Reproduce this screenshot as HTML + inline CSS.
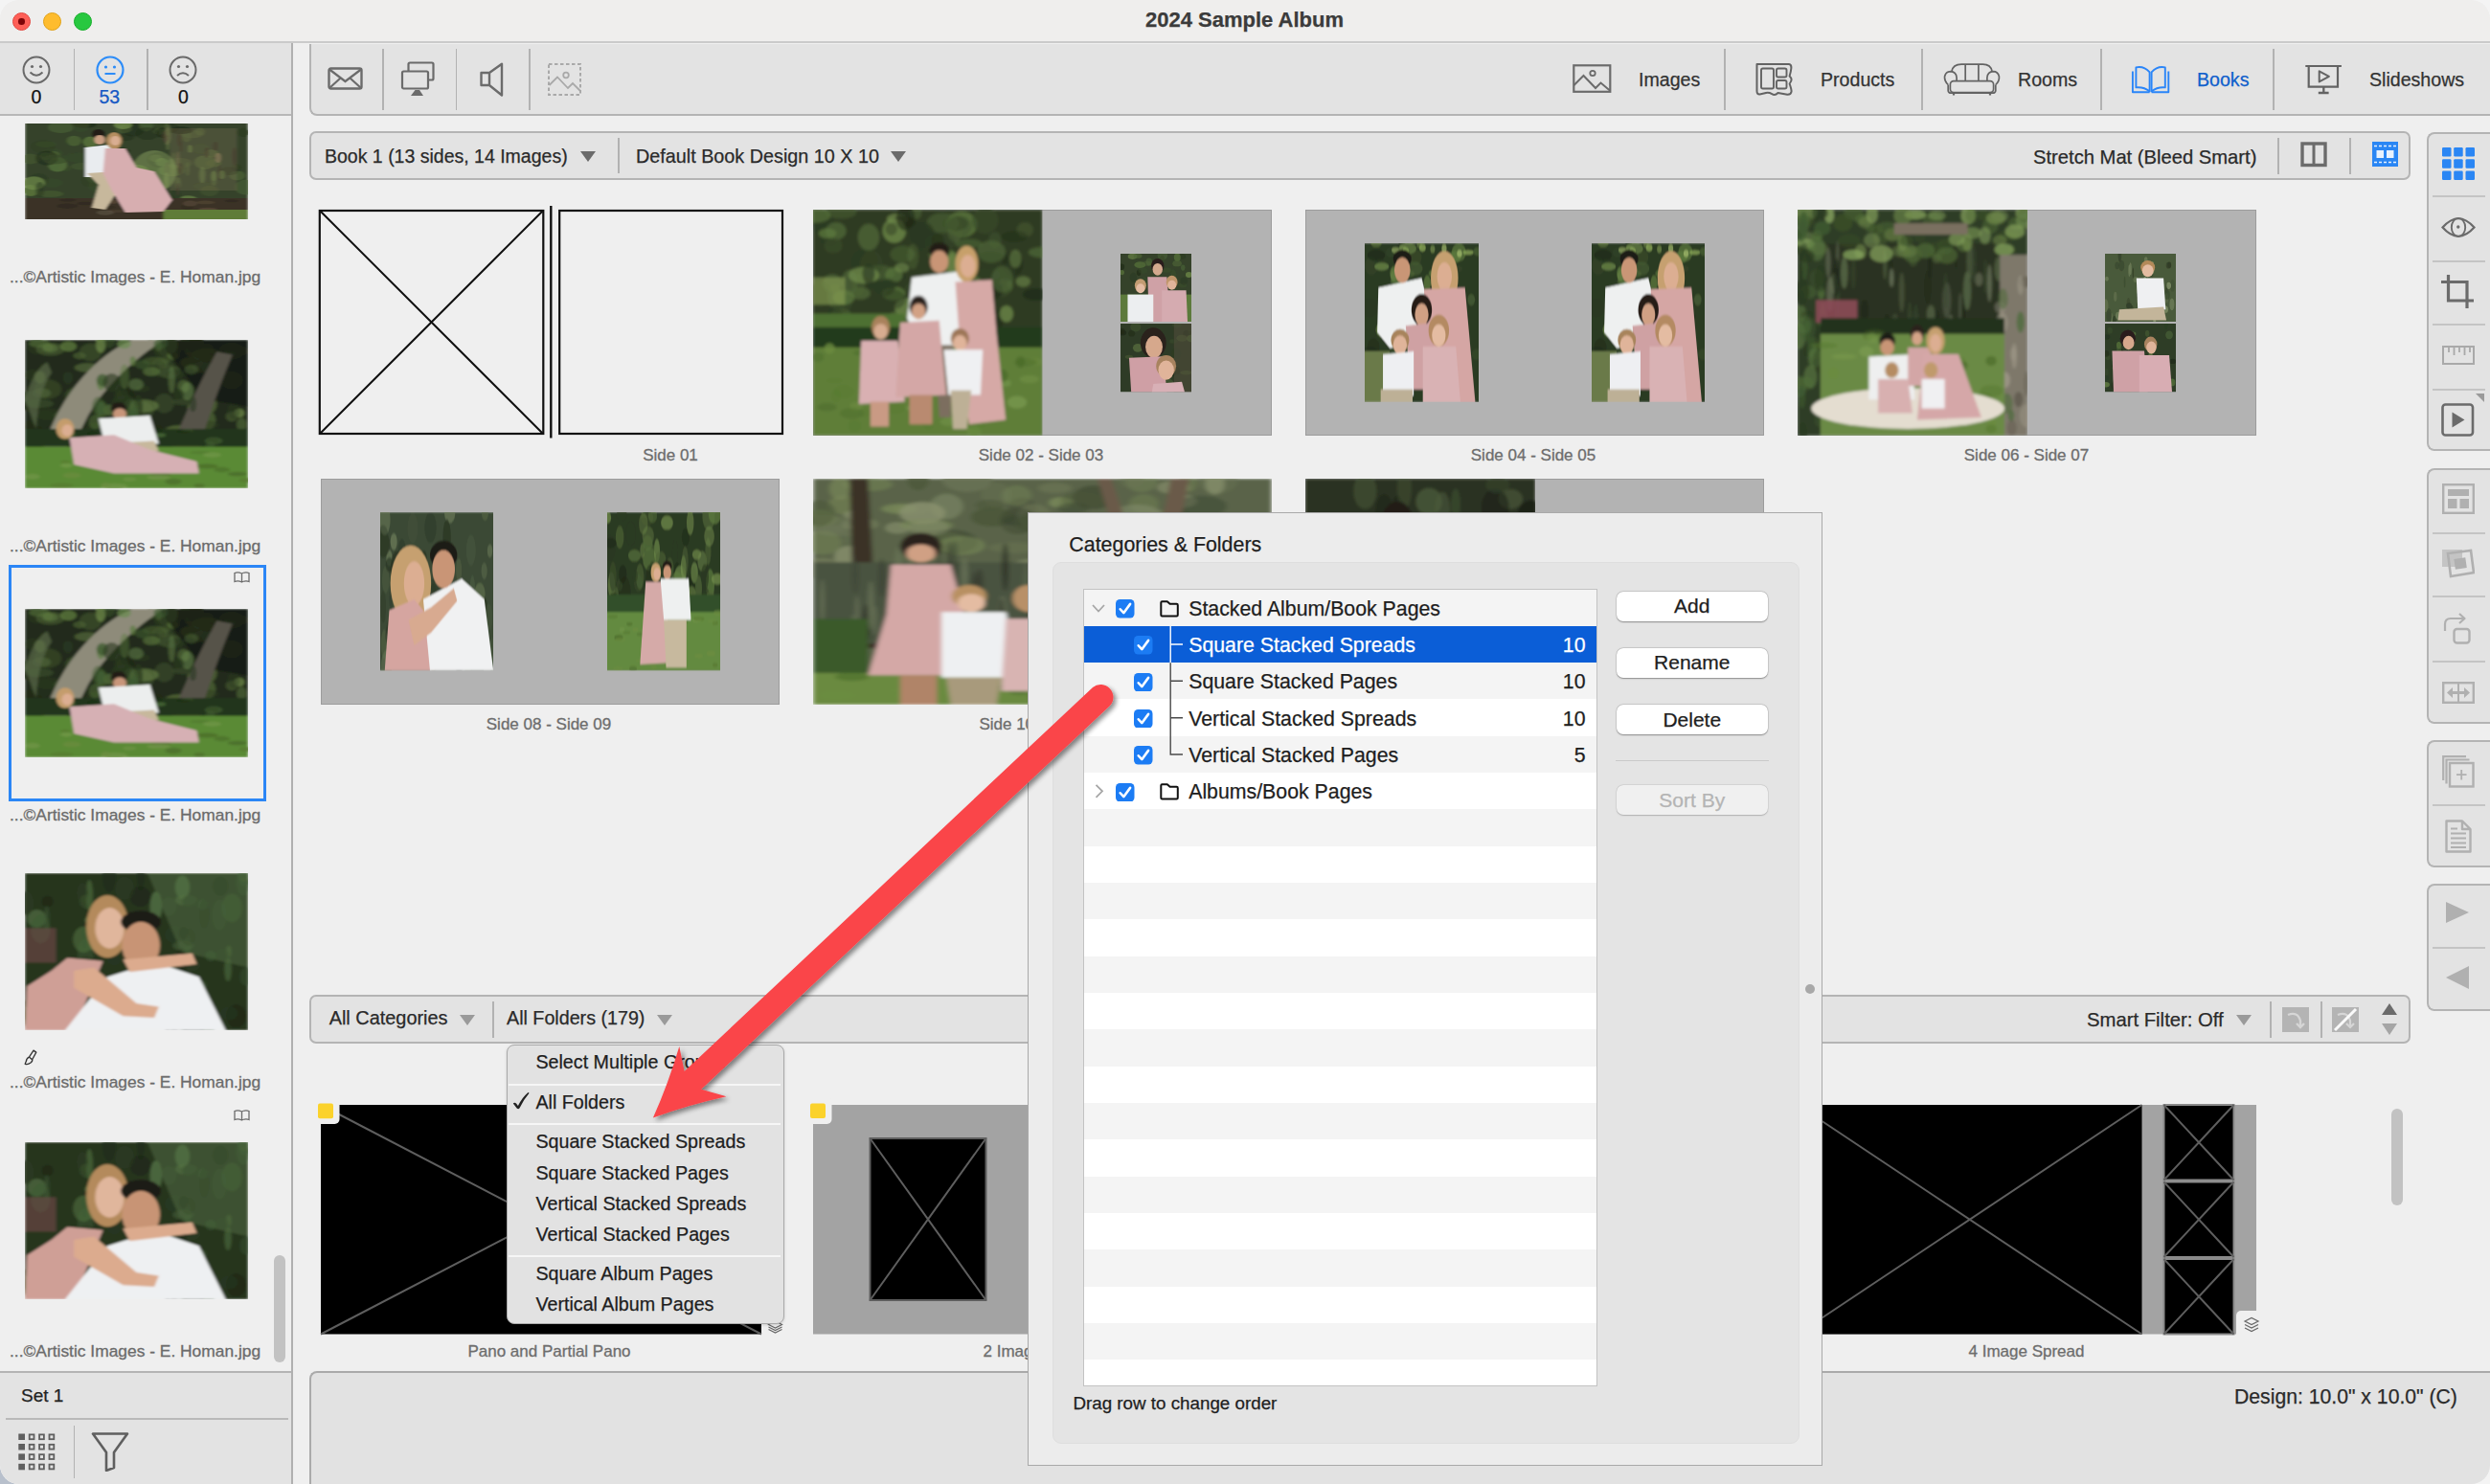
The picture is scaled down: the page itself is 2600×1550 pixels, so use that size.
<!DOCTYPE html>
<html><head><meta charset="utf-8">
<style>
*{box-sizing:border-box;margin:0;padding:0}
html,body{width:2600px;height:1550px;overflow:hidden;background:#f4f4f4}
body{font-family:"Liberation Sans",sans-serif;color:#222;position:relative}
.a{position:absolute}
.win{position:absolute;left:0;top:0;width:2600px;height:1550px;background:#efefef;border-radius:20px;overflow:hidden}
.t{position:absolute;white-space:nowrap;line-height:1;-webkit-text-stroke:0.25px currentColor}
.bar{position:absolute;background:#e3e3e3;border:2px solid #b4b4b4;border-radius:7px}
.vd{position:absolute;width:1.6px;background:#b2b2b2}
.cap{position:absolute;white-space:nowrap;line-height:1;font-size:17px;color:#6d6d6d;text-align:center;-webkit-text-stroke:0.3px currentColor}
.sp{position:absolute;background:#b3b3b3}
.ph{position:absolute;overflow:hidden}
.tri{position:absolute;width:0;height:0;border-left:8px solid transparent;border-right:8px solid transparent;border-top:11px solid #6b6b6b}
</style></head><body>

<svg width="0" height="0" style="position:absolute">
<defs>
<filter id="bl" x="-5%" y="-5%" width="110%" height="110%"><feGaussianBlur stdDeviation="0.6"/></filter>
<linearGradient id="gFol" x1="0" y1="0" x2="0" y2="1"><stop offset="0" stop-color="#3c4a2c"/><stop offset="0.5" stop-color="#2c3820"/><stop offset="1" stop-color="#26301b"/></linearGradient>
<linearGradient id="gGrass" x1="0" y1="0" x2="0" y2="1"><stop offset="0" stop-color="#5c7a35"/><stop offset="1" stop-color="#6f8c45"/></linearGradient>

<symbol id="pc1" viewBox="0 0 100 100" preserveAspectRatio="none"><g filter="url(#bl)"><rect width="100" height="100" fill="#34432a"/><ellipse cx="32.4" cy="12.1" rx="2.2" ry="7.1" fill="#384a2a" opacity="0.39"/><ellipse cx="58.3" cy="72.8" rx="2.1" ry="5.2" fill="#4d6436" opacity="0.38"/><ellipse cx="9.1" cy="34.0" rx="2.5" ry="4.1" fill="#5d7a3e" opacity="0.63"/><ellipse cx="94.8" cy="46.2" rx="2.2" ry="4.1" fill="#2b3a22" opacity="0.60"/><ellipse cx="13.3" cy="33.5" rx="2.5" ry="4.5" fill="#5d7a3e" opacity="0.72"/><ellipse cx="18.1" cy="46.5" rx="2.8" ry="3.5" fill="#384a2a" opacity="0.67"/><ellipse cx="56.4" cy="49.5" rx="4.7" ry="5.1" fill="#2b3a22" opacity="0.49"/><ellipse cx="58.6" cy="36.3" rx="3.0" ry="3.9" fill="#6f8a4a" opacity="0.70"/><ellipse cx="8.2" cy="24.0" rx="5.5" ry="6.6" fill="#2b3a22" opacity="0.48"/><ellipse cx="98.0" cy="9.4" rx="2.7" ry="4.7" fill="#2b3a22" opacity="0.77"/><ellipse cx="42.2" cy="77.0" rx="5.1" ry="5.9" fill="#1f2a18" opacity="0.74"/><ellipse cx="31.4" cy="55.6" rx="4.0" ry="7.0" fill="#5d7a3e" opacity="0.38"/><ellipse cx="9.4" cy="21.6" rx="4.7" ry="3.3" fill="#384a2a" opacity="0.67"/><ellipse cx="64.7" cy="79.4" rx="3.1" ry="4.9" fill="#2b3a22" opacity="0.65"/><ellipse cx="2.3" cy="36.9" rx="4.4" ry="5.5" fill="#4d6436" opacity="0.45"/><ellipse cx="28.7" cy="59.1" rx="3.6" ry="7.4" fill="#2b3a22" opacity="0.39"/><ellipse cx="44.9" cy="44.0" rx="5.3" ry="7.3" fill="#4d6436" opacity="0.48"/><ellipse cx="41.5" cy="28.7" rx="5.8" ry="3.8" fill="#2b3a22" opacity="0.43"/><ellipse cx="23.2" cy="18.7" rx="5.3" ry="3.9" fill="#2b3a22" opacity="0.48"/><ellipse cx="14.6" cy="42.8" rx="4.3" ry="7.8" fill="#5d7a3e" opacity="0.66"/><ellipse cx="51.5" cy="49.4" rx="5.0" ry="5.3" fill="#384a2a" opacity="0.74"/><ellipse cx="95.2" cy="54.4" rx="3.6" ry="5.0" fill="#5d7a3e" opacity="0.40"/><ellipse cx="63.4" cy="5.0" rx="5.9" ry="5.2" fill="#1f2a18" opacity="0.40"/><ellipse cx="60.1" cy="8.2" rx="2.6" ry="3.5" fill="#5d7a3e" opacity="0.51"/><ellipse cx="2.6" cy="69.9" rx="3.5" ry="6.2" fill="#5d7a3e" opacity="0.78"/><ellipse cx="60.2" cy="37.9" rx="5.4" ry="8.0" fill="#1f2a18" opacity="0.56"/><ellipse cx="48.4" cy="6.9" rx="5.0" ry="6.7" fill="#1f2a18" opacity="0.57"/><ellipse cx="69.2" cy="41.3" rx="5.8" ry="5.6" fill="#4d6436" opacity="0.42"/><ellipse cx="54.3" cy="2.2" rx="3.2" ry="6.2" fill="#5d7a3e" opacity="0.39"/><ellipse cx="84.5" cy="41.5" rx="3.4" ry="4.1" fill="#4d6436" opacity="0.59"/><ellipse cx="50.3" cy="50.9" rx="5.2" ry="7.9" fill="#5d7a3e" opacity="0.73"/><ellipse cx="80.6" cy="65.5" rx="5.2" ry="4.0" fill="#384a2a" opacity="0.57"/><ellipse cx="73.1" cy="79.2" rx="3.9" ry="4.0" fill="#6f8a4a" opacity="0.62"/><ellipse cx="34.4" cy="64.7" rx="6.0" ry="7.8" fill="#384a2a" opacity="0.51"/><ellipse cx="22.0" cy="18.1" rx="3.4" ry="5.4" fill="#4d6436" opacity="0.79"/><ellipse cx="61.0" cy="0.2" rx="3.4" ry="6.2" fill="#384a2a" opacity="0.73"/><ellipse cx="12.0" cy="31.1" rx="5.0" ry="5.4" fill="#384a2a" opacity="0.43"/><ellipse cx="78.9" cy="26.6" rx="3.6" ry="5.0" fill="#384a2a" opacity="0.78"/><ellipse cx="72.5" cy="13.6" rx="2.1" ry="6.0" fill="#4d6436" opacity="0.56"/><ellipse cx="65.6" cy="48.9" rx="5.9" ry="6.3" fill="#5d7a3e" opacity="0.51"/><ellipse cx="54.9" cy="10.5" rx="5.2" ry="6.6" fill="#1f2a18" opacity="0.40"/><ellipse cx="74.9" cy="11.1" rx="5.3" ry="4.1" fill="#4d6436" opacity="0.46"/><ellipse cx="29.3" cy="19.2" rx="3.3" ry="5.7" fill="#5d7a3e" opacity="0.73"/><ellipse cx="6.1" cy="59.2" rx="4.6" ry="7.1" fill="#2b3a22" opacity="0.58"/><ellipse cx="82.7" cy="70.3" rx="4.1" ry="5.6" fill="#4d6436" opacity="0.36"/><ellipse cx="44.0" cy="14.6" rx="5.1" ry="3.7" fill="#1f2a18" opacity="0.41"/><ellipse cx="61.9" cy="9.6" rx="3.3" ry="5.6" fill="#1f2a18" opacity="0.60"/><ellipse cx="78.4" cy="8.5" rx="2.2" ry="4.0" fill="#5d7a3e" opacity="0.37"/><ellipse cx="9.8" cy="36.2" rx="5.0" ry="7.6" fill="#1f2a18" opacity="0.55"/><ellipse cx="61.3" cy="40.4" rx="2.8" ry="4.4" fill="#5d7a3e" opacity="0.58"/><ellipse cx="80.7" cy="40.6" rx="4.8" ry="7.4" fill="#4d6436" opacity="0.77"/><ellipse cx="26.0" cy="44.8" rx="5.4" ry="3.7" fill="#4d6436" opacity="0.40"/><ellipse cx="44.2" cy="5.8" rx="3.7" ry="4.1" fill="#4d6436" opacity="0.49"/><ellipse cx="12.2" cy="62.2" rx="4.6" ry="4.8" fill="#384a2a" opacity="0.46"/><ellipse cx="13.7" cy="37.4" rx="5.8" ry="5.0" fill="#384a2a" opacity="0.57"/><ellipse cx="99.0" cy="66.6" rx="4.8" ry="8.0" fill="#4d6436" opacity="0.53"/><ellipse cx="42.1" cy="28.5" rx="4.9" ry="3.1" fill="#1f2a18" opacity="0.60"/><ellipse cx="44.0" cy="1.4" rx="4.1" ry="4.5" fill="#6f8a4a" opacity="0.78"/><ellipse cx="11.3" cy="73.5" rx="5.9" ry="3.5" fill="#4d6436" opacity="0.47"/><ellipse cx="4.0" cy="62.3" rx="5.0" ry="7.1" fill="#6f8a4a" opacity="0.73"/><ellipse cx="67.6" cy="75.7" rx="2.6" ry="7.6" fill="#2b3a22" opacity="0.61"/><ellipse cx="70.0" cy="7.2" rx="5.2" ry="3.9" fill="#1f2a18" opacity="0.75"/><ellipse cx="26.9" cy="1.3" rx="5.2" ry="3.4" fill="#1f2a18" opacity="0.74"/><ellipse cx="6.7" cy="69.0" rx="2.0" ry="8.0" fill="#2b3a22" opacity="0.54"/><ellipse cx="91.5" cy="49.7" rx="4.1" ry="4.2" fill="#1f2a18" opacity="0.40"/><ellipse cx="16.1" cy="4.0" rx="5.7" ry="6.1" fill="#4d6436" opacity="0.59"/><ellipse cx="20.6" cy="35.7" rx="2.7" ry="4.7" fill="#384a2a" opacity="0.36"/><ellipse cx="25.0" cy="1.2" rx="4.0" ry="7.9" fill="#384a2a" opacity="0.58"/><ellipse cx="24.6" cy="35.8" rx="5.3" ry="5.2" fill="#384a2a" opacity="0.57"/><ellipse cx="83.5" cy="31.4" rx="3.2" ry="4.1" fill="#5d7a3e" opacity="0.45"/><rect x="65" y="5" width="30" height="65" fill="#7a6e50" opacity="0.35"/><ellipse cx="68.6" cy="62.3" rx="1.2" ry="6.4" fill="#6a7a48" opacity="0.51"/><ellipse cx="63.8" cy="13.4" rx="1.2" ry="9.3" fill="#8a7a5a" opacity="0.54"/><ellipse cx="63.8" cy="48.2" rx="1.4" ry="8.0" fill="#4a4030" opacity="0.48"/><ellipse cx="70.0" cy="24.0" rx="0.8" ry="5.6" fill="#4a4030" opacity="0.35"/><ellipse cx="74.0" cy="26.4" rx="0.9" ry="4.2" fill="#6a7a48" opacity="0.75"/><ellipse cx="69.2" cy="16.9" rx="0.9" ry="6.8" fill="#4a4030" opacity="0.58"/><ellipse cx="68.6" cy="37.8" rx="0.7" ry="8.9" fill="#8a7a5a" opacity="0.41"/><ellipse cx="81.4" cy="30.6" rx="0.9" ry="5.4" fill="#4a4030" opacity="0.61"/><ellipse cx="79.5" cy="53.8" rx="1.4" ry="8.7" fill="#6a7a48" opacity="0.62"/><ellipse cx="87.2" cy="51.8" rx="0.7" ry="8.3" fill="#4a4030" opacity="0.64"/><ellipse cx="63.4" cy="59.3" rx="1.2" ry="8.4" fill="#6a7a48" opacity="0.72"/><ellipse cx="66.6" cy="39.0" rx="1.1" ry="8.9" fill="#6a7a48" opacity="0.36"/><ellipse cx="84.7" cy="56.9" rx="1.2" ry="8.2" fill="#6a7a48" opacity="0.45"/><ellipse cx="63.0" cy="13.7" rx="1.5" ry="6.3" fill="#4a4030" opacity="0.55"/><ellipse cx="63.7" cy="6.2" rx="1.2" ry="6.9" fill="#6a7a48" opacity="0.35"/><ellipse cx="88.3" cy="53.6" rx="1.4" ry="4.6" fill="#6a7a48" opacity="0.59"/><ellipse cx="86.6" cy="35.8" rx="1.4" ry="5.4" fill="#8a7a5a" opacity="0.69"/><ellipse cx="69.6" cy="47.2" rx="1.0" ry="6.3" fill="#4a4030" opacity="0.57"/><ellipse cx="84.6" cy="54.9" rx="1.2" ry="5.2" fill="#6a7a48" opacity="0.62"/><ellipse cx="72.9" cy="47.3" rx="0.9" ry="7.4" fill="#6a7a48" opacity="0.36"/><ellipse cx="64.0" cy="22.5" rx="0.7" ry="5.3" fill="#6a7a48" opacity="0.57"/><ellipse cx="85.4" cy="23.6" rx="1.0" ry="4.7" fill="#4a4030" opacity="0.75"/><ellipse cx="68.6" cy="68.6" rx="0.6" ry="6.8" fill="#4a4030" opacity="0.72"/><ellipse cx="93.9" cy="34.2" rx="0.9" ry="9.5" fill="#4a4030" opacity="0.77"/><ellipse cx="64.5" cy="10.9" rx="1.1" ry="9.7" fill="#6a7a48" opacity="0.41"/><ellipse cx="58" cy="50" rx="10" ry="22" fill="#8aa060" opacity="0.5"/><rect x="0" y="78" width="100" height="22" fill="#3b3326"/><ellipse cx="82.0" cy="89.2" rx="4.1" ry="1.5" fill="#5a4a38" opacity="0.75"/><ellipse cx="48.6" cy="78.5" rx="4.8" ry="2.4" fill="#5a4a38" opacity="0.53"/><ellipse cx="72.7" cy="87.2" rx="2.9" ry="2.7" fill="#2a241c" opacity="0.35"/><ellipse cx="75.1" cy="96.5" rx="4.8" ry="1.4" fill="#5a4a38" opacity="0.36"/><ellipse cx="74.0" cy="83.6" rx="3.2" ry="3.0" fill="#5a4a38" opacity="0.62"/><ellipse cx="36.1" cy="87.4" rx="4.6" ry="1.6" fill="#2a241c" opacity="0.37"/><ellipse cx="66.2" cy="92.0" rx="2.7" ry="1.5" fill="#5a4a38" opacity="0.58"/><ellipse cx="19.0" cy="86.2" rx="4.7" ry="2.6" fill="#2a241c" opacity="0.63"/><ellipse cx="91.3" cy="98.7" rx="2.6" ry="1.2" fill="#6a6050" opacity="0.77"/><ellipse cx="41.1" cy="91.5" rx="3.9" ry="1.6" fill="#5a4a38" opacity="0.37"/><ellipse cx="92.7" cy="80.8" rx="3.2" ry="1.6" fill="#2a241c" opacity="0.47"/><ellipse cx="73.9" cy="92.4" rx="4.0" ry="1.6" fill="#2a241c" opacity="0.60"/><ellipse cx="39.4" cy="81.7" rx="2.2" ry="2.0" fill="#5a4a38" opacity="0.72"/><ellipse cx="55.0" cy="88.0" rx="5.0" ry="1.9" fill="#2a241c" opacity="0.41"/><ellipse cx="19.2" cy="80.0" rx="3.7" ry="1.6" fill="#2a241c" opacity="0.52"/><ellipse cx="80.9" cy="82.4" rx="4.2" ry="1.8" fill="#5a4a38" opacity="0.54"/><ellipse cx="52.4" cy="86.3" rx="4.3" ry="2.0" fill="#2a241c" opacity="0.61"/><ellipse cx="36.0" cy="93.1" rx="3.9" ry="2.7" fill="#6a6050" opacity="0.45"/><ellipse cx="27.1" cy="83.5" rx="3.9" ry="1.9" fill="#2a241c" opacity="0.49"/><ellipse cx="81.4" cy="99.3" rx="2.1" ry="2.4" fill="#5a4a38" opacity="0.75"/><rect x="62" y="90" width="38" height="10" fill="#5f7c38"/><ellipse cx="33" cy="11" rx="3" ry="5" fill="#221c18"/><ellipse cx="33.5" cy="17" rx="2.4" ry="5" fill="#c99e82"/><path d="M27 25 L38 22 L41 42 L40 56 L27 56 Z" fill="#e9ecef"/><path d="M28 52 L41 50 L44 62 L36 90 L30 88 L33 64 Z" fill="#c7b89c"/><ellipse cx="40" cy="18" rx="3.5" ry="9" fill="#b58e60"/><ellipse cx="40.5" cy="18" rx="2.2" ry="5" fill="#d9ae92"/><path d="M36 26 L45 26 L50 46 L58 50 L66 80 L62 92 L45 93 L39 70 L35 52 Z" fill="#d7aeb0"/></g></symbol>
<symbol id="pc2" viewBox="0 0 100 100" preserveAspectRatio="none"><g filter="url(#bl)"><rect width="100" height="100" fill="#222c1a"/><ellipse cx="47.3" cy="41.1" rx="2.4" ry="6.7" fill="#1f2a18" opacity="0.77"/><ellipse cx="52.8" cy="32.8" rx="3.2" ry="2.5" fill="#2b3a22" opacity="0.42"/><ellipse cx="52.2" cy="47.7" rx="5.5" ry="6.2" fill="#384a2a" opacity="0.75"/><ellipse cx="8.5" cy="54.4" rx="5.9" ry="3.2" fill="#1f2a18" opacity="0.76"/><ellipse cx="64.6" cy="21.3" rx="5.1" ry="4.6" fill="#4d6436" opacity="0.55"/><ellipse cx="76.4" cy="7.0" rx="4.6" ry="4.9" fill="#6f8a4a" opacity="0.52"/><ellipse cx="22.4" cy="42.1" rx="4.7" ry="7.0" fill="#1f2a18" opacity="0.48"/><ellipse cx="31.6" cy="58.8" rx="4.4" ry="3.2" fill="#4d6436" opacity="0.46"/><ellipse cx="96.1" cy="49.3" rx="2.3" ry="3.0" fill="#6f8a4a" opacity="0.75"/><ellipse cx="64.7" cy="5.7" rx="5.3" ry="6.6" fill="#4d6436" opacity="0.45"/><ellipse cx="3.4" cy="23.7" rx="3.8" ry="4.0" fill="#2b3a22" opacity="0.35"/><ellipse cx="29.2" cy="59.2" rx="3.0" ry="6.8" fill="#1f2a18" opacity="0.49"/><ellipse cx="82.0" cy="16.2" rx="3.3" ry="6.4" fill="#4d6436" opacity="0.40"/><ellipse cx="62.4" cy="42.7" rx="4.4" ry="6.6" fill="#4d6436" opacity="0.38"/><ellipse cx="59.5" cy="64.5" rx="3.1" ry="6.9" fill="#1f2a18" opacity="0.41"/><ellipse cx="5.2" cy="4.2" rx="4.2" ry="5.6" fill="#2b3a22" opacity="0.49"/><ellipse cx="11.3" cy="5.6" rx="3.6" ry="2.9" fill="#4d6436" opacity="0.77"/><ellipse cx="74.6" cy="2.2" rx="5.6" ry="6.2" fill="#384a2a" opacity="0.79"/><ellipse cx="44.2" cy="7.6" rx="3.4" ry="3.8" fill="#1f2a18" opacity="0.78"/><ellipse cx="12.4" cy="67.5" rx="3.9" ry="5.8" fill="#4d6436" opacity="0.49"/><ellipse cx="80.4" cy="6.1" rx="4.4" ry="3.9" fill="#384a2a" opacity="0.76"/><ellipse cx="19.3" cy="25.5" rx="2.2" ry="4.1" fill="#2b3a22" opacity="0.72"/><ellipse cx="76.7" cy="2.8" rx="4.3" ry="6.0" fill="#1f2a18" opacity="0.38"/><ellipse cx="19.5" cy="4.4" rx="3.7" ry="3.4" fill="#5d7a3e" opacity="0.78"/><ellipse cx="61.7" cy="18.4" rx="5.4" ry="6.6" fill="#384a2a" opacity="0.48"/><ellipse cx="72.2" cy="41.7" rx="6.7" ry="2.3" fill="#384a2a" opacity="0.72"/><ellipse cx="10.7" cy="50.1" rx="6.8" ry="3.9" fill="#2b3a22" opacity="0.46"/><ellipse cx="43.0" cy="34.5" rx="2.9" ry="6.0" fill="#2b3a22" opacity="0.68"/><ellipse cx="82.3" cy="54.1" rx="3.2" ry="6.3" fill="#5d7a3e" opacity="0.56"/><ellipse cx="78.4" cy="41.7" rx="3.0" ry="5.8" fill="#5d7a3e" opacity="0.46"/><ellipse cx="6.5" cy="2.4" rx="4.7" ry="2.8" fill="#5d7a3e" opacity="0.54"/><ellipse cx="10.5" cy="5.1" rx="2.4" ry="2.5" fill="#5d7a3e" opacity="0.57"/><ellipse cx="71.0" cy="31.3" rx="2.7" ry="4.3" fill="#4d6436" opacity="0.75"/><ellipse cx="23.5" cy="37.7" rx="5.8" ry="5.9" fill="#384a2a" opacity="0.48"/><ellipse cx="27.9" cy="18.7" rx="5.7" ry="3.0" fill="#6f8a4a" opacity="0.46"/><ellipse cx="24.5" cy="10.7" rx="2.9" ry="2.3" fill="#5d7a3e" opacity="0.46"/><ellipse cx="24.6" cy="36.8" rx="6.0" ry="5.3" fill="#384a2a" opacity="0.80"/><ellipse cx="10.2" cy="33.2" rx="6.2" ry="6.6" fill="#4d6436" opacity="0.37"/><ellipse cx="29.4" cy="8.3" rx="5.0" ry="6.1" fill="#4d6436" opacity="0.44"/><ellipse cx="7.5" cy="35.9" rx="4.2" ry="3.3" fill="#4d6436" opacity="0.70"/><ellipse cx="94.6" cy="7.4" rx="5.5" ry="3.7" fill="#5d7a3e" opacity="0.37"/><ellipse cx="34.0" cy="3.1" rx="2.2" ry="5.7" fill="#6f8a4a" opacity="0.76"/><ellipse cx="81.5" cy="57.3" rx="5.4" ry="2.9" fill="#2b3a22" opacity="0.49"/><ellipse cx="20.3" cy="55.7" rx="4.4" ry="4.0" fill="#5d7a3e" opacity="0.71"/><ellipse cx="66.4" cy="10.8" rx="2.5" ry="2.8" fill="#5d7a3e" opacity="0.66"/><ellipse cx="41.0" cy="19.8" rx="4.1" ry="2.3" fill="#6f8a4a" opacity="0.69"/><ellipse cx="88.4" cy="29.0" rx="6.3" ry="7.0" fill="#1f2a18" opacity="0.51"/><ellipse cx="19.7" cy="51.0" rx="6.7" ry="4.2" fill="#4d6436" opacity="0.42"/><ellipse cx="11.4" cy="6.3" rx="6.4" ry="4.3" fill="#5d7a3e" opacity="0.42"/><ellipse cx="1.5" cy="38.6" rx="6.0" ry="4.0" fill="#384a2a" opacity="0.61"/><ellipse cx="92.7" cy="51.6" rx="2.7" ry="3.4" fill="#4d6436" opacity="0.58"/><ellipse cx="92.5" cy="7.6" rx="5.8" ry="6.0" fill="#2b3a22" opacity="0.71"/><ellipse cx="30.2" cy="58.6" rx="6.9" ry="4.4" fill="#1f2a18" opacity="0.37"/><ellipse cx="92.6" cy="27.2" rx="5.1" ry="6.1" fill="#384a2a" opacity="0.42"/><ellipse cx="78.6" cy="15.5" rx="5.1" ry="3.0" fill="#2b3a22" opacity="0.56"/><ellipse cx="56.5" cy="2.9" rx="2.8" ry="3.8" fill="#5d7a3e" opacity="0.42"/><ellipse cx="97.1" cy="57.1" rx="2.2" ry="4.8" fill="#4d6436" opacity="0.69"/><ellipse cx="3.8" cy="58.7" rx="3.9" ry="4.3" fill="#1f2a18" opacity="0.73"/><ellipse cx="77.8" cy="45.4" rx="4.9" ry="4.1" fill="#6f8a4a" opacity="0.65"/><ellipse cx="44.7" cy="30.7" rx="2.0" ry="6.9" fill="#1f2a18" opacity="0.56"/><ellipse cx="44.7" cy="43.3" rx="6.2" ry="6.1" fill="#2b3a22" opacity="0.53"/><ellipse cx="6.7" cy="25.1" rx="2.5" ry="4.2" fill="#6f8a4a" opacity="0.58"/><ellipse cx="4.1" cy="44.6" rx="6.6" ry="3.6" fill="#1f2a18" opacity="0.67"/><ellipse cx="8.0" cy="52.6" rx="5.3" ry="5.9" fill="#2b3a22" opacity="0.36"/><ellipse cx="6.6" cy="43.0" rx="6.1" ry="3.0" fill="#384a2a" opacity="0.79"/><ellipse cx="49.2" cy="67.0" rx="5.4" ry="5.6" fill="#4d6436" opacity="0.45"/><ellipse cx="83.3" cy="42.7" rx="2.8" ry="6.5" fill="#6f8a4a" opacity="0.47"/><ellipse cx="81.6" cy="10.1" rx="6.8" ry="4.4" fill="#5d7a3e" opacity="0.62"/><ellipse cx="61.6" cy="16.6" rx="2.2" ry="2.9" fill="#6f8a4a" opacity="0.42"/><ellipse cx="93.6" cy="47.6" rx="2.8" ry="5.9" fill="#2b3a22" opacity="0.40"/><ellipse cx="53.1" cy="44.5" rx="6.8" ry="4.3" fill="#6f8a4a" opacity="0.58"/><ellipse cx="68.9" cy="62.7" rx="7.0" ry="5.1" fill="#6f8a4a" opacity="0.53"/><ellipse cx="79.8" cy="18.5" rx="4.9" ry="3.8" fill="#6f8a4a" opacity="0.69"/><ellipse cx="44.2" cy="12.4" rx="6.8" ry="3.5" fill="#384a2a" opacity="0.58"/><ellipse cx="31.0" cy="67.6" rx="6.6" ry="6.5" fill="#5d7a3e" opacity="0.68"/><ellipse cx="74.7" cy="15.5" rx="5.1" ry="4.2" fill="#6f8a4a" opacity="0.58"/><ellipse cx="89.6" cy="9.2" rx="5.1" ry="2.2" fill="#4d6436" opacity="0.37"/><ellipse cx="56.7" cy="21.3" rx="3.8" ry="3.1" fill="#5d7a3e" opacity="0.61"/><ellipse cx="58.9" cy="14.3" rx="6.1" ry="2.8" fill="#5d7a3e" opacity="0.36"/><ellipse cx="80.2" cy="49.5" rx="2.5" ry="5.2" fill="#2b3a22" opacity="0.74"/><path d="M60 0 L100 0 L100 45 L80 40 Z" fill="#161c12" opacity="0.8"/><path d="M0 40 Q4 20 10 15 L12 22 Q6 35 5 60 Z" fill="#5a6a48" opacity="0.7"/><path d="M8 74 Q14 45 26 25 Q36 8 48 0 L62 0 Q44 18 32 42 Q24 60 22 76 Z" fill="#8e8b7a"/><path d="M66 72 Q74 40 86 8 L93 10 Q84 42 78 74 Z" fill="#56524a"/><ellipse cx="67.5" cy="23.3" rx="3.9" ry="3.3" fill="#2a3a20" opacity="0.72"/><ellipse cx="72.8" cy="34.5" rx="2.8" ry="6.1" fill="#6a8a50" opacity="0.57"/><ellipse cx="37.9" cy="0.0" rx="2.6" ry="5.4" fill="#3e5a30" opacity="0.46"/><ellipse cx="32.8" cy="45.2" rx="2.8" ry="6.9" fill="#3e5a30" opacity="0.44"/><ellipse cx="49.8" cy="30.1" rx="3.4" ry="4.0" fill="#6a8a50" opacity="0.49"/><ellipse cx="44.4" cy="2.8" rx="3.1" ry="3.0" fill="#6a8a50" opacity="0.73"/><ellipse cx="65.8" cy="27.0" rx="1.5" ry="9.0" fill="#6a8a50" opacity="0.47"/><ellipse cx="60.9" cy="7.1" rx="3.1" ry="4.6" fill="#2a3a20" opacity="0.60"/><ellipse cx="50.9" cy="45.7" rx="1.9" ry="8.6" fill="#2a3a20" opacity="0.75"/><ellipse cx="34.1" cy="29.4" rx="1.8" ry="4.4" fill="#5a7a40" opacity="0.68"/><ellipse cx="75.3" cy="43.3" rx="1.6" ry="5.3" fill="#2a3a20" opacity="0.62"/><ellipse cx="48.2" cy="49.4" rx="2.4" ry="6.2" fill="#6a8a50" opacity="0.35"/><ellipse cx="31.3" cy="55.4" rx="2.7" ry="4.8" fill="#5a7a40" opacity="0.45"/><ellipse cx="59.9" cy="4.5" rx="1.4" ry="3.2" fill="#5a7a40" opacity="0.40"/><ellipse cx="74.6" cy="20.0" rx="3.1" ry="3.2" fill="#5a7a40" opacity="0.41"/><ellipse cx="60.9" cy="2.5" rx="3.2" ry="3.4" fill="#3e5a30" opacity="0.62"/><ellipse cx="47.4" cy="47.4" rx="3.6" ry="7.5" fill="#3e5a30" opacity="0.67"/><ellipse cx="48.4" cy="14.3" rx="1.3" ry="3.2" fill="#5a7a40" opacity="0.73"/><ellipse cx="69.0" cy="36.8" rx="2.4" ry="3.8" fill="#2a3a20" opacity="0.71"/><ellipse cx="61.0" cy="17.1" rx="2.3" ry="3.1" fill="#2a3a20" opacity="0.47"/><ellipse cx="43.6" cy="41.5" rx="3.7" ry="7.6" fill="#2a3a20" opacity="0.62"/><ellipse cx="52.9" cy="16.7" rx="3.4" ry="3.2" fill="#3e5a30" opacity="0.58"/><ellipse cx="34.7" cy="27.2" rx="2.6" ry="4.3" fill="#3e5a30" opacity="0.74"/><ellipse cx="34.4" cy="47.5" rx="2.3" ry="6.1" fill="#5a7a40" opacity="0.48"/><ellipse cx="66.0" cy="3.1" rx="2.5" ry="5.9" fill="#2a3a20" opacity="0.71"/><ellipse cx="38.9" cy="28.7" rx="3.9" ry="6.1" fill="#2a3a20" opacity="0.61"/><ellipse cx="37.6" cy="47.3" rx="2.5" ry="3.7" fill="#5a7a40" opacity="0.64"/><ellipse cx="33.9" cy="45.7" rx="2.9" ry="5.1" fill="#3e5a30" opacity="0.53"/><ellipse cx="48.9" cy="51.6" rx="2.3" ry="6.9" fill="#3e5a30" opacity="0.52"/><ellipse cx="44.6" cy="24.8" rx="2.1" ry="8.3" fill="#5a7a40" opacity="0.46"/><rect x="0" y="60" width="100" height="12" fill="#24361c"/><ellipse cx="46.1" cy="66.4" rx="3.0" ry="1.7" fill="#4a6a38" opacity="0.42"/><ellipse cx="84.3" cy="67.9" rx="2.5" ry="1.9" fill="#1a2a14" opacity="0.70"/><ellipse cx="57.9" cy="61.5" rx="3.9" ry="2.4" fill="#1a2a14" opacity="0.58"/><ellipse cx="26.7" cy="69.1" rx="4.2" ry="2.9" fill="#4a6a38" opacity="0.68"/><ellipse cx="60.3" cy="64.2" rx="3.0" ry="1.4" fill="#4a6a38" opacity="0.79"/><ellipse cx="72.9" cy="61.2" rx="2.6" ry="1.3" fill="#4a6a38" opacity="0.42"/><ellipse cx="30.2" cy="63.6" rx="2.6" ry="2.3" fill="#1a2a14" opacity="0.40"/><ellipse cx="20.6" cy="64.7" rx="2.0" ry="2.7" fill="#4a6a38" opacity="0.55"/><ellipse cx="22.2" cy="71.8" rx="3.4" ry="1.3" fill="#1a2a14" opacity="0.62"/><ellipse cx="40.5" cy="68.9" rx="4.1" ry="2.2" fill="#1a2a14" opacity="0.64"/><ellipse cx="84.6" cy="68.0" rx="4.0" ry="2.3" fill="#4a6a38" opacity="0.55"/><ellipse cx="31.3" cy="67.5" rx="4.7" ry="1.5" fill="#4a6a38" opacity="0.53"/><ellipse cx="71.3" cy="61.9" rx="3.4" ry="1.0" fill="#1a2a14" opacity="0.74"/><ellipse cx="51.8" cy="67.9" rx="4.7" ry="1.7" fill="#4a6a38" opacity="0.35"/><ellipse cx="83.2" cy="70.9" rx="2.1" ry="2.1" fill="#4a6a38" opacity="0.42"/><rect x="0" y="72" width="100" height="28" fill="#5a8a34"/><ellipse cx="78.2" cy="98.3" rx="2.4" ry="1.6" fill="#4a6a2a" opacity="0.59"/><ellipse cx="71.7" cy="86.3" rx="4.1" ry="1.4" fill="#4a6a2a" opacity="0.78"/><ellipse cx="21.0" cy="91.2" rx="4.1" ry="1.9" fill="#6c8c40" opacity="0.68"/><ellipse cx="61.4" cy="89.9" rx="3.1" ry="1.4" fill="#4a6a2a" opacity="0.36"/><ellipse cx="41.9" cy="83.8" rx="4.3" ry="1.1" fill="#4a6a2a" opacity="0.49"/><ellipse cx="40.0" cy="98.7" rx="6.0" ry="2.0" fill="#7a9a50" opacity="0.56"/><ellipse cx="16.5" cy="98.0" rx="5.2" ry="1.6" fill="#587a32" opacity="0.56"/><ellipse cx="56.2" cy="78.3" rx="3.4" ry="1.6" fill="#7a9a50" opacity="0.72"/><ellipse cx="81.6" cy="85.1" rx="5.0" ry="1.6" fill="#4a6a2a" opacity="0.70"/><ellipse cx="46.9" cy="93.9" rx="3.1" ry="1.4" fill="#7a9a50" opacity="0.46"/><ellipse cx="42.6" cy="77.2" rx="5.2" ry="1.8" fill="#587a32" opacity="0.51"/><ellipse cx="65.4" cy="81.0" rx="3.7" ry="1.6" fill="#6c8c40" opacity="0.65"/><ellipse cx="36.2" cy="98.0" rx="2.2" ry="1.8" fill="#6c8c40" opacity="0.76"/><ellipse cx="78.4" cy="75.9" rx="4.5" ry="1.0" fill="#4a6a2a" opacity="0.36"/><ellipse cx="95.2" cy="90.4" rx="4.4" ry="1.6" fill="#4a6a2a" opacity="0.73"/><ellipse cx="18.6" cy="84.7" rx="2.8" ry="1.4" fill="#7a9a50" opacity="0.59"/><ellipse cx="61.0" cy="91.3" rx="4.7" ry="1.9" fill="#587a32" opacity="0.70"/><ellipse cx="83.9" cy="77.5" rx="4.1" ry="1.7" fill="#7a9a50" opacity="0.55"/><ellipse cx="88.3" cy="87.5" rx="3.7" ry="1.8" fill="#4a6a2a" opacity="0.56"/><ellipse cx="55.7" cy="85.6" rx="4.8" ry="1.2" fill="#7a9a50" opacity="0.42"/><ellipse cx="60.0" cy="92.6" rx="5.4" ry="1.5" fill="#7a9a50" opacity="0.60"/><ellipse cx="66.5" cy="95.5" rx="3.7" ry="2.0" fill="#4a6a2a" opacity="0.65"/><ellipse cx="18.1" cy="82.1" rx="2.1" ry="1.0" fill="#587a32" opacity="0.68"/><ellipse cx="99.9" cy="94.6" rx="4.0" ry="1.5" fill="#587a32" opacity="0.75"/><ellipse cx="3.4" cy="92.1" rx="3.4" ry="1.9" fill="#7a9a50" opacity="0.51"/><ellipse cx="42" cy="46" rx="3.5" ry="4" fill="#221c18"/><ellipse cx="42.5" cy="50" rx="3" ry="4" fill="#c8967a"/><path d="M33 53 L56 51 L60 70 L36 72 Z" fill="#eceeee"/><path d="M34 70 L58 68 L60 75 L36 78 Z" fill="#c7b89c"/><ellipse cx="18" cy="60" rx="4" ry="7" fill="#c49c6c"/><ellipse cx="19" cy="61" rx="2.5" ry="4" fill="#dcae92"/><path d="M20 66 L40 64 L56 74 L77 82 L78 90 L40 90 L22 84 Z" fill="#d6b0b4"/></g></symbol>
<symbol id="pc3" viewBox="0 0 100 100" preserveAspectRatio="none"><g filter="url(#bl)"><rect width="100" height="100" fill="#26341f"/><ellipse cx="47.5" cy="52.6" rx="2.1" ry="5.4" fill="#3e5a34" opacity="0.46"/><ellipse cx="5.3" cy="28.9" rx="4.3" ry="5.8" fill="#5a7a48" opacity="0.58"/><ellipse cx="27.2" cy="50.6" rx="3.6" ry="8.5" fill="#3e5a34" opacity="0.50"/><ellipse cx="31.7" cy="29.9" rx="4.9" ry="3.6" fill="#4a6a3a" opacity="0.80"/><ellipse cx="39.9" cy="55.4" rx="3.2" ry="3.3" fill="#2b3a22" opacity="0.49"/><ellipse cx="0.6" cy="19.0" rx="3.4" ry="7.6" fill="#2b3a22" opacity="0.71"/><ellipse cx="91.0" cy="61.2" rx="1.6" ry="7.7" fill="#4a6a3a" opacity="0.66"/><ellipse cx="87.6" cy="8.3" rx="3.7" ry="6.2" fill="#1f2a18" opacity="0.69"/><ellipse cx="10.1" cy="18.1" rx="2.7" ry="3.7" fill="#1f2a18" opacity="0.77"/><ellipse cx="1.3" cy="87.2" rx="4.1" ry="6.9" fill="#3e5a34" opacity="0.47"/><ellipse cx="30.2" cy="42.2" rx="1.1" ry="7.0" fill="#5a7a48" opacity="0.61"/><ellipse cx="91.4" cy="49.8" rx="1.2" ry="3.8" fill="#4a6a3a" opacity="0.71"/><ellipse cx="57.5" cy="91.9" rx="1.3" ry="7.8" fill="#2b3a22" opacity="0.62"/><ellipse cx="99.3" cy="65.9" rx="2.9" ry="5.9" fill="#3e5a34" opacity="0.40"/><ellipse cx="64.5" cy="21.2" rx="3.5" ry="6.0" fill="#3e5a34" opacity="0.35"/><ellipse cx="66.9" cy="98.7" rx="1.9" ry="3.8" fill="#1f2a18" opacity="0.56"/><ellipse cx="27.5" cy="56.9" rx="3.9" ry="4.3" fill="#2b3a22" opacity="0.37"/><ellipse cx="77.4" cy="71.4" rx="3.9" ry="3.6" fill="#3e5a34" opacity="0.63"/><ellipse cx="70.9" cy="46.1" rx="4.7" ry="3.4" fill="#5a7a48" opacity="0.36"/><ellipse cx="6.1" cy="88.3" rx="1.3" ry="5.2" fill="#4a6a3a" opacity="0.68"/><ellipse cx="16.6" cy="86.1" rx="3.4" ry="5.2" fill="#2b3a22" opacity="0.78"/><ellipse cx="72.8" cy="47.0" rx="1.6" ry="8.6" fill="#3e5a34" opacity="0.51"/><ellipse cx="64.5" cy="63.0" rx="2.9" ry="8.4" fill="#2b3a22" opacity="0.55"/><ellipse cx="27.2" cy="75.5" rx="2.2" ry="3.4" fill="#5a7a48" opacity="0.79"/><ellipse cx="70.3" cy="82.7" rx="4.5" ry="8.1" fill="#5a7a48" opacity="0.36"/><ellipse cx="15.1" cy="83.3" rx="2.7" ry="9.2" fill="#4a6a3a" opacity="0.52"/><ellipse cx="68.5" cy="60.2" rx="4.2" ry="5.0" fill="#3e5a34" opacity="0.35"/><ellipse cx="26.3" cy="42.3" rx="4.7" ry="8.3" fill="#4a6a3a" opacity="0.70"/><ellipse cx="28.9" cy="14.1" rx="1.6" ry="9.8" fill="#4a6a3a" opacity="0.71"/><ellipse cx="54.8" cy="77.7" rx="2.4" ry="3.6" fill="#2b3a22" opacity="0.60"/><ellipse cx="79.7" cy="20.0" rx="2.2" ry="3.4" fill="#3e5a34" opacity="0.53"/><ellipse cx="70.8" cy="92.6" rx="4.0" ry="8.5" fill="#4a6a3a" opacity="0.56"/><ellipse cx="8.8" cy="80.7" rx="1.9" ry="7.1" fill="#1f2a18" opacity="0.75"/><ellipse cx="88.5" cy="52.2" rx="3.0" ry="4.4" fill="#2b3a22" opacity="0.45"/><ellipse cx="9.2" cy="80.6" rx="2.5" ry="7.0" fill="#5a7a48" opacity="0.53"/><ellipse cx="51.7" cy="14.9" rx="4.7" ry="6.5" fill="#1f2a18" opacity="0.74"/><ellipse cx="37.2" cy="46.3" rx="1.6" ry="7.2" fill="#1f2a18" opacity="0.51"/><ellipse cx="51.9" cy="2.1" rx="1.8" ry="9.1" fill="#1f2a18" opacity="0.60"/><ellipse cx="58.7" cy="21.4" rx="2.7" ry="9.6" fill="#5a7a48" opacity="0.70"/><ellipse cx="81.9" cy="96.3" rx="4.4" ry="5.4" fill="#5a7a48" opacity="0.80"/><ellipse cx="37.8" cy="2.8" rx="3.2" ry="9.1" fill="#1f2a18" opacity="0.56"/><ellipse cx="94.7" cy="91.0" rx="4.5" ry="7.5" fill="#1f2a18" opacity="0.76"/><ellipse cx="70.6" cy="9.0" rx="3.3" ry="7.5" fill="#5a7a48" opacity="0.78"/><ellipse cx="67.0" cy="39.3" rx="4.4" ry="5.6" fill="#2b3a22" opacity="0.46"/><ellipse cx="72.1" cy="17.2" rx="4.8" ry="3.4" fill="#5a7a48" opacity="0.60"/><ellipse cx="2.8" cy="91.9" rx="4.1" ry="8.0" fill="#5a7a48" opacity="0.64"/><ellipse cx="98.5" cy="5.6" rx="2.3" ry="3.0" fill="#3e5a34" opacity="0.44"/><ellipse cx="74.8" cy="59.0" rx="4.0" ry="3.7" fill="#2b3a22" opacity="0.50"/><ellipse cx="25.7" cy="12.4" rx="2.5" ry="6.1" fill="#2b3a22" opacity="0.71"/><ellipse cx="91.4" cy="89.2" rx="3.9" ry="4.4" fill="#2b3a22" opacity="0.37"/><ellipse cx="92.8" cy="22.1" rx="4.5" ry="9.2" fill="#4a6a3a" opacity="0.41"/><ellipse cx="44.7" cy="9.7" rx="4.4" ry="7.4" fill="#2b3a22" opacity="0.55"/><ellipse cx="34.0" cy="82.3" rx="1.5" ry="5.6" fill="#2b3a22" opacity="0.50"/><ellipse cx="73.6" cy="18.0" rx="3.2" ry="4.0" fill="#2b3a22" opacity="0.74"/><ellipse cx="26.6" cy="41.2" rx="1.1" ry="7.0" fill="#3e5a34" opacity="0.48"/><ellipse cx="80.4" cy="26.1" rx="2.3" ry="9.3" fill="#1f2a18" opacity="0.40"/><ellipse cx="97.9" cy="5.7" rx="3.2" ry="8.8" fill="#3e5a34" opacity="0.40"/><ellipse cx="75.5" cy="97.1" rx="5.0" ry="10.0" fill="#2b3a22" opacity="0.77"/><ellipse cx="9.8" cy="28.9" rx="1.2" ry="8.1" fill="#3e5a34" opacity="0.48"/><ellipse cx="97.9" cy="1.6" rx="2.4" ry="4.0" fill="#4a6a3a" opacity="0.35"/><ellipse cx="83.2" cy="52.7" rx="2.4" ry="3.3" fill="#3e5a34" opacity="0.53"/><ellipse cx="27.7" cy="18.1" rx="3.1" ry="4.6" fill="#3e5a34" opacity="0.43"/><ellipse cx="60.1" cy="82.9" rx="3.9" ry="8.3" fill="#4a6a3a" opacity="0.43"/><ellipse cx="13.7" cy="67.0" rx="3.3" ry="4.4" fill="#3e5a34" opacity="0.38"/><ellipse cx="73.3" cy="40.8" rx="3.1" ry="5.4" fill="#1f2a18" opacity="0.48"/><ellipse cx="63.9" cy="94.6" rx="1.1" ry="9.4" fill="#1f2a18" opacity="0.56"/><ellipse cx="87.2" cy="26.6" rx="3.3" ry="9.9" fill="#3e5a34" opacity="0.37"/><ellipse cx="70.2" cy="57.5" rx="2.4" ry="9.5" fill="#1f2a18" opacity="0.79"/><ellipse cx="7.1" cy="35.7" rx="4.3" ry="9.1" fill="#3e5a34" opacity="0.49"/><ellipse cx="71.1" cy="38.1" rx="2.2" ry="3.8" fill="#1f2a18" opacity="0.68"/><path d="M55 0 L100 0 L100 60 L70 50 Z" fill="#4e6a40" opacity="0.55"/><rect x="0" y="35" width="14" height="22" fill="#7a4a4c" opacity="0.55"/><ellipse cx="37" cy="34" rx="9.5" ry="20" fill="#b48a5c"/><ellipse cx="38" cy="35" rx="6.5" ry="13" fill="#e0b69c"/><path d="M0 100 L1 72 L12 62 L19 54 L35 56 L22 100 Z" fill="#cf9f96"/><path d="M18 100 L37 66 L46 62 L61 58 L78 66 L90 100 Z" fill="#eef0f2"/><ellipse cx="52" cy="31" rx="9" ry="7" fill="#1f1a18"/><ellipse cx="52" cy="46" rx="8.5" ry="15" fill="#c89474"/><path d="M44 55 L75 51 L77 58 L47 63 Z" fill="#dcab8e"/><path d="M22 62 L31 60 L50 83 L60 85 L58 92 L44 91 L22 73 Z" fill="#dcab8e"/></g></symbol>
<symbol id="pf1" viewBox="0 0 100 100" preserveAspectRatio="none"><g filter="url(#bl)"><rect width="100" height="100" fill="#2e3b23"/><ellipse cx="44.6" cy="1.4" rx="2.7" ry="3.0" fill="#5d7a3e" opacity="0.39"/><ellipse cx="61.9" cy="9.2" rx="3.3" ry="5.3" fill="#6f8a4a" opacity="0.36"/><ellipse cx="9.6" cy="38.4" rx="3.3" ry="5.3" fill="#4d6436" opacity="0.64"/><ellipse cx="46.4" cy="13.1" rx="2.5" ry="5.5" fill="#2b3a22" opacity="0.67"/><ellipse cx="4.5" cy="6.8" rx="4.9" ry="5.0" fill="#2b3a22" opacity="0.40"/><ellipse cx="12.2" cy="48.6" rx="5.0" ry="5.4" fill="#5d7a3e" opacity="0.42"/><ellipse cx="57.3" cy="41.1" rx="6.7" ry="2.1" fill="#4d6436" opacity="0.64"/><ellipse cx="69.4" cy="32.8" rx="4.6" ry="3.6" fill="#5d7a3e" opacity="0.77"/><ellipse cx="77.7" cy="18.6" rx="6.2" ry="4.9" fill="#4d6436" opacity="0.73"/><ellipse cx="56.4" cy="54.2" rx="6.1" ry="5.4" fill="#6f8a4a" opacity="0.37"/><ellipse cx="51.7" cy="52.7" rx="3.2" ry="3.7" fill="#6f8a4a" opacity="0.63"/><ellipse cx="36.4" cy="29.2" rx="3.6" ry="2.8" fill="#1f2a18" opacity="0.65"/><ellipse cx="22.5" cy="23.1" rx="5.9" ry="5.7" fill="#2b3a22" opacity="0.63"/><ellipse cx="80.9" cy="48.6" rx="2.2" ry="4.6" fill="#1f2a18" opacity="0.47"/><ellipse cx="67.8" cy="15.0" rx="6.0" ry="2.1" fill="#5d7a3e" opacity="0.40"/><ellipse cx="12.2" cy="0.8" rx="6.8" ry="3.2" fill="#4d6436" opacity="0.49"/><ellipse cx="64.8" cy="6.6" rx="6.8" ry="5.7" fill="#5d7a3e" opacity="0.76"/><ellipse cx="8.4" cy="32.5" rx="4.2" ry="4.0" fill="#4d6436" opacity="0.75"/><ellipse cx="91.6" cy="31.8" rx="3.2" ry="2.4" fill="#6f8a4a" opacity="0.60"/><ellipse cx="84.0" cy="33.5" rx="3.1" ry="3.5" fill="#5d7a3e" opacity="0.60"/><ellipse cx="36.7" cy="49.0" rx="5.1" ry="3.9" fill="#6f8a4a" opacity="0.49"/><ellipse cx="24.2" cy="12.2" rx="4.7" ry="5.9" fill="#5d7a3e" opacity="0.53"/><ellipse cx="92.4" cy="8.9" rx="3.6" ry="3.3" fill="#4d6436" opacity="0.47"/><ellipse cx="87.8" cy="11.9" rx="5.9" ry="2.6" fill="#1f2a18" opacity="0.38"/><ellipse cx="87.1" cy="24.2" rx="4.6" ry="5.3" fill="#1f2a18" opacity="0.51"/><ellipse cx="76.3" cy="28.7" rx="5.7" ry="2.6" fill="#384a2a" opacity="0.50"/><ellipse cx="35.2" cy="37.1" rx="5.1" ry="3.1" fill="#5d7a3e" opacity="0.73"/><ellipse cx="9.5" cy="47.1" rx="3.3" ry="4.5" fill="#2b3a22" opacity="0.63"/><ellipse cx="70.4" cy="22.7" rx="2.0" ry="5.1" fill="#1f2a18" opacity="0.61"/><ellipse cx="49.8" cy="53.0" rx="2.7" ry="5.4" fill="#5d7a3e" opacity="0.48"/><ellipse cx="62.1" cy="6.1" rx="5.5" ry="3.2" fill="#2b3a22" opacity="0.51"/><ellipse cx="35.3" cy="28.9" rx="3.9" ry="3.3" fill="#5d7a3e" opacity="0.70"/><ellipse cx="85.0" cy="27.5" rx="3.5" ry="4.1" fill="#2b3a22" opacity="0.71"/><ellipse cx="43.6" cy="20.7" rx="2.4" ry="5.7" fill="#4d6436" opacity="0.50"/><ellipse cx="84.3" cy="46.1" rx="3.0" ry="3.7" fill="#6f8a4a" opacity="0.76"/><ellipse cx="1.1" cy="2.6" rx="6.5" ry="3.2" fill="#5d7a3e" opacity="0.59"/><ellipse cx="31.2" cy="34.1" rx="4.6" ry="4.1" fill="#2b3a22" opacity="0.66"/><ellipse cx="39.0" cy="19.7" rx="5.4" ry="3.8" fill="#5d7a3e" opacity="0.35"/><ellipse cx="6.8" cy="12.6" rx="3.9" ry="3.6" fill="#2b3a22" opacity="0.60"/><ellipse cx="57.4" cy="48.4" rx="4.4" ry="3.8" fill="#2b3a22" opacity="0.63"/><ellipse cx="99.6" cy="18.9" rx="5.7" ry="2.4" fill="#5d7a3e" opacity="0.51"/><ellipse cx="36.7" cy="4.1" rx="4.6" ry="2.4" fill="#6f8a4a" opacity="0.75"/><ellipse cx="69.0" cy="45.1" rx="6.4" ry="3.7" fill="#5d7a3e" opacity="0.42"/><ellipse cx="29.0" cy="28.1" rx="6.5" ry="3.6" fill="#5d7a3e" opacity="0.38"/><ellipse cx="56.5" cy="5.9" rx="7.0" ry="4.5" fill="#5d7a3e" opacity="0.37"/><ellipse cx="41.1" cy="43.3" rx="5.6" ry="4.2" fill="#6f8a4a" opacity="0.76"/><ellipse cx="39.8" cy="5.4" rx="5.3" ry="2.8" fill="#1f2a18" opacity="0.57"/><ellipse cx="55.3" cy="14.6" rx="6.5" ry="4.1" fill="#384a2a" opacity="0.41"/><ellipse cx="19.9" cy="33.1" rx="2.8" ry="5.0" fill="#4d6436" opacity="0.40"/><ellipse cx="10.0" cy="9.4" rx="4.5" ry="3.9" fill="#5d7a3e" opacity="0.54"/><ellipse cx="80.0" cy="35.8" rx="5.9" ry="3.3" fill="#384a2a" opacity="0.67"/><ellipse cx="35.4" cy="9.3" rx="5.1" ry="5.4" fill="#6f8a4a" opacity="0.78"/><ellipse cx="6.3" cy="10.5" rx="3.9" ry="2.2" fill="#5d7a3e" opacity="0.75"/><ellipse cx="58.3" cy="52.8" rx="2.3" ry="3.0" fill="#2b3a22" opacity="0.45"/><ellipse cx="15.9" cy="32.3" rx="3.6" ry="5.6" fill="#4d6436" opacity="0.72"/><ellipse cx="30.4" cy="33.1" rx="6.9" ry="2.3" fill="#2b3a22" opacity="0.65"/><ellipse cx="67.5" cy="32.2" rx="3.5" ry="5.5" fill="#2b3a22" opacity="0.57"/><ellipse cx="79.3" cy="13.4" rx="2.8" ry="3.5" fill="#4d6436" opacity="0.35"/><ellipse cx="88.2" cy="21.8" rx="2.6" ry="4.1" fill="#6f8a4a" opacity="0.52"/><ellipse cx="40.3" cy="3.6" rx="4.1" ry="5.7" fill="#1f2a18" opacity="0.60"/><ellipse cx="38.7" cy="25.7" rx="3.2" ry="2.1" fill="#6f8a4a" opacity="0.65"/><ellipse cx="34.1" cy="8.6" rx="2.6" ry="2.8" fill="#384a2a" opacity="0.60"/><ellipse cx="78.7" cy="30.5" rx="6.2" ry="5.2" fill="#2b3a22" opacity="0.42"/><ellipse cx="35.3" cy="39.7" rx="5.1" ry="4.3" fill="#2b3a22" opacity="0.48"/><ellipse cx="47.6" cy="11.2" rx="5.4" ry="5.8" fill="#2b3a22" opacity="0.80"/><ellipse cx="59.6" cy="24.2" rx="4.7" ry="3.6" fill="#6f8a4a" opacity="0.58"/><ellipse cx="12.6" cy="41.3" rx="4.6" ry="4.2" fill="#384a2a" opacity="0.47"/><ellipse cx="77.2" cy="21.2" rx="5.6" ry="2.6" fill="#384a2a" opacity="0.36"/><ellipse cx="71.1" cy="38.2" rx="3.6" ry="4.7" fill="#4d6436" opacity="0.40"/><ellipse cx="56.2" cy="19.9" rx="5.8" ry="2.8" fill="#5d7a3e" opacity="0.67"/><ellipse cx="8.8" cy="15.9" rx="4.0" ry="3.4" fill="#384a2a" opacity="0.73"/><ellipse cx="46.4" cy="34.5" rx="6.3" ry="2.5" fill="#384a2a" opacity="0.47"/><ellipse cx="3.0" cy="37.4" rx="5.5" ry="5.6" fill="#384a2a" opacity="0.36"/><ellipse cx="70.4" cy="25.4" rx="3.8" ry="4.5" fill="#2b3a22" opacity="0.43"/><ellipse cx="11.5" cy="50.2" rx="3.1" ry="4.7" fill="#384a2a" opacity="0.53"/><ellipse cx="60.9" cy="23.7" rx="2.8" ry="5.0" fill="#6f8a4a" opacity="0.60"/><ellipse cx="62.9" cy="51.8" rx="6.2" ry="4.3" fill="#5d7a3e" opacity="0.67"/><ellipse cx="25.5" cy="23.9" rx="4.9" ry="5.7" fill="#384a2a" opacity="0.40"/><ellipse cx="76.4" cy="36.0" rx="6.4" ry="4.3" fill="#1f2a18" opacity="0.66"/><ellipse cx="97.4" cy="37.5" rx="6.0" ry="2.8" fill="#1f2a18" opacity="0.76"/><ellipse cx="75.0" cy="4.7" rx="5.7" ry="6.0" fill="#384a2a" opacity="0.63"/><ellipse cx="22.1" cy="29.0" rx="6.7" ry="3.7" fill="#6f8a4a" opacity="0.77"/><ellipse cx="69.2" cy="40.6" rx="5.1" ry="4.0" fill="#384a2a" opacity="0.65"/><ellipse cx="20.6" cy="37.0" rx="4.4" ry="2.8" fill="#4d6436" opacity="0.78"/><ellipse cx="82.5" cy="30.8" rx="4.7" ry="5.9" fill="#4d6436" opacity="0.64"/><ellipse cx="54.4" cy="13.7" rx="2.8" ry="3.4" fill="#1f2a18" opacity="0.39"/><ellipse cx="63.7" cy="7.5" rx="5.5" ry="4.7" fill="#384a2a" opacity="0.46"/><ellipse cx="24.2" cy="28.3" rx="2.7" ry="4.6" fill="#2b3a22" opacity="0.66"/><ellipse cx="13.3" cy="38.9" rx="4.8" ry="3.3" fill="#5d7a3e" opacity="0.72"/><ellipse cx="54.8" cy="41.8" rx="5.4" ry="2.6" fill="#4d6436" opacity="0.79"/><rect x="0" y="30" width="14" height="12" fill="#8aa055" opacity="0.6"/><rect x="0" y="46" width="40" height="7" fill="#4e7030"/><rect x="0" y="52" width="100" height="10" fill="#243a1c"/><rect x="0" y="61" width="100" height="39" fill="#5f7e38"/><ellipse cx="83.9" cy="76.8" rx="2.5" ry="1.6" fill="#7a9a50" opacity="0.51"/><ellipse cx="20.6" cy="63.4" rx="3.2" ry="1.2" fill="#4a6a2a" opacity="0.49"/><ellipse cx="96.3" cy="67.3" rx="3.9" ry="1.7" fill="#6c8c40" opacity="0.43"/><ellipse cx="7.2" cy="61.4" rx="2.3" ry="2.4" fill="#6c8c40" opacity="0.79"/><ellipse cx="56.4" cy="65.2" rx="5.8" ry="2.0" fill="#6c8c40" opacity="0.70"/><ellipse cx="32.2" cy="75.0" rx="4.6" ry="2.3" fill="#587a32" opacity="0.77"/><ellipse cx="65.3" cy="70.8" rx="2.3" ry="2.5" fill="#7a9a50" opacity="0.36"/><ellipse cx="39.5" cy="66.7" rx="2.7" ry="2.3" fill="#4a6a2a" opacity="0.73"/><ellipse cx="92.7" cy="67.6" rx="5.0" ry="1.7" fill="#4a6a2a" opacity="0.43"/><ellipse cx="82.5" cy="73.5" rx="2.5" ry="2.8" fill="#4a6a2a" opacity="0.73"/><ellipse cx="25.4" cy="63.3" rx="4.3" ry="2.3" fill="#587a32" opacity="0.72"/><ellipse cx="70.6" cy="96.3" rx="4.0" ry="2.0" fill="#7a9a50" opacity="0.42"/><ellipse cx="30.0" cy="83.7" rx="2.6" ry="1.5" fill="#587a32" opacity="0.41"/><ellipse cx="63.7" cy="76.7" rx="5.4" ry="2.0" fill="#587a32" opacity="0.45"/><ellipse cx="37.2" cy="62.2" rx="2.6" ry="1.1" fill="#6c8c40" opacity="0.37"/><ellipse cx="71.1" cy="95.7" rx="3.8" ry="2.3" fill="#587a32" opacity="0.72"/><ellipse cx="90.4" cy="67.4" rx="2.0" ry="2.6" fill="#4a6a2a" opacity="0.65"/><ellipse cx="56.8" cy="79.3" rx="4.1" ry="1.9" fill="#4a6a2a" opacity="0.59"/><ellipse cx="62.6" cy="67.0" rx="5.8" ry="2.2" fill="#6c8c40" opacity="0.72"/><ellipse cx="6.0" cy="87.4" rx="4.3" ry="1.8" fill="#4a6a2a" opacity="0.52"/><ellipse cx="65.6" cy="66.3" rx="4.1" ry="2.3" fill="#4a6a2a" opacity="0.73"/><ellipse cx="22.2" cy="89.8" rx="2.6" ry="2.2" fill="#587a32" opacity="0.60"/><ellipse cx="94.3" cy="75.0" rx="4.3" ry="1.8" fill="#7a9a50" opacity="0.40"/><ellipse cx="18.1" cy="95.7" rx="2.9" ry="2.7" fill="#587a32" opacity="0.64"/><ellipse cx="18.8" cy="87.1" rx="2.9" ry="1.9" fill="#6c8c40" opacity="0.59"/><ellipse cx="69.7" cy="89.7" rx="5.4" ry="2.4" fill="#587a32" opacity="0.71"/><ellipse cx="13.4" cy="80.6" rx="4.5" ry="2.9" fill="#587a32" opacity="0.58"/><ellipse cx="46.0" cy="87.8" rx="5.9" ry="1.4" fill="#7a9a50" opacity="0.56"/><ellipse cx="9.3" cy="75.6" rx="3.6" ry="1.1" fill="#587a32" opacity="0.37"/><ellipse cx="70.2" cy="98.3" rx="3.2" ry="2.4" fill="#6c8c40" opacity="0.54"/><ellipse cx="88.9" cy="85.2" rx="4.3" ry="2.8" fill="#7a9a50" opacity="0.74"/><ellipse cx="16.8" cy="90.1" rx="5.2" ry="2.5" fill="#4a6a2a" opacity="0.36"/><ellipse cx="25.6" cy="70.3" rx="4.9" ry="1.1" fill="#4a6a2a" opacity="0.62"/><ellipse cx="10.0" cy="82.4" rx="2.1" ry="2.8" fill="#587a32" opacity="0.46"/><ellipse cx="35.4" cy="88.1" rx="5.4" ry="2.2" fill="#587a32" opacity="0.40"/><ellipse cx="2.1" cy="65.3" rx="2.7" ry="2.1" fill="#4a6a2a" opacity="0.48"/><ellipse cx="68.7" cy="75.9" rx="4.4" ry="1.5" fill="#7a9a50" opacity="0.80"/><ellipse cx="76.1" cy="71.5" rx="2.1" ry="1.7" fill="#6c8c40" opacity="0.42"/><ellipse cx="50.2" cy="95.0" rx="2.3" ry="2.2" fill="#587a32" opacity="0.64"/><ellipse cx="60.0" cy="93.9" rx="4.8" ry="1.9" fill="#7a9a50" opacity="0.45"/><ellipse cx="55" cy="18" rx="4.5" ry="3.5" fill="#201a16"/><ellipse cx="55" cy="23" rx="4" ry="5" fill="#c99576"/><path d="M43 30 L66 27 L68 60 L47 62 L41 48 Z" fill="#eef0f0"/><path d="M53 60 L61 60 L60 92 L55 92 Z" fill="#7b6e5e"/><ellipse cx="67" cy="24" rx="5" ry="8" fill="#c7a06a"/><ellipse cx="67.5" cy="25" rx="3.3" ry="5" fill="#dcae92"/><path d="M62 32 L78 31 L80 55 L84 93 L68 95 L64 60 Z" fill="#d6a9a6"/><ellipse cx="29.5" cy="52" rx="4" ry="5" fill="#a9825c"/><ellipse cx="29.5" cy="54" rx="3" ry="3.5" fill="#d8ac90"/><path d="M21 58 L37 58 L40 85 L20 86 Z" fill="#d9b0b2"/><rect x="25" y="85" width="8" height="11" fill="#c99a84"/><ellipse cx="46" cy="43" rx="4" ry="5" fill="#2a201c"/><ellipse cx="46" cy="45" rx="3" ry="3.5" fill="#d2a184"/><path d="M38 50 L55 49 L58 82 L36 83 Z" fill="#d4a7a6"/><rect x="42" y="82" width="10" height="13" fill="#b98a70"/><ellipse cx="64" cy="57" rx="4" ry="4.5" fill="#9c7656"/><ellipse cx="64" cy="59" rx="3" ry="3.5" fill="#e0b49a"/><path d="M57 62 L74 62 L73 82 L59 82 Z" fill="#eff0f2"/><path d="M60 80 L69 80 L67 97 L61 97 Z" fill="#bdb096"/></g></symbol>
<symbol id="pk1" viewBox="0 0 100 100" preserveAspectRatio="none"><g filter="url(#bl)"><rect width="100" height="100" fill="#34432a"/><ellipse cx="95.8" cy="31.0" rx="4.6" ry="4.1" fill="#6f8a4a" opacity="0.75"/><ellipse cx="58.9" cy="2.6" rx="7.1" ry="6.6" fill="#4d6436" opacity="0.50"/><ellipse cx="46.8" cy="56.2" rx="3.0" ry="5.9" fill="#6f8a4a" opacity="0.50"/><ellipse cx="2.1" cy="27.6" rx="3.2" ry="3.7" fill="#5d7a3e" opacity="0.65"/><ellipse cx="27.3" cy="16.4" rx="8.0" ry="4.8" fill="#5d7a3e" opacity="0.61"/><ellipse cx="58.4" cy="8.3" rx="3.2" ry="5.8" fill="#384a2a" opacity="0.70"/><ellipse cx="87.2" cy="46.5" rx="5.9" ry="3.5" fill="#384a2a" opacity="0.71"/><ellipse cx="79.3" cy="14.3" rx="6.4" ry="4.5" fill="#4d6436" opacity="0.69"/><ellipse cx="74.0" cy="30.5" rx="4.2" ry="7.4" fill="#384a2a" opacity="0.67"/><ellipse cx="33.4" cy="42.3" rx="4.6" ry="7.9" fill="#384a2a" opacity="0.57"/><ellipse cx="36.7" cy="14.6" rx="8.0" ry="3.8" fill="#4d6436" opacity="0.44"/><ellipse cx="88.9" cy="40.3" rx="5.2" ry="5.8" fill="#2b3a22" opacity="0.49"/><ellipse cx="16.9" cy="4.0" rx="6.6" ry="4.3" fill="#6f8a4a" opacity="0.61"/><ellipse cx="65.9" cy="57.9" rx="7.6" ry="5.9" fill="#1f2a18" opacity="0.39"/><ellipse cx="17.9" cy="34.8" rx="4.8" ry="6.9" fill="#2b3a22" opacity="0.54"/><ellipse cx="86.8" cy="4.1" rx="4.6" ry="3.9" fill="#2b3a22" opacity="0.75"/><ellipse cx="54.6" cy="45.5" rx="4.3" ry="6.5" fill="#384a2a" opacity="0.45"/><ellipse cx="40.0" cy="12.0" rx="4.4" ry="5.5" fill="#5d7a3e" opacity="0.39"/><ellipse cx="24.2" cy="3.4" rx="6.0" ry="3.4" fill="#4d6436" opacity="0.71"/><ellipse cx="87.6" cy="20.5" rx="3.0" ry="4.4" fill="#4d6436" opacity="0.64"/><ellipse cx="1.5" cy="19.4" rx="4.1" ry="4.6" fill="#1f2a18" opacity="0.69"/><ellipse cx="64.9" cy="24.3" rx="7.0" ry="3.9" fill="#384a2a" opacity="0.74"/><ellipse cx="79.6" cy="5.2" rx="4.7" ry="5.5" fill="#5d7a3e" opacity="0.62"/><ellipse cx="25.7" cy="27.8" rx="3.1" ry="4.6" fill="#1f2a18" opacity="0.64"/><ellipse cx="31.3" cy="24.9" rx="6.6" ry="4.6" fill="#384a2a" opacity="0.39"/><rect x="0" y="60" width="100" height="40" fill="#5c7a3a"/><ellipse cx="52" cy="18" rx="9" ry="11" fill="#2a1f1c"/><ellipse cx="52" cy="23" rx="7" ry="9" fill="#d4a98e"/><path d="M38 34 L65 34 L70 100 L40 100 Z" fill="#cfa1a6"/><ellipse cx="72" cy="42" rx="8" ry="10" fill="#c0966c"/><ellipse cx="72" cy="46" rx="6" ry="7" fill="#e0b49a"/><path d="M58 54 L92 54 L94 100 L58 100 Z" fill="#d5abb0"/><ellipse cx="28" cy="47" rx="8" ry="10" fill="#c29c72"/><ellipse cx="28" cy="51" rx="6" ry="7" fill="#e4bca2"/><path d="M10 60 L46 60 L46 100 L10 100 Z" fill="#eceef0"/></g></symbol>
<symbol id="pk2" viewBox="0 0 100 100" preserveAspectRatio="none"><g filter="url(#bl)"><rect width="100" height="100" fill="#2f3b27"/><ellipse cx="15.6" cy="14.3" rx="4.8" ry="4.8" fill="#1f2a18" opacity="0.50"/><ellipse cx="68.0" cy="86.6" rx="6.3" ry="6.0" fill="#4d6436" opacity="0.50"/><ellipse cx="74.1" cy="25.8" rx="5.4" ry="3.2" fill="#384a2a" opacity="0.64"/><ellipse cx="65.2" cy="54.9" rx="5.3" ry="4.4" fill="#384a2a" opacity="0.59"/><ellipse cx="94.1" cy="13.2" rx="5.8" ry="3.5" fill="#1f2a18" opacity="0.71"/><ellipse cx="97.7" cy="15.1" rx="4.1" ry="6.8" fill="#384a2a" opacity="0.39"/><ellipse cx="2.8" cy="13.4" rx="5.7" ry="4.0" fill="#1f2a18" opacity="0.70"/><ellipse cx="25.9" cy="60.6" rx="3.7" ry="3.9" fill="#384a2a" opacity="0.68"/><ellipse cx="92.1" cy="16.2" rx="4.8" ry="6.5" fill="#1f2a18" opacity="0.55"/><ellipse cx="86.0" cy="21.3" rx="7.5" ry="4.9" fill="#6f8a4a" opacity="0.45"/><ellipse cx="79.0" cy="2.6" rx="6.7" ry="3.3" fill="#384a2a" opacity="0.64"/><ellipse cx="40.2" cy="86.4" rx="4.1" ry="4.9" fill="#1f2a18" opacity="0.76"/><ellipse cx="37.6" cy="65.7" rx="3.2" ry="3.1" fill="#4d6436" opacity="0.67"/><ellipse cx="24.2" cy="35.4" rx="6.8" ry="6.2" fill="#6f8a4a" opacity="0.48"/><ellipse cx="99.4" cy="21.7" rx="7.0" ry="5.4" fill="#5d7a3e" opacity="0.77"/><ellipse cx="76.9" cy="95.4" rx="7.1" ry="4.4" fill="#4d6436" opacity="0.50"/><ellipse cx="48.6" cy="89.1" rx="4.6" ry="6.1" fill="#4d6436" opacity="0.78"/><ellipse cx="21.2" cy="5.2" rx="7.3" ry="6.7" fill="#4d6436" opacity="0.37"/><ellipse cx="77.4" cy="43.9" rx="7.3" ry="8.0" fill="#2b3a22" opacity="0.48"/><ellipse cx="2.4" cy="11.2" rx="3.7" ry="4.5" fill="#1f2a18" opacity="0.58"/><ellipse cx="35.2" cy="75.1" rx="6.4" ry="3.5" fill="#2b3a22" opacity="0.50"/><ellipse cx="91.9" cy="71.6" rx="7.9" ry="3.2" fill="#6f8a4a" opacity="0.46"/><ellipse cx="79.2" cy="68.9" rx="3.7" ry="6.0" fill="#1f2a18" opacity="0.61"/><ellipse cx="69.8" cy="72.9" rx="8.0" ry="4.6" fill="#1f2a18" opacity="0.75"/><ellipse cx="12.0" cy="48.7" rx="5.6" ry="3.0" fill="#4d6436" opacity="0.45"/><rect x="75" y="0" width="25" height="100" fill="#4a4a36" opacity="0.7"/><ellipse cx="46" cy="28" rx="18" ry="22" fill="#2a201c"/><ellipse cx="47" cy="34" rx="12" ry="16" fill="#d6a88c"/><path d="M12 50 L60 48 L65 100 L15 100 Z" fill="#cf9fa5"/><ellipse cx="64" cy="62" rx="14" ry="16" fill="#a8835e"/><ellipse cx="64" cy="68" rx="11" ry="14" fill="#e0b49a"/><path d="M46 88 L86 85 L90 100 L44 100 Z" fill="#d8b0b6"/></g></symbol>
<symbol id="pf2" viewBox="0 0 100 100" preserveAspectRatio="none"><g filter="url(#bl)"><rect width="100" height="100" fill="#2b3a24"/><ellipse cx="54.0" cy="50.7" rx="5.5" ry="2.4" fill="#5d7a3e" opacity="0.51"/><ellipse cx="49.6" cy="73.5" rx="7.9" ry="5.4" fill="#6f8a4a" opacity="0.79"/><ellipse cx="22.4" cy="5.8" rx="3.9" ry="3.1" fill="#384a2a" opacity="0.38"/><ellipse cx="4.3" cy="40.7" rx="6.9" ry="5.8" fill="#2b3a22" opacity="0.47"/><ellipse cx="32.6" cy="3.3" rx="5.7" ry="4.2" fill="#2b3a22" opacity="0.66"/><ellipse cx="98.2" cy="69.9" rx="4.3" ry="3.7" fill="#384a2a" opacity="0.59"/><ellipse cx="38.3" cy="12.1" rx="7.4" ry="5.2" fill="#2b3a22" opacity="0.75"/><ellipse cx="63.5" cy="19.1" rx="7.6" ry="3.0" fill="#5d7a3e" opacity="0.62"/><ellipse cx="37.7" cy="19.3" rx="6.3" ry="2.3" fill="#4d6436" opacity="0.63"/><ellipse cx="3.4" cy="57.3" rx="6.5" ry="3.3" fill="#2b3a22" opacity="0.64"/><ellipse cx="54.9" cy="25.2" rx="3.0" ry="5.0" fill="#5d7a3e" opacity="0.73"/><ellipse cx="51.0" cy="47.4" rx="4.2" ry="4.5" fill="#2b3a22" opacity="0.68"/><ellipse cx="37.9" cy="57.0" rx="7.9" ry="3.1" fill="#2b3a22" opacity="0.65"/><ellipse cx="82.6" cy="5.8" rx="6.3" ry="5.7" fill="#5d7a3e" opacity="0.69"/><ellipse cx="26.2" cy="67.3" rx="4.7" ry="4.4" fill="#384a2a" opacity="0.61"/><ellipse cx="99.9" cy="5.3" rx="4.8" ry="2.8" fill="#5d7a3e" opacity="0.43"/><ellipse cx="36.6" cy="53.9" rx="7.1" ry="3.8" fill="#4d6436" opacity="0.64"/><ellipse cx="82.7" cy="71.5" rx="4.6" ry="3.4" fill="#1f2a18" opacity="0.74"/><ellipse cx="42.8" cy="32.8" rx="4.3" ry="2.4" fill="#384a2a" opacity="0.51"/><ellipse cx="80.3" cy="41.7" rx="6.3" ry="3.1" fill="#2b3a22" opacity="0.48"/><ellipse cx="44.6" cy="8.9" rx="5.4" ry="5.2" fill="#384a2a" opacity="0.69"/><ellipse cx="15.0" cy="54.4" rx="5.4" ry="4.6" fill="#6f8a4a" opacity="0.63"/><ellipse cx="52.3" cy="64.1" rx="3.1" ry="2.8" fill="#6f8a4a" opacity="0.61"/><ellipse cx="5.8" cy="14.3" rx="5.7" ry="5.7" fill="#384a2a" opacity="0.47"/><ellipse cx="26.5" cy="35.0" rx="6.2" ry="5.4" fill="#5d7a3e" opacity="0.44"/><ellipse cx="42.3" cy="63.4" rx="6.9" ry="5.7" fill="#5d7a3e" opacity="0.67"/><ellipse cx="37.6" cy="3.3" rx="7.8" ry="3.7" fill="#6f8a4a" opacity="0.62"/><ellipse cx="25.7" cy="19.1" rx="3.6" ry="4.5" fill="#5d7a3e" opacity="0.79"/><ellipse cx="85.2" cy="46.4" rx="6.3" ry="3.3" fill="#1f2a18" opacity="0.38"/><ellipse cx="75.6" cy="30.4" rx="5.1" ry="5.7" fill="#5d7a3e" opacity="0.64"/><ellipse cx="79.2" cy="8.6" rx="5.3" ry="3.8" fill="#5d7a3e" opacity="0.73"/><ellipse cx="41.5" cy="37.9" rx="5.2" ry="4.0" fill="#1f2a18" opacity="0.58"/><ellipse cx="82.5" cy="53.6" rx="4.0" ry="4.2" fill="#384a2a" opacity="0.77"/><ellipse cx="29.4" cy="26.4" rx="6.8" ry="2.5" fill="#2b3a22" opacity="0.45"/><ellipse cx="7.7" cy="65.4" rx="5.5" ry="5.4" fill="#1f2a18" opacity="0.45"/><ellipse cx="45.4" cy="65.9" rx="6.6" ry="3.9" fill="#4d6436" opacity="0.37"/><ellipse cx="69.1" cy="33.4" rx="3.7" ry="3.6" fill="#5d7a3e" opacity="0.37"/><ellipse cx="62.7" cy="25.6" rx="5.6" ry="2.0" fill="#4d6436" opacity="0.79"/><ellipse cx="27.5" cy="21.0" rx="4.9" ry="4.7" fill="#6f8a4a" opacity="0.48"/><ellipse cx="39.5" cy="70.9" rx="3.3" ry="3.2" fill="#384a2a" opacity="0.74"/><ellipse cx="80.2" cy="68.5" rx="4.5" ry="2.5" fill="#6f8a4a" opacity="0.44"/><ellipse cx="65.2" cy="74.6" rx="5.4" ry="4.3" fill="#384a2a" opacity="0.51"/><ellipse cx="80.1" cy="16.0" rx="5.8" ry="2.2" fill="#384a2a" opacity="0.49"/><ellipse cx="53.3" cy="32.7" rx="7.1" ry="2.1" fill="#5d7a3e" opacity="0.45"/><ellipse cx="43.9" cy="16.0" rx="7.0" ry="4.4" fill="#4d6436" opacity="0.55"/><ellipse cx="93.5" cy="35.6" rx="3.3" ry="3.7" fill="#4d6436" opacity="0.64"/><ellipse cx="4.9" cy="69.0" rx="7.1" ry="4.0" fill="#1f2a18" opacity="0.36"/><ellipse cx="72.1" cy="59.0" rx="5.5" ry="4.7" fill="#4d6436" opacity="0.65"/><ellipse cx="29.5" cy="16.9" rx="3.7" ry="5.7" fill="#4d6436" opacity="0.44"/><ellipse cx="10.1" cy="7.6" rx="7.8" ry="3.7" fill="#1f2a18" opacity="0.65"/><ellipse cx="25.8" cy="72.5" rx="5.1" ry="5.5" fill="#384a2a" opacity="0.77"/><ellipse cx="13.3" cy="12.8" rx="4.5" ry="2.9" fill="#2b3a22" opacity="0.61"/><ellipse cx="31.9" cy="44.8" rx="4.5" ry="3.0" fill="#4d6436" opacity="0.60"/><ellipse cx="21.5" cy="75.6" rx="7.9" ry="3.6" fill="#384a2a" opacity="0.36"/><ellipse cx="38.0" cy="51.3" rx="6.3" ry="4.8" fill="#4d6436" opacity="0.44"/><ellipse cx="14.9" cy="14.7" rx="6.4" ry="2.5" fill="#6f8a4a" opacity="0.72"/><ellipse cx="12.2" cy="73.9" rx="7.7" ry="4.1" fill="#384a2a" opacity="0.48"/><ellipse cx="34.8" cy="60.0" rx="7.4" ry="5.7" fill="#2b3a22" opacity="0.44"/><ellipse cx="28.0" cy="24.2" rx="5.7" ry="2.4" fill="#5d7a3e" opacity="0.41"/><ellipse cx="27.1" cy="71.4" rx="5.9" ry="3.2" fill="#4d6436" opacity="0.61"/><ellipse cx="10.1" cy="0.0" rx="4.8" ry="2.5" fill="#8aa858" opacity="0.37"/><ellipse cx="33.3" cy="3.6" rx="3.0" ry="2.0" fill="#8aa858" opacity="0.40"/><ellipse cx="83.2" cy="6.5" rx="2.3" ry="2.3" fill="#a8c070" opacity="0.70"/><ellipse cx="59.6" cy="3.7" rx="2.1" ry="2.4" fill="#8aa858" opacity="0.54"/><ellipse cx="69.7" cy="3.3" rx="2.2" ry="2.6" fill="#a8c070" opacity="0.68"/><ellipse cx="35.9" cy="5.3" rx="3.0" ry="2.8" fill="#8aa858" opacity="0.74"/><ellipse cx="48.0" cy="1.2" rx="2.3" ry="1.9" fill="#8aa858" opacity="0.42"/><ellipse cx="27.0" cy="4.3" rx="3.4" ry="1.7" fill="#a8c070" opacity="0.59"/><ellipse cx="50.7" cy="2.9" rx="2.9" ry="2.3" fill="#8aa858" opacity="0.79"/><ellipse cx="90.8" cy="5.8" rx="4.7" ry="1.5" fill="#8aa858" opacity="0.77"/><rect x="0" y="68" width="22" height="32" fill="#6a7a48"/><path d="M12 28 L50 22 L56 40 L53 64 L22 66 L11 56 Z" fill="#eef0f0"/><ellipse cx="33" cy="10" rx="8" ry="6" fill="#1f1a18"/><ellipse cx="33" cy="17" rx="7" ry="8" fill="#c99676"/><ellipse cx="70" cy="22" rx="12" ry="17" fill="#c6a070"/><ellipse cx="70" cy="21" rx="6.5" ry="9" fill="#dcae92"/><path d="M52 29 L88 28 L92 60 L97 100 L56 100 L55 60 Z" fill="#d5a6a4"/><ellipse cx="50" cy="42" rx="9" ry="10" fill="#251c18"/><ellipse cx="50" cy="45" rx="6" ry="7" fill="#d0a084"/><path d="M36 52 L60 50 L61 92 L40 92 Z" fill="#cfa1a3"/><ellipse cx="31" cy="61" rx="8" ry="7" fill="#a8845c"/><ellipse cx="31" cy="64" rx="6" ry="6" fill="#e0b49a"/><path d="M16 70 L43 68 L43 96 L16 96 Z" fill="#eeeff2"/><rect x="14" y="92" width="28" height="8" fill="#bdb096"/><ellipse cx="65" cy="55" rx="9" ry="10" fill="#b48a62"/><ellipse cx="65" cy="58" rx="6" ry="7" fill="#e4bca2"/><path d="M51 65 L80 65 L84 100 L51 100 Z" fill="#d9b2b4"/></g></symbol>
<symbol id="pa1" viewBox="0 0 100 100" preserveAspectRatio="none"><g filter="url(#bl)"><rect width="100" height="100" fill="#2f3d26"/><rect x="12" y="15" width="80" height="40" fill="#2a3222"/><ellipse cx="51.1" cy="45.3" rx="1.5" ry="4.4" fill="#1e2618" opacity="0.69"/><ellipse cx="24.3" cy="28.5" rx="1.1" ry="6.7" fill="#3a4a30" opacity="0.40"/><ellipse cx="57.6" cy="23.9" rx="0.9" ry="6.6" fill="#1e2618" opacity="0.70"/><ellipse cx="68.9" cy="22.0" rx="0.6" ry="5.0" fill="#1e2618" opacity="0.39"/><ellipse cx="29.2" cy="44.7" rx="1.7" ry="5.1" fill="#1e2618" opacity="0.71"/><ellipse cx="48.9" cy="49.5" rx="1.0" ry="8.6" fill="#3a4a30" opacity="0.70"/><ellipse cx="14.6" cy="45.2" rx="1.6" ry="7.1" fill="#1e2618" opacity="0.42"/><ellipse cx="39.5" cy="24.5" rx="1.9" ry="7.1" fill="#1e2618" opacity="0.67"/><ellipse cx="17.4" cy="20.1" rx="0.6" ry="6.2" fill="#707a60" opacity="0.50"/><ellipse cx="17.5" cy="39.3" rx="0.8" ry="6.8" fill="#3a4a30" opacity="0.73"/><ellipse cx="74.9" cy="23.0" rx="1.4" ry="7.8" fill="#5a6a48" opacity="0.57"/><ellipse cx="73.8" cy="35.9" rx="1.7" ry="8.6" fill="#5a6a48" opacity="0.76"/><ellipse cx="71.6" cy="46.6" rx="1.2" ry="8.0" fill="#1e2618" opacity="0.70"/><ellipse cx="81.7" cy="29.6" rx="0.6" ry="7.7" fill="#3a4a30" opacity="0.71"/><ellipse cx="72.1" cy="47.1" rx="0.8" ry="5.7" fill="#1e2618" opacity="0.46"/><ellipse cx="51.4" cy="49.1" rx="1.1" ry="7.7" fill="#3a4a30" opacity="0.71"/><ellipse cx="66.6" cy="50.1" rx="1.1" ry="3.5" fill="#707a60" opacity="0.64"/><ellipse cx="78.9" cy="30.9" rx="1.7" ry="3.0" fill="#707a60" opacity="0.57"/><ellipse cx="13.3" cy="23.5" rx="1.1" ry="6.6" fill="#707a60" opacity="0.56"/><ellipse cx="38.8" cy="26.8" rx="1.1" ry="5.8" fill="#5a6a48" opacity="0.36"/><ellipse cx="38.9" cy="51.8" rx="1.6" ry="5.7" fill="#1e2618" opacity="0.65"/><ellipse cx="76.6" cy="23.9" rx="1.1" ry="8.4" fill="#3a4a30" opacity="0.53"/><ellipse cx="38.6" cy="24.8" rx="0.8" ry="8.3" fill="#1e2618" opacity="0.62"/><ellipse cx="83.5" cy="32.6" rx="1.0" ry="8.3" fill="#707a60" opacity="0.71"/><ellipse cx="60.5" cy="47.4" rx="1.1" ry="3.1" fill="#1e2618" opacity="0.73"/><ellipse cx="20.3" cy="27.9" rx="1.6" ry="7.1" fill="#5a6a48" opacity="0.79"/><ellipse cx="70.8" cy="44.1" rx="0.7" ry="7.5" fill="#707a60" opacity="0.46"/><ellipse cx="45.3" cy="36.5" rx="1.2" ry="8.7" fill="#5a6a48" opacity="0.51"/><ellipse cx="64.9" cy="40.2" rx="1.9" ry="7.9" fill="#707a60" opacity="0.38"/><ellipse cx="64.4" cy="35.8" rx="0.6" ry="8.0" fill="#3a4a30" opacity="0.66"/><ellipse cx="56.6" cy="34.3" rx="1.6" ry="7.5" fill="#1e2618" opacity="0.37"/><ellipse cx="38.0" cy="24.4" rx="0.7" ry="6.5" fill="#5a6a48" opacity="0.61"/><ellipse cx="15.7" cy="32.6" rx="1.4" ry="4.5" fill="#5a6a48" opacity="0.70"/><ellipse cx="14.1" cy="37.5" rx="1.5" ry="7.8" fill="#707a60" opacity="0.65"/><ellipse cx="42.4" cy="50.8" rx="1.5" ry="4.7" fill="#5a6a48" opacity="0.42"/><ellipse cx="58.0" cy="46.4" rx="1.8" ry="4.2" fill="#5a6a48" opacity="0.71"/><ellipse cx="16.9" cy="29.9" rx="1.5" ry="8.4" fill="#1e2618" opacity="0.61"/><ellipse cx="89.7" cy="44.9" rx="1.9" ry="4.1" fill="#5a6a48" opacity="0.49"/><ellipse cx="87.5" cy="26.3" rx="1.9" ry="5.4" fill="#5a6a48" opacity="0.66"/><ellipse cx="40.9" cy="30.2" rx="0.9" ry="4.2" fill="#707a60" opacity="0.76"/><ellipse cx="45.0" cy="18.4" rx="4.3" ry="2.6" fill="#6f8a4a" opacity="0.42"/><ellipse cx="75.7" cy="10.3" rx="4.3" ry="2.6" fill="#8aa860" opacity="0.51"/><ellipse cx="91.7" cy="11.6" rx="4.6" ry="2.2" fill="#3a5028" opacity="0.55"/><ellipse cx="1.2" cy="11.7" rx="3.1" ry="3.9" fill="#3a5028" opacity="0.47"/><ellipse cx="24.3" cy="1.5" rx="4.3" ry="3.4" fill="#4f6a36" opacity="0.54"/><ellipse cx="80.8" cy="2.4" rx="2.5" ry="2.4" fill="#3a5028" opacity="0.68"/><ellipse cx="74.2" cy="2.6" rx="3.2" ry="3.9" fill="#8aa860" opacity="0.68"/><ellipse cx="34.2" cy="8.6" rx="3.0" ry="2.4" fill="#3a5028" opacity="0.74"/><ellipse cx="53.2" cy="11.5" rx="2.4" ry="2.7" fill="#3a5028" opacity="0.38"/><ellipse cx="41.3" cy="11.0" rx="3.7" ry="2.8" fill="#6f8a4a" opacity="0.61"/><ellipse cx="27.4" cy="18.6" rx="2.5" ry="3.3" fill="#6f8a4a" opacity="0.69"/><ellipse cx="50.1" cy="19.8" rx="4.2" ry="3.6" fill="#4f6a36" opacity="0.64"/><ellipse cx="87.9" cy="2.9" rx="3.8" ry="2.6" fill="#8aa860" opacity="0.38"/><ellipse cx="60.3" cy="18.1" rx="3.8" ry="3.8" fill="#3a5028" opacity="0.49"/><ellipse cx="36.0" cy="12.5" rx="3.1" ry="3.4" fill="#4f6a36" opacity="0.38"/><ellipse cx="83.9" cy="7.2" rx="3.4" ry="3.5" fill="#4f6a36" opacity="0.55"/><ellipse cx="50.3" cy="21.5" rx="2.1" ry="3.7" fill="#4f6a36" opacity="0.40"/><ellipse cx="22.4" cy="13.8" rx="4.9" ry="3.1" fill="#3a5028" opacity="0.45"/><ellipse cx="55.7" cy="18.1" rx="4.5" ry="3.6" fill="#3a5028" opacity="0.59"/><ellipse cx="3.0" cy="17.1" rx="4.4" ry="2.5" fill="#4f6a36" opacity="0.52"/><ellipse cx="95.5" cy="6.0" rx="3.8" ry="2.8" fill="#4f6a36" opacity="0.58"/><ellipse cx="58.9" cy="5.0" rx="4.4" ry="3.9" fill="#4f6a36" opacity="0.50"/><ellipse cx="98.6" cy="1.6" rx="3.7" ry="2.9" fill="#8aa860" opacity="0.79"/><ellipse cx="88.0" cy="13.6" rx="3.0" ry="2.4" fill="#6f8a4a" opacity="0.53"/><ellipse cx="28.3" cy="4.3" rx="3.3" ry="2.4" fill="#4f6a36" opacity="0.67"/><ellipse cx="19.7" cy="5.8" rx="4.2" ry="3.9" fill="#3a5028" opacity="0.76"/><ellipse cx="72.3" cy="15.8" rx="3.1" ry="2.8" fill="#4f6a36" opacity="0.73"/><ellipse cx="64.2" cy="16.4" rx="3.7" ry="3.3" fill="#3a5028" opacity="0.60"/><ellipse cx="31.6" cy="7.8" rx="2.1" ry="2.4" fill="#4f6a36" opacity="0.51"/><ellipse cx="89.9" cy="17.7" rx="4.3" ry="2.7" fill="#8aa860" opacity="0.74"/><ellipse cx="36.4" cy="19.5" rx="5.0" ry="3.8" fill="#8aa860" opacity="0.71"/><ellipse cx="47.6" cy="18.1" rx="4.5" ry="3.1" fill="#6f8a4a" opacity="0.46"/><ellipse cx="38.9" cy="7.8" rx="4.8" ry="2.4" fill="#4f6a36" opacity="0.48"/><ellipse cx="81.5" cy="11.4" rx="2.5" ry="3.8" fill="#8aa860" opacity="0.55"/><ellipse cx="13.8" cy="2.4" rx="2.1" ry="3.6" fill="#8aa860" opacity="0.79"/><ellipse cx="8.6" cy="17.2" rx="4.7" ry="3.1" fill="#6f8a4a" opacity="0.38"/><ellipse cx="32.3" cy="13.7" rx="3.5" ry="3.3" fill="#8aa860" opacity="0.44"/><ellipse cx="24.3" cy="19.9" rx="4.6" ry="2.2" fill="#8aa860" opacity="0.74"/><ellipse cx="94.5" cy="9.7" rx="4.3" ry="3.1" fill="#8aa860" opacity="0.67"/><ellipse cx="86.2" cy="3.7" rx="4.2" ry="2.9" fill="#6f8a4a" opacity="0.75"/><ellipse cx="60.6" cy="2.6" rx="3.8" ry="2.1" fill="#8aa860" opacity="0.46"/><ellipse cx="98.7" cy="5.0" rx="3.7" ry="3.5" fill="#8aa860" opacity="0.45"/><ellipse cx="73.8" cy="14.3" rx="2.3" ry="4.0" fill="#6f8a4a" opacity="0.71"/><ellipse cx="3.8" cy="1.1" rx="4.8" ry="3.9" fill="#6f8a4a" opacity="0.70"/><ellipse cx="4.4" cy="12.2" rx="2.8" ry="2.3" fill="#8aa860" opacity="0.36"/><ellipse cx="75.7" cy="2.3" rx="2.6" ry="3.6" fill="#4f6a36" opacity="0.42"/><ellipse cx="51.2" cy="2.3" rx="4.7" ry="2.0" fill="#8aa860" opacity="0.73"/><ellipse cx="55.6" cy="18.1" rx="4.1" ry="3.3" fill="#4f6a36" opacity="0.63"/><ellipse cx="45.7" cy="14.8" rx="2.1" ry="3.7" fill="#6f8a4a" opacity="0.72"/><ellipse cx="45.8" cy="2.7" rx="4.0" ry="4.0" fill="#6f8a4a" opacity="0.63"/><ellipse cx="8.6" cy="11.4" rx="2.3" ry="2.5" fill="#4f6a36" opacity="0.75"/><ellipse cx="98.4" cy="2.0" rx="2.9" ry="3.5" fill="#3a5028" opacity="0.42"/><ellipse cx="60.6" cy="21.5" rx="2.0" ry="2.1" fill="#6f8a4a" opacity="0.40"/><ellipse cx="69.2" cy="13.2" rx="3.4" ry="2.8" fill="#8aa860" opacity="0.62"/><ellipse cx="64.9" cy="20.2" rx="4.7" ry="3.7" fill="#4f6a36" opacity="0.67"/><ellipse cx="3.1" cy="15.0" rx="4.4" ry="2.1" fill="#8aa860" opacity="0.63"/><ellipse cx="29.3" cy="5.6" rx="2.8" ry="2.6" fill="#6f8a4a" opacity="0.51"/><ellipse cx="32.4" cy="2.1" rx="2.5" ry="3.9" fill="#8aa860" opacity="0.65"/><ellipse cx="47.3" cy="13.7" rx="2.8" ry="2.5" fill="#3a5028" opacity="0.54"/><ellipse cx="2.1" cy="5.1" rx="4.8" ry="2.7" fill="#3a5028" opacity="0.70"/><ellipse cx="9.3" cy="89.0" rx="2.6" ry="2.4" fill="#3e5a30" opacity="0.72"/><ellipse cx="3.8" cy="62.7" rx="1.2" ry="2.5" fill="#2a3a20" opacity="0.56"/><ellipse cx="2.5" cy="5.3" rx="2.6" ry="5.8" fill="#5a7a40" opacity="0.53"/><ellipse cx="11.0" cy="69.0" rx="1.3" ry="2.8" fill="#5a7a40" opacity="0.48"/><ellipse cx="10.9" cy="1.4" rx="2.3" ry="2.5" fill="#2a3a20" opacity="0.78"/><ellipse cx="7.3" cy="61.4" rx="3.1" ry="5.0" fill="#3e5a30" opacity="0.69"/><ellipse cx="3.0" cy="25.7" rx="1.3" ry="5.5" fill="#3e5a30" opacity="0.64"/><ellipse cx="7.4" cy="65.6" rx="2.8" ry="4.6" fill="#5a7a40" opacity="0.62"/><ellipse cx="8.3" cy="30.4" rx="3.2" ry="4.1" fill="#3e5a30" opacity="0.38"/><ellipse cx="0.9" cy="55.7" rx="2.5" ry="5.9" fill="#5a7a40" opacity="0.66"/><ellipse cx="3.3" cy="76.9" rx="3.7" ry="3.0" fill="#3e5a30" opacity="0.53"/><ellipse cx="8.4" cy="17.3" rx="3.6" ry="5.4" fill="#5a7a40" opacity="0.56"/><ellipse cx="3.9" cy="20.6" rx="3.5" ry="2.9" fill="#2a3a20" opacity="0.73"/><ellipse cx="9.6" cy="67.1" rx="2.9" ry="5.4" fill="#2a3a20" opacity="0.38"/><ellipse cx="1.1" cy="78.2" rx="2.8" ry="4.6" fill="#5a7a40" opacity="0.43"/><ellipse cx="1.7" cy="9.7" rx="2.1" ry="4.6" fill="#3e5a30" opacity="0.61"/><ellipse cx="2.7" cy="6.5" rx="1.8" ry="5.7" fill="#3e5a30" opacity="0.77"/><ellipse cx="4.3" cy="54.2" rx="1.4" ry="5.2" fill="#3e5a30" opacity="0.46"/><ellipse cx="4.4" cy="52.3" rx="3.6" ry="5.6" fill="#3e5a30" opacity="0.42"/><ellipse cx="9.1" cy="93.2" rx="1.7" ry="2.8" fill="#3e5a30" opacity="0.45"/><ellipse cx="4.6" cy="36.5" rx="3.7" ry="3.1" fill="#5a7a40" opacity="0.35"/><ellipse cx="1.2" cy="37.7" rx="1.7" ry="2.1" fill="#2a3a20" opacity="0.55"/><ellipse cx="1.4" cy="46.0" rx="2.5" ry="3.6" fill="#5a7a40" opacity="0.57"/><ellipse cx="11.1" cy="91.0" rx="2.3" ry="2.5" fill="#2a3a20" opacity="0.38"/><ellipse cx="4.3" cy="46.9" rx="2.7" ry="2.3" fill="#2a3a20" opacity="0.45"/><ellipse cx="8.9" cy="56.3" rx="1.3" ry="5.8" fill="#2a3a20" opacity="0.59"/><ellipse cx="2.9" cy="17.1" rx="1.6" ry="2.3" fill="#2a3a20" opacity="0.47"/><ellipse cx="11.1" cy="46.1" rx="1.4" ry="5.2" fill="#5a7a40" opacity="0.63"/><ellipse cx="1.2" cy="28.1" rx="1.2" ry="4.8" fill="#2a3a20" opacity="0.56"/><ellipse cx="3.1" cy="51.0" rx="3.0" ry="4.1" fill="#5a7a40" opacity="0.36"/><ellipse cx="5.6" cy="74.0" rx="2.9" ry="5.1" fill="#5a7a40" opacity="0.65"/><ellipse cx="1.7" cy="36.4" rx="3.4" ry="5.8" fill="#2a3a20" opacity="0.68"/><ellipse cx="10.3" cy="36.8" rx="1.5" ry="2.9" fill="#5a7a40" opacity="0.62"/><ellipse cx="10.8" cy="8.2" rx="3.6" ry="3.1" fill="#3e5a30" opacity="0.79"/><ellipse cx="10.1" cy="30.4" rx="2.7" ry="5.8" fill="#2a3a20" opacity="0.53"/><ellipse cx="8.1" cy="1.3" rx="1.7" ry="3.9" fill="#2a3a20" opacity="0.58"/><ellipse cx="11.4" cy="49.2" rx="2.9" ry="2.9" fill="#3e5a30" opacity="0.73"/><ellipse cx="2.4" cy="100.0" rx="1.8" ry="5.9" fill="#2a3a20" opacity="0.69"/><ellipse cx="0.4" cy="17.8" rx="3.0" ry="2.1" fill="#2a3a20" opacity="0.52"/><ellipse cx="1.9" cy="82.8" rx="1.5" ry="5.2" fill="#3e5a30" opacity="0.62"/><rect x="88" y="20" width="12" height="80" fill="#7e786a"/><ellipse cx="93.7" cy="63.8" rx="1.3" ry="3.0" fill="#a09a8a" opacity="0.40"/><ellipse cx="99.5" cy="31.9" rx="3.0" ry="2.5" fill="#5a5448" opacity="0.49"/><ellipse cx="97.0" cy="33.4" rx="1.3" ry="4.3" fill="#a09a8a" opacity="0.55"/><ellipse cx="92.9" cy="91.1" rx="1.4" ry="2.6" fill="#4a6a38" opacity="0.69"/><ellipse cx="99.6" cy="77.0" rx="1.1" ry="5.7" fill="#5a5448" opacity="0.40"/><ellipse cx="88.2" cy="43.2" rx="2.5" ry="2.7" fill="#a09a8a" opacity="0.41"/><ellipse cx="88.9" cy="50.1" rx="2.6" ry="4.6" fill="#a09a8a" opacity="0.58"/><ellipse cx="89.4" cy="39.5" rx="2.1" ry="4.7" fill="#4a6a38" opacity="0.52"/><ellipse cx="94.3" cy="64.7" rx="1.2" ry="5.6" fill="#a09a8a" opacity="0.61"/><ellipse cx="90.2" cy="75.4" rx="2.3" ry="3.6" fill="#a09a8a" opacity="0.78"/><ellipse cx="91.1" cy="85.8" rx="2.5" ry="4.5" fill="#4a6a38" opacity="0.56"/><ellipse cx="96.1" cy="84.0" rx="1.9" ry="3.4" fill="#5a5448" opacity="0.69"/><ellipse cx="99.5" cy="91.2" rx="2.9" ry="5.1" fill="#a09a8a" opacity="0.45"/><ellipse cx="93.2" cy="96.6" rx="2.1" ry="3.6" fill="#5a5448" opacity="0.41"/><ellipse cx="97.0" cy="49.7" rx="1.7" ry="4.7" fill="#4a6a38" opacity="0.70"/><rect x="42" y="6" width="32" height="5" fill="#7a7060"/><rect x="8" y="40" width="18" height="10" fill="#8c4a56" opacity="0.9"/><rect x="10" y="48" width="80" height="8" fill="#24321e"/><rect x="10" y="55" width="80" height="45" fill="#6a8a44"/><ellipse cx="20.2" cy="65.0" rx="5.5" ry="1.2" fill="#7a9a50" opacity="0.58"/><ellipse cx="80.8" cy="82.7" rx="3.9" ry="1.9" fill="#587a32" opacity="0.50"/><ellipse cx="53.4" cy="70.5" rx="3.3" ry="2.6" fill="#6c8c40" opacity="0.66"/><ellipse cx="64.1" cy="90.1" rx="3.5" ry="2.9" fill="#6c8c40" opacity="0.70"/><ellipse cx="76.8" cy="83.9" rx="4.8" ry="2.9" fill="#7a9a50" opacity="0.44"/><ellipse cx="71.3" cy="68.5" rx="2.7" ry="1.1" fill="#4a6a2a" opacity="0.55"/><ellipse cx="63.3" cy="89.5" rx="2.8" ry="1.0" fill="#587a32" opacity="0.59"/><ellipse cx="68.0" cy="67.3" rx="5.2" ry="2.7" fill="#587a32" opacity="0.39"/><ellipse cx="29.9" cy="62.8" rx="3.1" ry="2.4" fill="#7a9a50" opacity="0.79"/><ellipse cx="11.5" cy="60.1" rx="5.9" ry="1.3" fill="#587a32" opacity="0.50"/><ellipse cx="51.8" cy="69.4" rx="5.0" ry="2.7" fill="#6c8c40" opacity="0.50"/><ellipse cx="84.2" cy="66.9" rx="2.4" ry="2.2" fill="#4a6a2a" opacity="0.66"/><ellipse cx="31.0" cy="90.6" rx="3.4" ry="2.0" fill="#4a6a2a" opacity="0.43"/><ellipse cx="84.3" cy="80.2" rx="5.0" ry="2.7" fill="#587a32" opacity="0.54"/><ellipse cx="33.6" cy="55.7" rx="5.2" ry="2.6" fill="#4a6a2a" opacity="0.39"/><ellipse cx="56.9" cy="63.6" rx="5.2" ry="2.6" fill="#6c8c40" opacity="0.45"/><ellipse cx="17.5" cy="84.9" rx="2.6" ry="1.4" fill="#6c8c40" opacity="0.61"/><ellipse cx="18.6" cy="83.5" rx="5.0" ry="2.0" fill="#7a9a50" opacity="0.58"/><ellipse cx="36.5" cy="57.6" rx="4.9" ry="1.4" fill="#7a9a50" opacity="0.48"/><ellipse cx="61.2" cy="86.1" rx="5.6" ry="1.4" fill="#7a9a50" opacity="0.49"/><ellipse cx="63.0" cy="66.7" rx="2.2" ry="1.9" fill="#7a9a50" opacity="0.50"/><ellipse cx="66.3" cy="85.7" rx="3.6" ry="2.0" fill="#4a6a2a" opacity="0.49"/><ellipse cx="72.0" cy="69.2" rx="2.2" ry="2.0" fill="#4a6a2a" opacity="0.42"/><ellipse cx="84.5" cy="94.5" rx="2.1" ry="1.6" fill="#6c8c40" opacity="0.70"/><ellipse cx="67.5" cy="94.1" rx="4.1" ry="2.6" fill="#6c8c40" opacity="0.40"/><ellipse cx="15.6" cy="72.4" rx="2.3" ry="2.6" fill="#6c8c40" opacity="0.58"/><ellipse cx="46.0" cy="93.4" rx="5.1" ry="1.7" fill="#6c8c40" opacity="0.55"/><ellipse cx="84.2" cy="97.0" rx="2.4" ry="1.9" fill="#587a32" opacity="0.64"/><ellipse cx="32.3" cy="56.7" rx="2.3" ry="2.4" fill="#7a9a50" opacity="0.37"/><ellipse cx="62.6" cy="93.4" rx="3.7" ry="1.2" fill="#4a6a2a" opacity="0.53"/><ellipse cx="48" cy="88" rx="42" ry="9" fill="#e4ddd0"/><ellipse cx="39" cy="58" rx="3.5" ry="3.5" fill="#1f1a18"/><ellipse cx="39" cy="61" rx="3" ry="3.5" fill="#c99576"/><path d="M31 65 L50 64 L51 84 L31 84 Z" fill="#eeefef"/><ellipse cx="52" cy="55" rx="3" ry="4" fill="#2a201c"/><ellipse cx="52" cy="57" rx="2.3" ry="3" fill="#d4a488"/><path d="M48 61 L58 61 L58 78 L48 78 Z" fill="#d3a6a6"/><ellipse cx="60" cy="58" rx="4" ry="6" fill="#c6a070"/><ellipse cx="60" cy="59" rx="2.5" ry="4" fill="#dcae92"/><path d="M55 64 L70 64 L80 92 L52 93 Z" fill="#d5a7a8"/><ellipse cx="41" cy="71" rx="3" ry="3.5" fill="#b58c62"/><path d="M35 75 L48 75 L50 90 L35 90 Z" fill="#d8b0b0"/><ellipse cx="58" cy="71" rx="3" ry="3.5" fill="#c09a6c"/><path d="M54 75 L64 75 L64 88 L54 88 Z" fill="#f0f0f2"/></g></symbol>
<symbol id="pk3" viewBox="0 0 100 100" preserveAspectRatio="none"><g filter="url(#bl)"><rect width="100" height="100" fill="#4a5a3a"/><ellipse cx="9.4" cy="96.4" rx="1.1" ry="9.4" fill="#6f7e5a" opacity="0.65"/><ellipse cx="53.0" cy="70.0" rx="1.5" ry="6.7" fill="#8a9a70" opacity="0.72"/><ellipse cx="16.9" cy="17.4" rx="3.1" ry="5.5" fill="#3a4a30" opacity="0.75"/><ellipse cx="45.8" cy="55.2" rx="1.8" ry="8.2" fill="#6f7e5a" opacity="0.75"/><ellipse cx="90.4" cy="47.3" rx="2.8" ry="5.0" fill="#2e3a26" opacity="0.56"/><ellipse cx="71.6" cy="73.4" rx="3.2" ry="9.4" fill="#2e3a26" opacity="0.57"/><ellipse cx="86.7" cy="51.3" rx="1.1" ry="6.6" fill="#2e3a26" opacity="0.72"/><ellipse cx="69.5" cy="97.6" rx="1.9" ry="8.1" fill="#8a9a70" opacity="0.73"/><ellipse cx="68.3" cy="66.0" rx="3.5" ry="9.0" fill="#6f7e5a" opacity="0.61"/><ellipse cx="1.0" cy="76.3" rx="3.7" ry="9.7" fill="#6f7e5a" opacity="0.50"/><ellipse cx="84.8" cy="81.9" rx="3.8" ry="5.1" fill="#8a9a70" opacity="0.63"/><ellipse cx="39.4" cy="28.4" rx="1.0" ry="7.7" fill="#2e3a26" opacity="0.69"/><ellipse cx="77.0" cy="56.7" rx="3.5" ry="7.5" fill="#2e3a26" opacity="0.37"/><ellipse cx="89.0" cy="17.1" rx="3.4" ry="4.8" fill="#2e3a26" opacity="0.65"/><ellipse cx="38.1" cy="84.0" rx="1.7" ry="8.0" fill="#2e3a26" opacity="0.65"/><ellipse cx="5.5" cy="89.6" rx="3.5" ry="9.2" fill="#2e3a26" opacity="0.41"/><ellipse cx="93.8" cy="74.4" rx="3.4" ry="8.9" fill="#6f7e5a" opacity="0.79"/><ellipse cx="94.6" cy="47.0" rx="3.3" ry="9.1" fill="#3a4a30" opacity="0.45"/><ellipse cx="34.0" cy="24.9" rx="1.4" ry="9.2" fill="#6f7e5a" opacity="0.76"/><ellipse cx="2.6" cy="37.0" rx="2.5" ry="3.4" fill="#6f7e5a" opacity="0.74"/><ellipse cx="64.0" cy="31.1" rx="3.9" ry="5.2" fill="#3a4a30" opacity="0.63"/><ellipse cx="89.5" cy="47.0" rx="3.2" ry="5.2" fill="#8a9a70" opacity="0.74"/><ellipse cx="57.3" cy="10.6" rx="2.5" ry="5.9" fill="#6f7e5a" opacity="0.75"/><ellipse cx="66.6" cy="20.8" rx="2.6" ry="9.5" fill="#8a9a70" opacity="0.65"/><ellipse cx="86.3" cy="65.5" rx="2.4" ry="7.0" fill="#6f7e5a" opacity="0.36"/><ellipse cx="13.1" cy="99.9" rx="2.6" ry="8.7" fill="#2e3a26" opacity="0.70"/><ellipse cx="35.7" cy="22.2" rx="1.7" ry="9.2" fill="#6f7e5a" opacity="0.80"/><ellipse cx="43.3" cy="38.1" rx="3.8" ry="4.4" fill="#6f7e5a" opacity="0.49"/><ellipse cx="32.9" cy="73.2" rx="2.5" ry="8.3" fill="#2e3a26" opacity="0.35"/><ellipse cx="87.1" cy="60.5" rx="4.0" ry="6.9" fill="#3a4a30" opacity="0.71"/><ellipse cx="18.3" cy="91.0" rx="3.6" ry="5.5" fill="#6f7e5a" opacity="0.77"/><ellipse cx="20.7" cy="2.3" rx="2.5" ry="9.5" fill="#2e3a26" opacity="0.60"/><ellipse cx="14.4" cy="63.1" rx="2.3" ry="7.2" fill="#6f7e5a" opacity="0.47"/><ellipse cx="27.6" cy="42.0" rx="1.2" ry="8.4" fill="#3a4a30" opacity="0.71"/><ellipse cx="90.3" cy="16.5" rx="2.6" ry="4.6" fill="#2e3a26" opacity="0.72"/><ellipse cx="23.2" cy="17.5" rx="3.9" ry="8.1" fill="#2e3a26" opacity="0.40"/><ellipse cx="46.2" cy="59.4" rx="1.8" ry="8.9" fill="#2e3a26" opacity="0.77"/><ellipse cx="5.3" cy="94.4" rx="3.6" ry="9.1" fill="#3a4a30" opacity="0.75"/><ellipse cx="55.9" cy="41.5" rx="2.4" ry="7.5" fill="#8a9a70" opacity="0.80"/><ellipse cx="33.6" cy="76.7" rx="4.0" ry="4.6" fill="#2e3a26" opacity="0.74"/><ellipse cx="60" cy="20" rx="10" ry="10" fill="#b48a5a"/><ellipse cx="60" cy="25" rx="8" ry="9" fill="#e4bca2"/><path d="M44 36 L82 36 L85 82 L46 84 Z" fill="#eff0f2"/><path d="M20 82 L82 78 L86 98 L18 98 Z" fill="#c3b59a"/></g></symbol>
<symbol id="pk4" viewBox="0 0 100 100" preserveAspectRatio="none"><g filter="url(#bl)"><rect width="100" height="100" fill="#2e3e28"/><ellipse cx="35.7" cy="43.6" rx="2.6" ry="4.1" fill="#6f8a4a" opacity="0.39"/><ellipse cx="19.3" cy="31.6" rx="3.2" ry="5.1" fill="#5d7a3e" opacity="0.73"/><ellipse cx="76.9" cy="59.2" rx="5.8" ry="5.4" fill="#2b3a22" opacity="0.44"/><ellipse cx="59.2" cy="14.5" rx="2.9" ry="4.8" fill="#4d6436" opacity="0.52"/><ellipse cx="7.0" cy="10.0" rx="3.7" ry="4.8" fill="#384a2a" opacity="0.66"/><ellipse cx="39.2" cy="15.2" rx="4.2" ry="3.2" fill="#5d7a3e" opacity="0.70"/><ellipse cx="47.7" cy="50.9" rx="5.7" ry="5.0" fill="#384a2a" opacity="0.54"/><ellipse cx="29.8" cy="55.4" rx="5.0" ry="3.0" fill="#384a2a" opacity="0.66"/><ellipse cx="62.7" cy="67.8" rx="5.2" ry="6.0" fill="#2b3a22" opacity="0.65"/><ellipse cx="34.0" cy="94.5" rx="4.2" ry="6.3" fill="#5d7a3e" opacity="0.48"/><ellipse cx="13.6" cy="90.4" rx="4.5" ry="7.0" fill="#1f2a18" opacity="0.55"/><ellipse cx="27.5" cy="52.1" rx="3.4" ry="5.7" fill="#1f2a18" opacity="0.77"/><ellipse cx="63.9" cy="47.7" rx="3.0" ry="6.0" fill="#6f8a4a" opacity="0.60"/><ellipse cx="85.7" cy="1.7" rx="2.3" ry="7.1" fill="#2b3a22" opacity="0.63"/><ellipse cx="1.2" cy="89.1" rx="5.3" ry="3.8" fill="#6f8a4a" opacity="0.66"/><ellipse cx="2.2" cy="19.3" rx="4.9" ry="3.7" fill="#1f2a18" opacity="0.49"/><ellipse cx="21.9" cy="43.7" rx="4.9" ry="6.6" fill="#1f2a18" opacity="0.76"/><ellipse cx="94.7" cy="55.1" rx="5.1" ry="3.7" fill="#1f2a18" opacity="0.73"/><ellipse cx="4.0" cy="49.7" rx="3.5" ry="3.5" fill="#384a2a" opacity="0.74"/><ellipse cx="75.4" cy="59.7" rx="2.2" ry="3.3" fill="#6f8a4a" opacity="0.41"/><ellipse cx="2.2" cy="70.8" rx="2.7" ry="5.3" fill="#384a2a" opacity="0.40"/><ellipse cx="19.7" cy="35.8" rx="3.4" ry="7.9" fill="#4d6436" opacity="0.55"/><ellipse cx="39.1" cy="25.3" rx="3.9" ry="3.1" fill="#4d6436" opacity="0.65"/><ellipse cx="90.0" cy="16.6" rx="5.2" ry="6.1" fill="#4d6436" opacity="0.64"/><ellipse cx="44.6" cy="62.2" rx="5.1" ry="5.7" fill="#1f2a18" opacity="0.75"/><ellipse cx="1.4" cy="43.9" rx="4.4" ry="4.7" fill="#1f2a18" opacity="0.53"/><ellipse cx="94.3" cy="85.9" rx="4.1" ry="5.5" fill="#5d7a3e" opacity="0.66"/><ellipse cx="15.7" cy="64.6" rx="5.2" ry="6.9" fill="#5d7a3e" opacity="0.58"/><ellipse cx="0.6" cy="79.8" rx="4.8" ry="3.9" fill="#2b3a22" opacity="0.52"/><ellipse cx="66.3" cy="33.4" rx="5.8" ry="7.6" fill="#2b3a22" opacity="0.63"/><ellipse cx="32" cy="22" rx="11" ry="13" fill="#2a1f1c"/><ellipse cx="33" cy="28" rx="8" ry="10" fill="#d6a88c"/><path d="M10 40 L55 40 L60 100 L12 100 Z" fill="#cfa1a6"/><ellipse cx="64" cy="30" rx="9" ry="11" fill="#a8835e"/><ellipse cx="65" cy="35" rx="7" ry="9" fill="#e0b49a"/><path d="M48 46 L90 46 L94 100 L48 100 Z" fill="#d8adb3"/></g></symbol>
<symbol id="pv1" viewBox="0 0 100 100" preserveAspectRatio="none"><g filter="url(#bl)"><rect width="100" height="100" fill="#3a4834"/><ellipse cx="31.6" cy="37.7" rx="6.0" ry="5.7" fill="#5a6a48" opacity="0.65"/><ellipse cx="61.5" cy="0.4" rx="4.8" ry="6.5" fill="#6a7a58" opacity="0.69"/><ellipse cx="26.2" cy="61.1" rx="4.3" ry="8.4" fill="#4a5a40" opacity="0.78"/><ellipse cx="85.8" cy="98.9" rx="5.7" ry="10.1" fill="#303c2a" opacity="0.42"/><ellipse cx="76.1" cy="57.3" rx="4.3" ry="7.4" fill="#5a6a48" opacity="0.77"/><ellipse cx="8.7" cy="77.7" rx="3.5" ry="11.0" fill="#2a3624" opacity="0.62"/><ellipse cx="43.5" cy="88.3" rx="2.3" ry="7.6" fill="#5a6a48" opacity="0.52"/><ellipse cx="3.6" cy="83.4" rx="2.9" ry="9.2" fill="#5a6a48" opacity="0.48"/><ellipse cx="37.1" cy="92.0" rx="6.0" ry="7.4" fill="#6a7a58" opacity="0.61"/><ellipse cx="80.8" cy="75.9" rx="4.6" ry="6.5" fill="#303c2a" opacity="0.66"/><ellipse cx="69.7" cy="95.8" rx="5.0" ry="5.2" fill="#2a3624" opacity="0.66"/><ellipse cx="5.4" cy="98.8" rx="4.9" ry="11.5" fill="#6a7a58" opacity="0.51"/><ellipse cx="85.1" cy="85.8" rx="5.3" ry="4.3" fill="#5a6a48" opacity="0.57"/><ellipse cx="8.7" cy="85.1" rx="2.9" ry="8.8" fill="#2a3624" opacity="0.74"/><ellipse cx="8.1" cy="29.1" rx="2.7" ry="5.1" fill="#6a7a58" opacity="0.72"/><ellipse cx="12.0" cy="18.6" rx="3.0" ry="5.3" fill="#6a7a58" opacity="0.76"/><ellipse cx="22.3" cy="85.8" rx="3.0" ry="11.3" fill="#4a5a40" opacity="0.45"/><ellipse cx="90.6" cy="61.3" rx="4.5" ry="8.3" fill="#2a3624" opacity="0.73"/><ellipse cx="44.4" cy="9.8" rx="5.2" ry="9.5" fill="#303c2a" opacity="0.69"/><ellipse cx="23.2" cy="46.3" rx="5.8" ry="11.4" fill="#6a7a58" opacity="0.42"/><ellipse cx="68.4" cy="55.4" rx="5.6" ry="11.3" fill="#303c2a" opacity="0.75"/><ellipse cx="47.0" cy="93.3" rx="3.5" ry="8.4" fill="#6a7a58" opacity="0.69"/><ellipse cx="58.9" cy="16.2" rx="3.5" ry="11.7" fill="#2a3624" opacity="0.79"/><ellipse cx="14.0" cy="58.2" rx="3.5" ry="8.4" fill="#5a6a48" opacity="0.49"/><ellipse cx="2.9" cy="20.5" rx="5.8" ry="7.6" fill="#2a3624" opacity="0.52"/><ellipse cx="77.8" cy="93.8" rx="3.9" ry="11.4" fill="#5a6a48" opacity="0.44"/><ellipse cx="95.8" cy="66.5" rx="3.4" ry="8.8" fill="#4a5a40" opacity="0.49"/><ellipse cx="96.9" cy="24.4" rx="2.3" ry="4.1" fill="#6a7a58" opacity="0.60"/><ellipse cx="20.6" cy="50.7" rx="5.0" ry="5.9" fill="#2a3624" opacity="0.40"/><ellipse cx="28.7" cy="10.1" rx="4.7" ry="9.7" fill="#4a5a40" opacity="0.35"/><ellipse cx="4.9" cy="42.7" rx="3.3" ry="8.5" fill="#5a6a48" opacity="0.35"/><ellipse cx="41.6" cy="90.3" rx="4.1" ry="5.4" fill="#6a7a58" opacity="0.61"/><ellipse cx="98.8" cy="90.6" rx="2.4" ry="11.5" fill="#4a5a40" opacity="0.47"/><ellipse cx="88.0" cy="51.6" rx="4.7" ry="7.1" fill="#5a6a48" opacity="0.80"/><ellipse cx="2.7" cy="59.7" rx="2.4" ry="10.0" fill="#303c2a" opacity="0.47"/><ellipse cx="14.8" cy="36.4" rx="5.8" ry="12.0" fill="#2a3624" opacity="0.80"/><ellipse cx="62.3" cy="65.3" rx="3.5" ry="6.9" fill="#4a5a40" opacity="0.41"/><ellipse cx="91.9" cy="37.0" rx="2.6" ry="5.3" fill="#6a7a58" opacity="0.42"/><ellipse cx="58.9" cy="80.1" rx="3.2" ry="8.5" fill="#4a5a40" opacity="0.39"/><ellipse cx="49.7" cy="46.3" rx="4.9" ry="5.9" fill="#2a3624" opacity="0.41"/><ellipse cx="92.6" cy="0.6" rx="3.0" ry="4.7" fill="#5a6a48" opacity="0.56"/><ellipse cx="38.8" cy="33.6" rx="2.9" ry="9.4" fill="#2a3624" opacity="0.73"/><ellipse cx="45.3" cy="50.3" rx="4.4" ry="5.4" fill="#2a3624" opacity="0.38"/><ellipse cx="8.2" cy="33.2" rx="3.4" ry="4.6" fill="#2a3624" opacity="0.69"/><ellipse cx="7.4" cy="77.9" rx="3.0" ry="5.2" fill="#303c2a" opacity="0.49"/><ellipse cx="32.4" cy="91.0" rx="3.7" ry="5.3" fill="#6a7a58" opacity="0.37"/><ellipse cx="12.2" cy="84.7" rx="5.3" ry="10.3" fill="#4a5a40" opacity="0.48"/><ellipse cx="4.0" cy="4.8" rx="5.0" ry="9.7" fill="#6a7a58" opacity="0.58"/><ellipse cx="16.8" cy="67.0" rx="3.0" ry="7.6" fill="#303c2a" opacity="0.46"/><ellipse cx="46.7" cy="70.2" rx="2.4" ry="7.3" fill="#303c2a" opacity="0.59"/><ellipse cx="28.8" cy="36.4" rx="3.1" ry="9.4" fill="#4a5a40" opacity="0.45"/><ellipse cx="40.1" cy="68.8" rx="2.3" ry="4.7" fill="#303c2a" opacity="0.38"/><ellipse cx="19.2" cy="26.3" rx="3.5" ry="9.4" fill="#2a3624" opacity="0.46"/><ellipse cx="9.9" cy="92.5" rx="5.2" ry="6.3" fill="#6a7a58" opacity="0.77"/><ellipse cx="81.5" cy="47.4" rx="2.3" ry="7.5" fill="#4a5a40" opacity="0.65"/><ellipse cx="2.5" cy="18.5" rx="5.2" ry="10.3" fill="#2a3624" opacity="0.38"/><ellipse cx="80.2" cy="24.0" rx="4.3" ry="9.8" fill="#4a5a40" opacity="0.51"/><ellipse cx="69.5" cy="36.7" rx="2.6" ry="7.5" fill="#5a6a48" opacity="0.43"/><ellipse cx="13.2" cy="54.4" rx="5.5" ry="9.1" fill="#303c2a" opacity="0.42"/><ellipse cx="87.2" cy="71.7" rx="5.2" ry="4.7" fill="#2a3624" opacity="0.45"/><ellipse cx="27" cy="45" rx="18" ry="24" fill="#c6a070"/><ellipse cx="30" cy="45" rx="9" ry="14" fill="#dcae92"/><path d="M4 100 L8 62 L30 55 L45 68 L48 100 Z" fill="#d5a5a0"/><path d="M38 55 L72 42 L92 55 L100 100 L44 100 Z" fill="#f0f1f2"/><ellipse cx="56" cy="27" rx="12" ry="9" fill="#1f1a18"/><ellipse cx="56" cy="36" rx="10" ry="12" fill="#c99576"/><path d="M25 68 L45 60 L65 48 L68 56 L45 76 L30 84 Z" fill="#d8aa90"/></g></symbol>
<symbol id="pv2" viewBox="0 0 100 100" preserveAspectRatio="none"><g filter="url(#bl)"><rect width="100" height="100" fill="#2c3a24"/><ellipse cx="15.3" cy="50.7" rx="5.5" ry="10.0" fill="#1f2a18" opacity="0.49"/><ellipse cx="90.9" cy="45.6" rx="3.8" ry="9.7" fill="#5d7a3e" opacity="0.70"/><ellipse cx="83.9" cy="30.9" rx="4.1" ry="6.4" fill="#6f8a4a" opacity="0.50"/><ellipse cx="37.4" cy="29.6" rx="6.0" ry="7.3" fill="#5d7a3e" opacity="0.65"/><ellipse cx="12.9" cy="1.3" rx="4.7" ry="4.3" fill="#2b3a22" opacity="0.59"/><ellipse cx="27.6" cy="44.7" rx="3.8" ry="5.6" fill="#384a2a" opacity="0.56"/><ellipse cx="70.4" cy="50.6" rx="3.5" ry="5.0" fill="#5d7a3e" opacity="0.53"/><ellipse cx="70.9" cy="47.5" rx="3.3" ry="7.8" fill="#2b3a22" opacity="0.68"/><ellipse cx="86.2" cy="41.1" rx="3.4" ry="8.3" fill="#2b3a22" opacity="0.68"/><ellipse cx="20.7" cy="13.6" rx="4.6" ry="7.7" fill="#2b3a22" opacity="0.64"/><ellipse cx="69.3" cy="15.8" rx="3.4" ry="5.9" fill="#1f2a18" opacity="0.55"/><ellipse cx="60.8" cy="51.6" rx="5.2" ry="4.6" fill="#6f8a4a" opacity="0.50"/><ellipse cx="10.9" cy="46.1" rx="2.7" ry="3.7" fill="#384a2a" opacity="0.44"/><ellipse cx="89.6" cy="2.5" rx="5.6" ry="8.9" fill="#4d6436" opacity="0.74"/><ellipse cx="43.9" cy="24.4" rx="2.6" ry="7.5" fill="#6f8a4a" opacity="0.67"/><ellipse cx="35.2" cy="3.5" rx="5.4" ry="5.3" fill="#384a2a" opacity="0.73"/><ellipse cx="89.1" cy="24.8" rx="2.6" ry="8.5" fill="#4d6436" opacity="0.58"/><ellipse cx="11.1" cy="15.8" rx="3.6" ry="7.2" fill="#5d7a3e" opacity="0.46"/><ellipse cx="2.0" cy="22.6" rx="5.1" ry="8.2" fill="#2b3a22" opacity="0.40"/><ellipse cx="32.1" cy="7.4" rx="4.5" ry="4.3" fill="#1f2a18" opacity="0.36"/><ellipse cx="67.4" cy="35.4" rx="2.4" ry="8.0" fill="#6f8a4a" opacity="0.73"/><ellipse cx="24.1" cy="27.3" rx="5.5" ry="3.8" fill="#5d7a3e" opacity="0.61"/><ellipse cx="51.6" cy="49.3" rx="4.0" ry="3.9" fill="#1f2a18" opacity="0.45"/><ellipse cx="31.1" cy="24.2" rx="2.1" ry="4.6" fill="#6f8a4a" opacity="0.50"/><ellipse cx="39.9" cy="37.9" rx="3.0" ry="7.1" fill="#2b3a22" opacity="0.52"/><ellipse cx="3.8" cy="46.2" rx="3.1" ry="8.4" fill="#6f8a4a" opacity="0.57"/><ellipse cx="98.7" cy="3.2" rx="3.8" ry="7.2" fill="#2b3a22" opacity="0.43"/><ellipse cx="59.9" cy="27.2" rx="2.6" ry="9.7" fill="#2b3a22" opacity="0.79"/><ellipse cx="75.9" cy="43.4" rx="3.2" ry="9.1" fill="#1f2a18" opacity="0.66"/><ellipse cx="6.7" cy="52.5" rx="3.5" ry="6.0" fill="#4d6436" opacity="0.58"/><ellipse cx="28.9" cy="40.7" rx="3.5" ry="8.0" fill="#5d7a3e" opacity="0.40"/><ellipse cx="52.8" cy="6.6" rx="5.4" ry="4.5" fill="#6f8a4a" opacity="0.74"/><ellipse cx="35.8" cy="19.5" rx="4.2" ry="4.9" fill="#5d7a3e" opacity="0.69"/><ellipse cx="61.8" cy="41.6" rx="3.5" ry="9.9" fill="#1f2a18" opacity="0.64"/><ellipse cx="13.8" cy="39.1" rx="3.4" ry="5.9" fill="#1f2a18" opacity="0.78"/><ellipse cx="36.1" cy="23.3" rx="6.0" ry="4.4" fill="#4d6436" opacity="0.59"/><ellipse cx="36.1" cy="15.0" rx="5.2" ry="6.2" fill="#4d6436" opacity="0.72"/><ellipse cx="37.5" cy="42.5" rx="3.5" ry="9.2" fill="#1f2a18" opacity="0.49"/><ellipse cx="40.1" cy="2.4" rx="3.9" ry="4.4" fill="#5d7a3e" opacity="0.43"/><ellipse cx="64.5" cy="40.2" rx="5.2" ry="6.5" fill="#6f8a4a" opacity="0.67"/><ellipse cx="77.0" cy="38.2" rx="3.2" ry="6.7" fill="#6f8a4a" opacity="0.67"/><ellipse cx="73.3" cy="6.5" rx="3.2" ry="7.8" fill="#6f8a4a" opacity="0.60"/><ellipse cx="61.7" cy="45.2" rx="5.3" ry="7.7" fill="#5d7a3e" opacity="0.68"/><ellipse cx="32.0" cy="7.3" rx="4.0" ry="6.8" fill="#6f8a4a" opacity="0.42"/><ellipse cx="5.9" cy="54.3" rx="4.4" ry="3.2" fill="#1f2a18" opacity="0.77"/><ellipse cx="97.2" cy="42.2" rx="5.2" ry="3.5" fill="#6f8a4a" opacity="0.76"/><ellipse cx="95.0" cy="1.4" rx="5.6" ry="6.1" fill="#5d7a3e" opacity="0.72"/><ellipse cx="68.8" cy="30.9" rx="2.8" ry="9.3" fill="#4d6436" opacity="0.50"/><ellipse cx="2.6" cy="19.5" rx="5.6" ry="3.2" fill="#1f2a18" opacity="0.67"/><ellipse cx="5.1" cy="40.7" rx="3.1" ry="9.4" fill="#384a2a" opacity="0.76"/><ellipse cx="87.0" cy="57.4" rx="4.4" ry="9.8" fill="#2b3a22" opacity="0.60"/><ellipse cx="0.6" cy="3.4" rx="2.9" ry="3.6" fill="#6f8a4a" opacity="0.77"/><ellipse cx="55.2" cy="35.5" rx="3.5" ry="6.8" fill="#4d6436" opacity="0.52"/><ellipse cx="80.6" cy="48.1" rx="3.1" ry="8.2" fill="#4d6436" opacity="0.72"/><ellipse cx="24.8" cy="40.3" rx="2.2" ry="3.7" fill="#2b3a22" opacity="0.55"/><ellipse cx="79.1" cy="26.8" rx="4.0" ry="3.2" fill="#6f8a4a" opacity="0.69"/><ellipse cx="74.5" cy="50.8" rx="3.6" ry="4.1" fill="#6f8a4a" opacity="0.57"/><ellipse cx="91.2" cy="54.1" rx="4.1" ry="4.1" fill="#4d6436" opacity="0.76"/><ellipse cx="47.2" cy="29.4" rx="4.6" ry="4.7" fill="#4d6436" opacity="0.61"/><ellipse cx="90.1" cy="15.3" rx="4.5" ry="6.4" fill="#6f8a4a" opacity="0.52"/><rect x="0" y="52" width="100" height="12" fill="#33502a"/><rect x="0" y="63" width="100" height="37" fill="#638a40"/><ellipse cx="57.9" cy="71.1" rx="4.4" ry="1.9" fill="#6c8c40" opacity="0.49"/><ellipse cx="79.3" cy="68.1" rx="4.1" ry="1.2" fill="#7a9a50" opacity="0.65"/><ellipse cx="9.6" cy="98.9" rx="4.4" ry="1.4" fill="#6c8c40" opacity="0.65"/><ellipse cx="95.3" cy="70.0" rx="2.5" ry="1.2" fill="#587a32" opacity="0.75"/><ellipse cx="31.8" cy="86.8" rx="3.2" ry="1.1" fill="#6c8c40" opacity="0.43"/><ellipse cx="57.7" cy="70.0" rx="3.8" ry="1.2" fill="#6c8c40" opacity="0.64"/><ellipse cx="48.6" cy="66.7" rx="3.3" ry="1.9" fill="#7a9a50" opacity="0.64"/><ellipse cx="10.2" cy="79.1" rx="3.9" ry="1.6" fill="#4a6a2a" opacity="0.77"/><ellipse cx="17.2" cy="75.8" rx="3.4" ry="1.1" fill="#587a32" opacity="0.64"/><ellipse cx="69.1" cy="68.7" rx="2.2" ry="1.6" fill="#587a32" opacity="0.75"/><ellipse cx="19.7" cy="70.6" rx="2.8" ry="1.1" fill="#4a6a2a" opacity="0.57"/><ellipse cx="25.0" cy="74.1" rx="2.7" ry="1.2" fill="#6c8c40" opacity="0.75"/><ellipse cx="41.4" cy="90.9" rx="2.3" ry="1.7" fill="#587a32" opacity="0.55"/><ellipse cx="49.0" cy="63.9" rx="2.6" ry="1.0" fill="#7a9a50" opacity="0.69"/><ellipse cx="41.2" cy="97.5" rx="2.7" ry="1.4" fill="#6c8c40" opacity="0.63"/><ellipse cx="80.8" cy="90.7" rx="3.8" ry="1.5" fill="#6c8c40" opacity="0.69"/><ellipse cx="27.5" cy="93.6" rx="2.6" ry="1.0" fill="#6c8c40" opacity="0.45"/><ellipse cx="95.3" cy="96.4" rx="2.2" ry="1.4" fill="#587a32" opacity="0.75"/><ellipse cx="97.8" cy="63.5" rx="3.9" ry="1.8" fill="#6c8c40" opacity="0.56"/><ellipse cx="13.1" cy="74.1" rx="2.4" ry="1.4" fill="#7a9a50" opacity="0.35"/><ellipse cx="29.6" cy="77.1" rx="3.6" ry="1.2" fill="#4a6a2a" opacity="0.38"/><ellipse cx="4.9" cy="65.9" rx="4.4" ry="1.3" fill="#587a32" opacity="0.60"/><ellipse cx="80.8" cy="67.3" rx="5.0" ry="1.3" fill="#587a32" opacity="0.70"/><ellipse cx="91.7" cy="89.1" rx="3.9" ry="1.7" fill="#6c8c40" opacity="0.75"/><ellipse cx="11.8" cy="80.2" rx="4.9" ry="1.4" fill="#6c8c40" opacity="0.55"/><ellipse cx="22.8" cy="98.8" rx="3.4" ry="1.7" fill="#4a6a2a" opacity="0.52"/><ellipse cx="51.9" cy="83.6" rx="3.8" ry="1.7" fill="#587a32" opacity="0.47"/><ellipse cx="92.4" cy="68.7" rx="4.3" ry="1.3" fill="#6c8c40" opacity="0.42"/><ellipse cx="51.9" cy="78.7" rx="4.7" ry="1.2" fill="#4a6a2a" opacity="0.60"/><ellipse cx="41.6" cy="64.3" rx="4.0" ry="1.8" fill="#6c8c40" opacity="0.76"/><ellipse cx="43" cy="38" rx="4.5" ry="6" fill="#c6a070"/><ellipse cx="44" cy="39" rx="3" ry="4" fill="#dcae92"/><path d="M34 44 L52 44 L55 95 L29 96 Z" fill="#d5aaa8"/><ellipse cx="53" cy="34" rx="4" ry="3.5" fill="#231c18"/><ellipse cx="53" cy="38" rx="3.5" ry="4.5" fill="#c99576"/><path d="M47 42 L72 42 L74 68 L50 68 Z" fill="#eef0f0"/><path d="M50 68 L70 68 L70 98 L52 98 Z" fill="#c7b99e"/></g></symbol>
<symbol id="pt1" viewBox="0 0 100 100" preserveAspectRatio="none"><g filter="url(#bl)"><rect width="100" height="100" fill="#5a6448"/><ellipse cx="44.0" cy="30.5" rx="5.7" ry="2.4" fill="#6b7456" opacity="0.49"/><ellipse cx="71.6" cy="0.8" rx="3.5" ry="5.2" fill="#7a8a5a" opacity="0.39"/><ellipse cx="2.7" cy="20.2" rx="5.3" ry="4.2" fill="#6b7456" opacity="0.62"/><ellipse cx="7.0" cy="11.6" rx="3.8" ry="4.3" fill="#7a8a5a" opacity="0.49"/><ellipse cx="96.4" cy="22.5" rx="4.2" ry="4.6" fill="#6b7456" opacity="0.49"/><ellipse cx="5.8" cy="4.5" rx="2.3" ry="4.8" fill="#7a8a5a" opacity="0.61"/><ellipse cx="72.1" cy="11.1" rx="3.2" ry="4.3" fill="#7a8a5a" opacity="0.36"/><ellipse cx="45.6" cy="13.0" rx="3.1" ry="4.6" fill="#3a4430" opacity="0.39"/><ellipse cx="80.1" cy="19.8" rx="3.5" ry="3.3" fill="#8a9270" opacity="0.72"/><ellipse cx="29.1" cy="12.3" rx="3.6" ry="5.6" fill="#8a9270" opacity="0.47"/><ellipse cx="98.1" cy="35.7" rx="5.8" ry="3.0" fill="#7a8a5a" opacity="0.72"/><ellipse cx="61.2" cy="8.2" rx="4.6" ry="5.2" fill="#3a4430" opacity="0.60"/><ellipse cx="8.0" cy="34.5" rx="3.4" ry="4.8" fill="#8a9270" opacity="0.77"/><ellipse cx="39.9" cy="7.0" rx="3.2" ry="5.2" fill="#6b7456" opacity="0.43"/><ellipse cx="64.2" cy="21.1" rx="2.2" ry="2.8" fill="#7a8a5a" opacity="0.78"/><ellipse cx="39.1" cy="17.0" rx="4.7" ry="4.2" fill="#4a5638" opacity="0.79"/><ellipse cx="28.6" cy="26.3" rx="4.1" ry="2.8" fill="#7a8a5a" opacity="0.78"/><ellipse cx="96.5" cy="31.1" rx="3.9" ry="5.4" fill="#3a4430" opacity="0.46"/><ellipse cx="74.3" cy="28.6" rx="5.3" ry="5.5" fill="#8a9270" opacity="0.47"/><ellipse cx="78.7" cy="19.0" rx="4.4" ry="5.9" fill="#4a5638" opacity="0.75"/><ellipse cx="18.4" cy="21.8" rx="2.7" ry="2.6" fill="#8a9270" opacity="0.61"/><ellipse cx="21.2" cy="13.5" rx="4.1" ry="2.6" fill="#6b7456" opacity="0.60"/><ellipse cx="97.9" cy="32.5" rx="3.2" ry="3.1" fill="#4a5638" opacity="0.53"/><ellipse cx="1.2" cy="17.4" rx="3.9" ry="3.8" fill="#7a8a5a" opacity="0.63"/><ellipse cx="78.6" cy="3.8" rx="3.6" ry="3.0" fill="#8a9270" opacity="0.62"/><ellipse cx="46.2" cy="16.8" rx="2.4" ry="3.8" fill="#3a4430" opacity="0.45"/><ellipse cx="5.8" cy="23.0" rx="5.5" ry="2.5" fill="#6b7456" opacity="0.73"/><ellipse cx="2.1" cy="28.4" rx="4.2" ry="5.3" fill="#7a8a5a" opacity="0.42"/><ellipse cx="54.0" cy="10.6" rx="2.6" ry="2.4" fill="#7a8a5a" opacity="0.79"/><ellipse cx="78.6" cy="26.5" rx="4.4" ry="5.7" fill="#4a5638" opacity="0.72"/><ellipse cx="56.7" cy="13.0" rx="3.5" ry="2.4" fill="#3a4430" opacity="0.50"/><ellipse cx="70.6" cy="37.3" rx="4.7" ry="5.7" fill="#4a5638" opacity="0.70"/><ellipse cx="44.5" cy="18.5" rx="3.3" ry="2.4" fill="#3a4430" opacity="0.63"/><ellipse cx="80.9" cy="9.9" rx="2.8" ry="2.8" fill="#8a9270" opacity="0.65"/><ellipse cx="18.8" cy="13.3" rx="3.9" ry="2.2" fill="#7a8a5a" opacity="0.73"/><ellipse cx="81.4" cy="2.3" rx="2.3" ry="3.8" fill="#7a8a5a" opacity="0.36"/><ellipse cx="48.1" cy="16.5" rx="3.7" ry="5.4" fill="#6b7456" opacity="0.70"/><ellipse cx="58.6" cy="9.5" rx="4.5" ry="3.7" fill="#4a5638" opacity="0.38"/><ellipse cx="88.2" cy="0.4" rx="4.4" ry="6.0" fill="#6b7456" opacity="0.44"/><ellipse cx="33.6" cy="0.5" rx="5.4" ry="5.4" fill="#6b7456" opacity="0.74"/><ellipse cx="49.0" cy="19.7" rx="5.3" ry="4.3" fill="#4a5638" opacity="0.61"/><ellipse cx="1.3" cy="15.3" rx="3.6" ry="5.8" fill="#4a5638" opacity="0.57"/><ellipse cx="52.7" cy="4.1" rx="3.6" ry="2.4" fill="#6b7456" opacity="0.68"/><ellipse cx="80.0" cy="23.9" rx="4.9" ry="3.9" fill="#6b7456" opacity="0.70"/><ellipse cx="84.7" cy="12.2" rx="5.5" ry="4.7" fill="#3a4430" opacity="0.47"/><ellipse cx="92.0" cy="33.0" rx="3.4" ry="3.9" fill="#8a9270" opacity="0.40"/><ellipse cx="62.9" cy="24.1" rx="3.3" ry="4.2" fill="#6b7456" opacity="0.77"/><ellipse cx="56.7" cy="36.5" rx="5.2" ry="4.6" fill="#3a4430" opacity="0.54"/><ellipse cx="88.3" cy="25.4" rx="5.9" ry="4.5" fill="#3a4430" opacity="0.57"/><ellipse cx="63.4" cy="21.3" rx="5.8" ry="2.1" fill="#4a5638" opacity="0.49"/><ellipse cx="87.6" cy="2.4" rx="2.1" ry="4.6" fill="#8a9270" opacity="0.71"/><ellipse cx="23.8" cy="15.2" rx="5.0" ry="4.9" fill="#8a9270" opacity="0.79"/><ellipse cx="77.0" cy="24.6" rx="5.8" ry="5.1" fill="#8a9270" opacity="0.78"/><ellipse cx="24.7" cy="20.6" rx="5.8" ry="2.6" fill="#7a8a5a" opacity="0.55"/><ellipse cx="84.4" cy="38.5" rx="5.7" ry="2.1" fill="#4a5638" opacity="0.47"/><ellipse cx="49.3" cy="37.5" rx="5.4" ry="2.0" fill="#8a9270" opacity="0.73"/><ellipse cx="68.2" cy="29.9" rx="3.3" ry="2.6" fill="#4a5638" opacity="0.41"/><ellipse cx="30.4" cy="28.0" rx="5.5" ry="5.4" fill="#3a4430" opacity="0.56"/><ellipse cx="75.1" cy="19.5" rx="2.9" ry="5.8" fill="#6b7456" opacity="0.71"/><ellipse cx="22.9" cy="0.0" rx="2.4" ry="5.1" fill="#4a5638" opacity="0.70"/><ellipse cx="63.4" cy="33.3" rx="5.9" ry="2.5" fill="#4a5638" opacity="0.43"/><ellipse cx="70.6" cy="15.7" rx="5.4" ry="4.3" fill="#8a9270" opacity="0.47"/><ellipse cx="25.2" cy="21.7" rx="4.5" ry="3.5" fill="#8a9270" opacity="0.42"/><ellipse cx="69.5" cy="0.8" rx="2.8" ry="3.2" fill="#6b7456" opacity="0.35"/><ellipse cx="32.3" cy="29.6" rx="5.2" ry="4.2" fill="#7a8a5a" opacity="0.55"/><ellipse cx="9.3" cy="16.1" rx="2.6" ry="2.3" fill="#8a9270" opacity="0.69"/><ellipse cx="9.1" cy="26.7" rx="2.5" ry="3.8" fill="#6b7456" opacity="0.37"/><ellipse cx="94.3" cy="25.0" rx="2.1" ry="3.4" fill="#6b7456" opacity="0.46"/><ellipse cx="78.9" cy="28.6" rx="4.1" ry="4.8" fill="#7a8a5a" opacity="0.41"/><ellipse cx="38.5" cy="11.7" rx="3.2" ry="2.5" fill="#4a5638" opacity="0.55"/><ellipse cx="44.4" cy="7.5" rx="3.2" ry="4.5" fill="#7a8a5a" opacity="0.39"/><ellipse cx="11.9" cy="2.5" rx="5.5" ry="3.0" fill="#7a8a5a" opacity="0.47"/><ellipse cx="10.3" cy="20.1" rx="4.0" ry="2.8" fill="#8a9270" opacity="0.35"/><ellipse cx="88.0" cy="33.4" rx="3.5" ry="2.5" fill="#4a5638" opacity="0.64"/><ellipse cx="74.0" cy="36.9" rx="3.2" ry="4.1" fill="#8a9270" opacity="0.48"/><ellipse cx="44.6" cy="18.7" rx="3.9" ry="5.9" fill="#3a4430" opacity="0.41"/><ellipse cx="92.1" cy="25.6" rx="3.7" ry="6.0" fill="#6b7456" opacity="0.36"/><ellipse cx="84.8" cy="32.8" rx="5.5" ry="5.5" fill="#4a5638" opacity="0.54"/><ellipse cx="2.0" cy="39.8" rx="4.8" ry="4.7" fill="#8a9270" opacity="0.39"/><ellipse cx="63.7" cy="39.7" rx="3.5" ry="3.7" fill="#4a5638" opacity="0.61"/><path d="M8 0 L12 0 L14 75 L9 75 Z" fill="#3a3028"/><path d="M62 0 L65 0 L75 60 L71 60 Z" fill="#6a5a48"/><path d="M78 0 L82 0 L76 60 L72 60 Z" fill="#6a5a48"/><rect x="0" y="37" width="100" height="36" fill="#4a5240"/><ellipse cx="89.0" cy="71.0" rx="0.7" ry="9.1" fill="#3a4232" opacity="0.45"/><ellipse cx="30.9" cy="41.1" rx="0.7" ry="13.9" fill="#3a4232" opacity="0.54"/><ellipse cx="35.1" cy="52.1" rx="0.5" ry="11.0" fill="#2a2e24" opacity="0.58"/><ellipse cx="99.0" cy="48.9" rx="0.6" ry="9.9" fill="#6a7458" opacity="0.55"/><ellipse cx="97.9" cy="57.3" rx="0.8" ry="12.5" fill="#2a2e24" opacity="0.38"/><ellipse cx="29.8" cy="39.8" rx="0.5" ry="12.2" fill="#2a2e24" opacity="0.55"/><ellipse cx="53.8" cy="56.2" rx="0.8" ry="7.4" fill="#2a2e24" opacity="0.44"/><ellipse cx="9.2" cy="42.5" rx="0.9" ry="8.4" fill="#3a4232" opacity="0.38"/><ellipse cx="55.3" cy="60.6" rx="0.5" ry="6.6" fill="#2a2e24" opacity="0.50"/><ellipse cx="86.1" cy="51.5" rx="0.6" ry="9.6" fill="#3a4232" opacity="0.45"/><ellipse cx="18.6" cy="43.5" rx="1.0" ry="13.2" fill="#6a7458" opacity="0.69"/><ellipse cx="13.4" cy="62.7" rx="0.9" ry="6.5" fill="#6a7458" opacity="0.49"/><ellipse cx="36.3" cy="46.8" rx="0.8" ry="6.8" fill="#2a2e24" opacity="0.50"/><ellipse cx="23.1" cy="67.4" rx="0.4" ry="11.5" fill="#2a2e24" opacity="0.54"/><ellipse cx="63.2" cy="50.4" rx="0.5" ry="11.6" fill="#6a7458" opacity="0.48"/><ellipse cx="72.3" cy="49.6" rx="0.7" ry="12.5" fill="#6a7458" opacity="0.79"/><ellipse cx="37.9" cy="72.5" rx="0.7" ry="12.0" fill="#2a2e24" opacity="0.62"/><ellipse cx="69.3" cy="59.7" rx="0.6" ry="7.7" fill="#3a4232" opacity="0.70"/><ellipse cx="55.0" cy="64.2" rx="1.0" ry="9.8" fill="#6a7458" opacity="0.75"/><ellipse cx="32.6" cy="65.0" rx="0.6" ry="11.3" fill="#3a4232" opacity="0.69"/><ellipse cx="63.6" cy="53.0" rx="0.8" ry="12.8" fill="#3a4232" opacity="0.48"/><ellipse cx="49.2" cy="43.6" rx="1.0" ry="9.2" fill="#2a2e24" opacity="0.36"/><ellipse cx="29.7" cy="70.0" rx="0.7" ry="7.4" fill="#2a2e24" opacity="0.68"/><ellipse cx="11.7" cy="64.0" rx="1.0" ry="8.4" fill="#2a2e24" opacity="0.69"/><ellipse cx="41.3" cy="60.1" rx="1.0" ry="8.3" fill="#6a7458" opacity="0.69"/><ellipse cx="69.6" cy="57.2" rx="0.8" ry="13.8" fill="#6a7458" opacity="0.68"/><ellipse cx="22.2" cy="45.3" rx="0.9" ry="8.1" fill="#2a2e24" opacity="0.50"/><ellipse cx="73.0" cy="60.3" rx="0.4" ry="13.2" fill="#6a7458" opacity="0.47"/><ellipse cx="21.2" cy="41.2" rx="0.6" ry="10.1" fill="#6a7458" opacity="0.54"/><ellipse cx="8.7" cy="70.3" rx="0.6" ry="10.2" fill="#6a7458" opacity="0.70"/><ellipse cx="72.4" cy="49.4" rx="0.9" ry="10.5" fill="#3a4232" opacity="0.56"/><ellipse cx="33.0" cy="41.8" rx="0.8" ry="6.8" fill="#6a7458" opacity="0.77"/><ellipse cx="88.7" cy="38.2" rx="0.7" ry="7.0" fill="#3a4232" opacity="0.66"/><ellipse cx="49.4" cy="68.0" rx="0.8" ry="7.5" fill="#6a7458" opacity="0.63"/><ellipse cx="42.5" cy="72.4" rx="0.4" ry="8.7" fill="#2a2e24" opacity="0.39"/><ellipse cx="34.9" cy="54.5" rx="0.7" ry="7.4" fill="#3a4232" opacity="0.71"/><ellipse cx="9.6" cy="59.4" rx="0.5" ry="7.7" fill="#6a7458" opacity="0.69"/><ellipse cx="47.0" cy="70.6" rx="0.9" ry="7.7" fill="#6a7458" opacity="0.70"/><ellipse cx="2.0" cy="54.7" rx="0.5" ry="10.4" fill="#6a7458" opacity="0.77"/><ellipse cx="11.7" cy="67.6" rx="0.5" ry="12.1" fill="#3a4232" opacity="0.50"/><ellipse cx="15.0" cy="43.9" rx="0.8" ry="8.5" fill="#3a4232" opacity="0.66"/><ellipse cx="41.1" cy="64.0" rx="0.6" ry="11.0" fill="#2a2e24" opacity="0.71"/><ellipse cx="46.3" cy="46.7" rx="0.6" ry="10.4" fill="#6a7458" opacity="0.36"/><ellipse cx="48.9" cy="39.9" rx="0.8" ry="9.4" fill="#6a7458" opacity="0.79"/><ellipse cx="94.7" cy="71.4" rx="0.7" ry="12.8" fill="#2a2e24" opacity="0.37"/><ellipse cx="12.6" cy="56.0" rx="0.7" ry="10.8" fill="#6a7458" opacity="0.72"/><ellipse cx="27.5" cy="38.1" rx="0.6" ry="6.3" fill="#3a4232" opacity="0.41"/><ellipse cx="99.5" cy="63.6" rx="0.5" ry="6.2" fill="#2a2e24" opacity="0.64"/><ellipse cx="67.5" cy="46.7" rx="0.6" ry="13.6" fill="#6a7458" opacity="0.35"/><ellipse cx="41.9" cy="39.1" rx="0.7" ry="10.7" fill="#2a2e24" opacity="0.73"/><rect x="0" y="62" width="12" height="24" fill="#3a5a2a"/><rect x="0" y="86" width="100" height="14" fill="#6a8a40"/><ellipse cx="87.3" cy="91.7" rx="3.5" ry="1.5" fill="#7a9a50" opacity="0.42"/><ellipse cx="51.2" cy="97.2" rx="3.5" ry="1.9" fill="#7a9a50" opacity="0.48"/><ellipse cx="8.5" cy="87.6" rx="3.7" ry="1.9" fill="#4a6a2a" opacity="0.58"/><ellipse cx="51.3" cy="99.8" rx="2.4" ry="1.1" fill="#7a9a50" opacity="0.45"/><ellipse cx="22.9" cy="86.7" rx="2.1" ry="1.9" fill="#7a9a50" opacity="0.57"/><ellipse cx="87.9" cy="95.8" rx="4.3" ry="1.3" fill="#7a9a50" opacity="0.68"/><ellipse cx="20.6" cy="93.8" rx="4.3" ry="1.2" fill="#6c8c40" opacity="0.50"/><ellipse cx="82.4" cy="97.3" rx="4.2" ry="1.4" fill="#587a32" opacity="0.40"/><ellipse cx="74.8" cy="90.7" rx="4.8" ry="1.6" fill="#7a9a50" opacity="0.65"/><ellipse cx="58.9" cy="92.9" rx="3.7" ry="1.1" fill="#6c8c40" opacity="0.54"/><ellipse cx="42.1" cy="92.1" rx="3.6" ry="1.1" fill="#4a6a2a" opacity="0.47"/><ellipse cx="29.7" cy="94.5" rx="2.1" ry="1.7" fill="#6c8c40" opacity="0.53"/><ellipse cx="44.9" cy="94.3" rx="2.1" ry="1.6" fill="#4a6a2a" opacity="0.42"/><ellipse cx="5.1" cy="95.9" rx="4.0" ry="1.9" fill="#6c8c40" opacity="0.76"/><ellipse cx="23.5" cy="95.4" rx="2.8" ry="1.7" fill="#6c8c40" opacity="0.71"/><ellipse cx="47.0" cy="91.4" rx="2.6" ry="1.8" fill="#7a9a50" opacity="0.71"/><ellipse cx="36.5" cy="90.9" rx="4.7" ry="2.0" fill="#6c8c40" opacity="0.54"/><ellipse cx="21.6" cy="96.1" rx="4.0" ry="1.5" fill="#6c8c40" opacity="0.75"/><ellipse cx="93.3" cy="94.6" rx="4.1" ry="1.0" fill="#587a32" opacity="0.53"/><ellipse cx="50.3" cy="96.1" rx="3.8" ry="1.4" fill="#587a32" opacity="0.45"/><ellipse cx="23.5" cy="30" rx="4.5" ry="6" fill="#2a201c"/><ellipse cx="23.5" cy="33" rx="3.2" ry="4" fill="#d0a084"/><path d="M17 38 L30 38 L33 60 L37 87 L12 87 L16 60 Z" fill="#d4a8a6"/><rect x="19" y="87" width="8" height="13" fill="#b08468"/><ellipse cx="34" cy="52" rx="3.8" ry="5" fill="#b89062"/><ellipse cx="34.5" cy="55" rx="3" ry="4" fill="#e4bca2"/><path d="M28 59 L42 59 L44 75 L42 88 L28 88 Z" fill="#eef0f2"/><path d="M29 88 L41 88 L40 100 L30 100 Z" fill="#a89a7c"/><ellipse cx="47" cy="53" rx="3.5" ry="6" fill="#b89068"/><path d="M42 62 L52 62 L52 94 L41 94 Z" fill="#d8b4b2"/></g></symbol>
<symbol id="ps7" viewBox="0 0 100 100" preserveAspectRatio="none"><g filter="url(#bl)"><rect width="100" height="100" fill="#2a3222"/><ellipse cx="89.3" cy="9.0" rx="5.3" ry="4.3" fill="#4a5a3a" opacity="0.67"/><ellipse cx="33.1" cy="94.5" rx="3.3" ry="7.2" fill="#3a4a30" opacity="0.40"/><ellipse cx="41.0" cy="62.3" rx="4.0" ry="8.9" fill="#4a5a3a" opacity="0.55"/><ellipse cx="32.2" cy="20.5" rx="4.1" ry="4.0" fill="#1a2016" opacity="0.79"/><ellipse cx="26.7" cy="91.2" rx="3.1" ry="8.5" fill="#4a5a3a" opacity="0.42"/><ellipse cx="26.2" cy="43.9" rx="2.7" ry="4.3" fill="#4a5a3a" opacity="0.41"/><ellipse cx="21.4" cy="33.2" rx="5.3" ry="5.1" fill="#1a2016" opacity="0.73"/><ellipse cx="98.1" cy="15.5" rx="5.6" ry="6.0" fill="#1a2016" opacity="0.76"/><ellipse cx="25.1" cy="97.8" rx="3.3" ry="4.4" fill="#4a5a3a" opacity="0.79"/><ellipse cx="82.6" cy="12.9" rx="6.0" ry="8.7" fill="#1a2016" opacity="0.58"/><ellipse cx="59.7" cy="13.7" rx="3.3" ry="7.8" fill="#4a5a3a" opacity="0.59"/><ellipse cx="0.2" cy="71.1" rx="2.7" ry="9.7" fill="#1a2016" opacity="0.39"/><ellipse cx="10.9" cy="29.7" rx="3.3" ry="4.7" fill="#1a2016" opacity="0.48"/><ellipse cx="28.0" cy="34.6" rx="5.2" ry="7.9" fill="#4a5a3a" opacity="0.75"/><ellipse cx="65.4" cy="11.4" rx="2.1" ry="7.0" fill="#3a4a30" opacity="0.74"/><ellipse cx="7.8" cy="62.9" rx="2.8" ry="6.4" fill="#1a2016" opacity="0.59"/><ellipse cx="80.7" cy="45.4" rx="3.0" ry="8.9" fill="#1a2016" opacity="0.40"/><ellipse cx="65.3" cy="35.6" rx="3.2" ry="3.7" fill="#4a5a3a" opacity="0.44"/><ellipse cx="80.6" cy="97.9" rx="4.8" ry="5.3" fill="#4a5a3a" opacity="0.47"/><ellipse cx="61.0" cy="23.4" rx="2.3" ry="5.7" fill="#3a4a30" opacity="0.61"/><ellipse cx="65.4" cy="34.0" rx="3.0" ry="4.2" fill="#1a2016" opacity="0.63"/><ellipse cx="65.7" cy="51.1" rx="4.3" ry="9.3" fill="#3a4a30" opacity="0.60"/><ellipse cx="3.1" cy="36.8" rx="3.9" ry="6.9" fill="#4a5a3a" opacity="0.68"/><ellipse cx="89.4" cy="46.8" rx="3.5" ry="3.6" fill="#3a4a30" opacity="0.64"/><ellipse cx="83.7" cy="2.6" rx="5.1" ry="3.9" fill="#3a4a30" opacity="0.48"/><ellipse cx="85.1" cy="68.9" rx="4.0" ry="4.1" fill="#3a4a30" opacity="0.75"/><ellipse cx="64.9" cy="54.3" rx="3.3" ry="3.9" fill="#1a2016" opacity="0.42"/><ellipse cx="40.2" cy="12.7" rx="2.5" ry="5.3" fill="#1a2016" opacity="0.46"/><ellipse cx="37.0" cy="78.9" rx="3.3" ry="9.5" fill="#4a5a3a" opacity="0.74"/><ellipse cx="92.1" cy="76.5" rx="4.2" ry="7.4" fill="#4a5a3a" opacity="0.74"/><ellipse cx="56.7" cy="60.9" rx="5.5" ry="5.3" fill="#3a4a30" opacity="0.53"/><ellipse cx="53.8" cy="10.1" rx="5.7" ry="6.0" fill="#4a5a3a" opacity="0.78"/><ellipse cx="26.0" cy="5.5" rx="5.0" ry="7.9" fill="#4a5a3a" opacity="0.52"/><ellipse cx="34.3" cy="15.4" rx="3.8" ry="8.7" fill="#1a2016" opacity="0.50"/><ellipse cx="32.1" cy="51.3" rx="3.3" ry="3.4" fill="#4a5a3a" opacity="0.67"/><ellipse cx="53.1" cy="68.4" rx="5.0" ry="6.9" fill="#1a2016" opacity="0.51"/><ellipse cx="27.4" cy="88.5" rx="4.5" ry="7.9" fill="#1a2016" opacity="0.65"/><ellipse cx="43.1" cy="4.0" rx="3.1" ry="9.4" fill="#4a5a3a" opacity="0.43"/><ellipse cx="91.4" cy="53.8" rx="5.7" ry="3.7" fill="#3a4a30" opacity="0.41"/><ellipse cx="67.3" cy="64.1" rx="2.0" ry="4.7" fill="#4a5a3a" opacity="0.45"/><ellipse cx="40" cy="20" rx="7" ry="10" fill="#221a16"/><ellipse cx="40" cy="26" rx="5" ry="7" fill="#c89878"/></g></symbol>
</defs></svg>

<div style="position:absolute;left:0;top:1500px;width:40px;height:50px;background:#b8c0cc"></div>
<div class="win">

<!-- TITLE BAR -->
<div class="a" style="left:0;top:0;width:2600px;height:45px;background:#efeeed;border-bottom:2px solid #cacaca"></div>
<div class="a" style="left:12.5px;top:12.5px;width:19.5px;height:19.5px;border-radius:50%;background:#fe5f57;border:1px solid #e2463f"></div>
<div class="a" style="left:19px;top:19px;width:6.5px;height:6.5px;border-radius:50%;background:#7e0508"></div>
<div class="a" style="left:44.5px;top:12.5px;width:19.5px;height:19.5px;border-radius:50%;background:#febc2e;border:1px solid #e1a116"></div>
<div class="a" style="left:76.5px;top:12.5px;width:19.5px;height:19.5px;border-radius:50%;background:#28c840;border:1px solid #14ae28"></div>
<div class="t" style="left:1196px;top:10px;font-size:22px;font-weight:bold;color:#3b3b3b">2024 Sample Album</div>

<!-- LEFT PANEL -->
<div class="a" style="left:0;top:45px;width:306px;height:1505px;background:#efefef;border-right:2px solid #b0b0b0"></div>
<div class="a" style="left:0;top:45px;width:304px;height:76px;background:#e3e3e3;border-bottom:2px solid #b8b8b8"></div>
<div class="vd" style="left:76.5px;top:51px;height:64px"></div>
<div class="vd" style="left:153px;top:51px;height:64px"></div>
<!-- smileys -->
<svg class="a" style="left:22px;top:57px" width="32" height="32" viewBox="0 0 32 32"><circle cx="16" cy="16" r="13.5" fill="none" stroke="#6a6a6a" stroke-width="2"/><circle cx="11.5" cy="12.5" r="1.6" fill="#6a6a6a"/><circle cx="20.5" cy="12.5" r="1.6" fill="#6a6a6a"/><path d="M9.5 18.5 Q16 25 22.5 18.5" fill="none" stroke="#6a6a6a" stroke-width="2"/></svg>
<svg class="a" style="left:99px;top:57px" width="32" height="32" viewBox="0 0 32 32"><circle cx="16" cy="16" r="13.5" fill="none" stroke="#2c8cf8" stroke-width="2.2"/><circle cx="11.5" cy="13" r="1.6" fill="#2c8cf8"/><circle cx="20.5" cy="13" r="1.6" fill="#2c8cf8"/><path d="M10.5 20 H21.5" fill="none" stroke="#2c8cf8" stroke-width="2"/></svg>
<svg class="a" style="left:175px;top:57px" width="32" height="32" viewBox="0 0 32 32"><circle cx="16" cy="16" r="13.5" fill="none" stroke="#6a6a6a" stroke-width="2"/><circle cx="11.5" cy="12.5" r="1.6" fill="#6a6a6a"/><circle cx="20.5" cy="12.5" r="1.6" fill="#6a6a6a"/><path d="M10 22 Q16 16.5 22 22" fill="none" stroke="#6a6a6a" stroke-width="2"/></svg>
<div class="t" style="left:32.5px;top:91.5px;font-size:19.5px;color:#111">0</div>
<div class="t" style="left:103.5px;top:91.5px;font-size:19.5px;color:#1659c4">53</div>
<div class="t" style="left:186px;top:91.5px;font-size:19.5px;color:#111">0</div>

<!-- LEFT PANEL CONTENT (thumbs) -->

<svg class="a" style="left:25.5px;top:129px" width="233" height="100"><use href="#pc1" xlink:href="#pc1" width="100%" height="100%"/></svg>
<div class="cap" style="left:10px;top:281px;font-size:17.4px;color:#6b6b6b">...©Artistic Images - E. Homan.jpg</div>
<svg class="a" style="left:25.5px;top:355px" width="233" height="155"><use href="#pc2" xlink:href="#pc2" width="100%" height="100%"/></svg>
<div class="cap" style="left:10px;top:562px;font-size:17.4px;color:#6b6b6b">...©Artistic Images - E. Homan.jpg</div>
<div class="a" style="left:8.5px;top:590px;width:269px;height:247px;border:3px solid #2b86f6"></div>
<svg class="a" style="left:244px;top:597px" width="17" height="12" viewBox="0 0 17 12"><path d="M1 1.5 Q4.5 0 8.5 2 Q12.5 0 16 1.5 V10.5 Q12.5 9 8.5 11 Q4.5 9 1 10.5 Z M8.5 2 V11" fill="none" stroke="#6a6a6a" stroke-width="1.3"/></svg>
<svg class="a" style="left:25.5px;top:636px" width="233" height="155"><use href="#pc2" xlink:href="#pc2" width="100%" height="100%"/></svg>
<div class="cap" style="left:10px;top:843px;font-size:17.4px;color:#6b6b6b">...©Artistic Images - E. Homan.jpg</div>
<svg class="a" style="left:25.5px;top:912px" width="233" height="164"><use href="#pc3" xlink:href="#pc3" width="100%" height="100%"/></svg>
<svg class="a" style="left:25px;top:1095px" width="16" height="19" viewBox="0 0 16 19"><path d="M10 2.1 L12.8 4.1 L8.6 11.8 L5.4 9.1 Z" fill="none" stroke="#333" stroke-width="1.3" stroke-linejoin="round"/><path d="M5.4 9.1 Q2.6 10.3 2.3 13.6 L1.2 16.3 Q4.2 17.2 7 15.1 Q9.3 13.2 8.6 11.8" fill="none" stroke="#333" stroke-width="1.3" stroke-linejoin="round"/></svg>
<div class="cap" style="left:10px;top:1122px;font-size:17.4px;color:#6b6b6b">...©Artistic Images - E. Homan.jpg</div>
<svg class="a" style="left:244px;top:1159px" width="17" height="12" viewBox="0 0 17 12"><path d="M1 1.5 Q4.5 0 8.5 2 Q12.5 0 16 1.5 V10.5 Q12.5 9 8.5 11 Q4.5 9 1 10.5 Z M8.5 2 V11" fill="none" stroke="#6a6a6a" stroke-width="1.3"/></svg>
<svg class="a" style="left:25.5px;top:1193px" width="233" height="164"><use href="#pc3" xlink:href="#pc3" width="100%" height="100%"/></svg>
<div class="cap" style="left:10px;top:1403px;font-size:17.4px;color:#6b6b6b">...©Artistic Images - E. Homan.jpg</div>
<div class="a" style="left:286px;top:1311px;width:12px;height:112px;border-radius:6px;background:#c2c2c2"></div>



<!-- Set 1 bar -->
<div class="a" style="left:0;top:1432px;width:304px;height:118px;background:#e3e3e3;border-top:2px solid #b4b4b4"></div>
<div class="t" style="left:22px;top:1448px;font-size:19px;color:#222">Set 1</div>
<div class="a" style="left:6px;top:1481px;width:295px;height:2px;background:#b9b9b9"></div>
<div class="vd" style="left:76.5px;top:1489px;height:55px"></div>
<!-- bottom icons -->
<svg class="a" style="left:18px;top:1496px" width="42" height="42" viewBox="0 0 42 42">
<g fill="#5f5f5f"><rect x="1.3" y="1.5" width="6.7" height="6.5"/><rect x="1.3" y="12" width="6.7" height="6.5"/><rect x="1.3" y="22.4" width="6.7" height="6.5"/><rect x="1.3" y="32.8" width="6.7" height="6.5"/></g>
<g fill="none" stroke="#5f5f5f" stroke-width="1.8">
<rect x="12.7" y="2.4" width="4.8" height="4.8"/><rect x="23.1" y="2.4" width="4.8" height="4.8"/><rect x="33.5" y="2.4" width="4.8" height="4.8"/>
<rect x="12.7" y="12.8" width="4.8" height="4.8"/><rect x="23.1" y="12.8" width="4.8" height="4.8"/><rect x="33.5" y="12.8" width="4.8" height="4.8"/>
<rect x="12.7" y="23.2" width="4.8" height="4.8"/><rect x="23.1" y="23.2" width="4.8" height="4.8"/><rect x="33.5" y="23.2" width="4.8" height="4.8"/>
<rect x="12.7" y="33.6" width="4.8" height="4.8"/><rect x="23.1" y="33.6" width="4.8" height="4.8"/><rect x="33.5" y="33.6" width="4.8" height="4.8"/>
</g></svg>
<svg class="a" style="left:95px;top:1495px" width="40" height="42" viewBox="0 0 40 42"><path d="M2 2.5 H38 L24 22 V38 L16 41 V22 Z" fill="none" stroke="#5f5f5f" stroke-width="2.6" stroke-linejoin="round"/></svg>

<!-- MAIN TOOLBAR -->
<div class="a" style="left:323px;top:46px;width:2290px;height:75px;background:#e3e3e3;border:2px solid #b4b4b4;border-top:none;border-right:none;border-bottom-left-radius:8px"></div>

<!-- BOOK BAR -->
<div class="bar" style="left:323px;top:137px;width:2194px;height:51px"></div>


<!-- ROW 1 SPREADS -->
<svg class="a" style="left:332px;top:213px" width="490" height="248" viewBox="332 213 490 248">
<rect x="333.8" y="220" width="233.5" height="233" fill="none" stroke="#111" stroke-width="2.2"/>
<path d="M334 220 L567 453 M567 220 L334 453" stroke="#111" stroke-width="2"/>
<path d="M575.3 215 V457.5" stroke="#111" stroke-width="2.4"/>
<rect x="584.2" y="220" width="232.8" height="233" fill="none" stroke="#111" stroke-width="2.2"/>
</svg>
<div class="cap" style="left:600px;width:200px;top:466.6px">Side 01</div>

<div class="sp" style="left:849px;top:218.5px;width:479px;height:236px;box-shadow:inset 0 0 0 1px #9c9c9c"></div>
<svg class="a" style="left:849px;top:218.5px" width="239.5" height="236"><use href="#pf1" xlink:href="#pf1" width="100%" height="100%"/></svg>
<svg class="a" style="left:1169.5px;top:264.5px" width="74.5" height="71"><use href="#pk1" xlink:href="#pk1" width="100%" height="100%"/></svg>
<svg class="a" style="left:1169.5px;top:338px" width="74.5" height="71.5"><use href="#pk2" xlink:href="#pk2" width="100%" height="100%"/></svg>
<div class="cap" style="left:987px;width:200px;top:466.6px">Side 02 - Side 03</div>

<div class="sp" style="left:1363px;top:218.5px;width:479px;height:236px;box-shadow:inset 0 0 0 1px #9c9c9c"></div>
<svg class="a" style="left:1425px;top:254px" width="119" height="166"><use href="#pf2" xlink:href="#pf2" width="100%" height="100%"/></svg>
<svg class="a" style="left:1661.5px;top:254px" width="118.5" height="166"><use href="#pf2" xlink:href="#pf2" width="100%" height="100%"/></svg>
<div class="cap" style="left:1501px;width:200px;top:466.6px">Side 04 - Side 05</div>

<div class="sp" style="left:1877px;top:218.5px;width:479px;height:236px;box-shadow:inset 0 0 0 1px #9c9c9c"></div>
<svg class="a" style="left:1877px;top:218.5px" width="240" height="236"><use href="#pa1" xlink:href="#pa1" width="100%" height="100%"/></svg>
<svg class="a" style="left:2197.5px;top:264.5px" width="74.5" height="71"><use href="#pk3" xlink:href="#pk3" width="100%" height="100%"/></svg>
<svg class="a" style="left:2197.5px;top:338px" width="74.5" height="71.5"><use href="#pk4" xlink:href="#pk4" width="100%" height="100%"/></svg>
<div class="cap" style="left:2016px;width:200px;top:466.6px">Side 06 - Side 07</div>

<!-- ROW 2 SPREADS -->
<div class="sp" style="left:335px;top:499.6px;width:479px;height:236px;box-shadow:inset 0 0 0 1px #9c9c9c"></div>
<svg class="a" style="left:397.3px;top:535px" width="118.2" height="165.5"><use href="#pv1" xlink:href="#pv1" width="100%" height="100%"/></svg>
<svg class="a" style="left:633.7px;top:535px" width="118.3" height="165.5"><use href="#pv2" xlink:href="#pv2" width="100%" height="100%"/></svg>
<div class="cap" style="left:473px;width:200px;top:747.8px">Side 08 - Side 09</div>

<svg class="a" style="left:849px;top:499.6px" width="479" height="236"><use href="#pt1" xlink:href="#pt1" width="100%" height="100%"/></svg>
<div class="cap" style="left:987px;width:200px;top:747.8px">Side 10 - Side 11</div>

<div class="sp" style="left:1363px;top:499.6px;width:479px;height:236px;box-shadow:inset 0 0 0 1px #9c9c9c"></div>
<svg class="a" style="left:1363px;top:499.6px" width="240" height="236"><use href="#ps7" xlink:href="#ps7" width="100%" height="100%"/></svg>

<!-- TEMPLATES ROW -->
<svg class="a" style="left:320px;top:1140px" width="2060" height="270" viewBox="320 1140 2060 270">
<rect x="335" y="1154" width="460" height="239.5" fill="#000"/>
<path d="M335 1154 L795 1393.5 M795 1154 L335 1393.5" stroke="#5e5e5e" stroke-width="2"/>
<rect x="849" y="1154" width="479" height="239.5" fill="#a3a3a3"/>
<rect x="908.5" y="1189" width="121" height="169" fill="#000" stroke="#5e5e5e" stroke-width="2"/>
<path d="M908.5 1189 L1029.5 1358 M1029.5 1189 L908.5 1358" stroke="#5e5e5e" stroke-width="2"/>
<rect x="1877" y="1154" width="479" height="239.5" fill="#a3a3a3"/>
<rect x="1877" y="1154" width="359.5" height="239.5" fill="#000"/>
<path d="M1877 1154 L2236.5 1393.5 M2236.5 1154 L1877 1393.5" stroke="#5e5e5e" stroke-width="2"/>
<rect x="2259.5" y="1154" width="73" height="78.5" fill="#000" stroke="#8a8a8a" stroke-width="2"/>
<rect x="2259.5" y="1234.5" width="73" height="78.5" fill="#000" stroke="#8a8a8a" stroke-width="2"/>
<rect x="2259.5" y="1315" width="73" height="78.5" fill="#000" stroke="#8a8a8a" stroke-width="2"/>
<path d="M2259.5 1154 L2332.5 1232.5 M2332.5 1154 L2259.5 1232.5 M2259.5 1234.5 L2332.5 1313 M2332.5 1234.5 L2259.5 1313 M2259.5 1315 L2332.5 1393.5 M2332.5 1315 L2259.5 1393.5" stroke="#5e5e5e" stroke-width="2"/>
<!-- notches -->
<rect x="326" y="1146" width="28.5" height="28" rx="5" fill="#efefef"/>
<rect x="332" y="1152.6" width="16" height="15.7" rx="2" fill="#fbd22b"/>
<rect x="840" y="1146" width="28.5" height="28" rx="5" fill="#efefef"/>
<rect x="846" y="1152.6" width="16" height="15.5" rx="2" fill="#fbd22b"/>
<rect x="797" y="1376" width="30" height="30" rx="5" fill="#efefef"/>
<rect x="2335" y="1369" width="30" height="35" rx="5" fill="#efefef"/>
<g fill="none" stroke="#666" stroke-width="1.2">
<path d="M802.5 1383.5 L809.5 1380 L816.5 1383.5 L809.5 1387 Z M802.5 1386 L809.5 1389.5 L816.5 1386 M802.5 1388.5 L809.5 1392 L816.5 1388.5"/>
<path d="M2344 1380 L2351 1376.5 L2358 1380 L2351 1383.5 Z M2344 1383.5 L2351 1387 L2358 1383.5 M2344 1387 L2351 1390.5 L2358 1387"/>
</g>
</svg>
<div class="cap" style="left:473.5px;width:200px;top:1403px">Pano and Partial Pano</div>
<div class="cap" style="left:987px;width:200px;top:1403px">2 Image Spread</div>
<div class="cap" style="left:2016px;width:200px;top:1403px">4 Image Spread</div>
<div class="a" style="left:2496.5px;top:1157.5px;width:12px;height:101px;border-radius:6px;background:#c2c2c2"></div>


<!-- RIGHT SIDEBAR -->
<div class="a" style="left:2533.5px;top:138px;width:80px;height:333px;background:#e3e3e3;border:2px solid #b4b4b4;border-right:none;border-radius:8px 0 0 8px"></div>
<div class="a" style="left:2533.5px;top:488.5px;width:80px;height:267.5px;background:#e3e3e3;border:2px solid #b4b4b4;border-right:none;border-radius:8px 0 0 8px"></div>
<div class="a" style="left:2533.5px;top:773px;width:80px;height:133px;background:#e3e3e3;border:2px solid #b4b4b4;border-right:none;border-radius:8px 0 0 8px"></div>
<div class="a" style="left:2533.5px;top:923px;width:80px;height:133px;background:#e3e3e3;border:2px solid #b4b4b4;border-right:none;border-radius:8px 0 0 8px"></div>
<div class="a" style="left:2540px;top:204px;width:55px;height:2px;background:#c4c4c4"></div>
<div class="a" style="left:2540px;top:271.5px;width:55px;height:2px;background:#c4c4c4"></div>
<div class="a" style="left:2540px;top:338px;width:55px;height:2px;background:#c4c4c4"></div>
<div class="a" style="left:2540px;top:405.5px;width:55px;height:2px;background:#c4c4c4"></div>
<div class="a" style="left:2540px;top:555.5px;width:55px;height:2px;background:#c4c4c4"></div>
<div class="a" style="left:2540px;top:622px;width:55px;height:2px;background:#c4c4c4"></div>
<div class="a" style="left:2540px;top:689.5px;width:55px;height:2px;background:#c4c4c4"></div>
<div class="a" style="left:2540px;top:839.5px;width:55px;height:2px;background:#c4c4c4"></div>
<div class="a" style="left:2540px;top:989px;width:55px;height:2px;background:#c4c4c4"></div>
<svg class="a" style="left:2549.5px;top:153.5px" width="34" height="34" viewBox="0 0 34 34"><g fill="#2a86f4"><rect x="0" y="0" width="9.5" height="9.5" rx="1.2"/><rect x="12.2" y="0" width="9.5" height="9.5" rx="1.2"/><rect x="24.5" y="0" width="9.5" height="9.5" rx="1.2"/><rect x="0" y="12.2" width="9.5" height="9.5" rx="1.2"/><rect x="12.2" y="12.2" width="9.5" height="9.5" rx="1.2"/><rect x="24.5" y="12.2" width="9.5" height="9.5" rx="1.2"/><rect x="0" y="24.5" width="9.5" height="9.5" rx="1.2"/><rect x="12.2" y="24.5" width="9.5" height="9.5" rx="1.2"/><rect x="24.5" y="24.5" width="9.5" height="9.5" rx="1.2"/></g></svg>
<svg class="a" style="left:2549px;top:225px" width="36" height="25" viewBox="0 0 36 25"><path d="M1.5 12.5 Q18 -6 34.5 12.5 Q18 31 1.5 12.5 Z" fill="none" stroke="#6b6b6b" stroke-width="2.2"/><ellipse cx="18" cy="12.5" rx="7.2" ry="9.6" fill="none" stroke="#6b6b6b" stroke-width="1.9"/><circle cx="17.8" cy="12" r="1.7" fill="#6b6b6b"/></svg>
<svg class="a" style="left:2549px;top:287px" width="35" height="35" viewBox="0 0 35 35"><path d="M7.5 0 V27 H34 M0 7.5 H27 V35" fill="none" stroke="#6b6b6b" stroke-width="3.2"/></svg>
<svg class="a" style="left:2549.5px;top:361px" width="34" height="20" viewBox="0 0 34 20"><rect x="1" y="1" width="32" height="18" fill="none" stroke="#a9a9a9" stroke-width="2"/><path d="M7 1 V7 M12.5 1 V10 M18 1 V7 M23.5 1 V10 M29 1 V7" stroke="#a9a9a9" stroke-width="1.8"/></svg>
<svg class="a" style="left:2549px;top:421px" width="46" height="36" viewBox="0 0 46 36"><rect x="1.5" y="1.5" width="31.5" height="32" rx="3" fill="none" stroke="#6b6b6b" stroke-width="2.6"/><path d="M11.5 9.5 V25.5 L24.5 17.5 Z" fill="#6b6b6b"/><path d="M35.5 -10 L45 -10 L45 0 Z" fill="#9a9a9a"/></svg>
<div class="a" style="left:2584.5px;top:411px;width:0;height:0;border-left:9px solid transparent;border-top:9.5px solid #9a9a9a"></div>
<svg class="a" style="left:2549.5px;top:505px" width="34" height="32" viewBox="0 0 34 32"><rect x="1.2" y="1.2" width="31.6" height="29.6" fill="none" stroke="#b0b0b0" stroke-width="2.4"/><rect x="6" y="6" width="22" height="7" fill="#b0b0b0"/><rect x="6" y="16" width="9.5" height="10" fill="#b0b0b0"/><rect x="18.5" y="16" width="9.5" height="10" fill="#b0b0b0"/></svg>
<svg class="a" style="left:2549px;top:572px" width="35" height="32" viewBox="0 0 35 32"><path d="M1 2 L22 2 L22 20 L1 20 Z" fill="#c4c4c4"/><path d="M7 6 L31 3 L34 26 L10 30 Z" fill="none" stroke="#b0b0b0" stroke-width="2.6"/><rect x="14" y="11" width="12" height="11" fill="#b0b0b0" transform="rotate(-8 20 16)"/></svg>
<svg class="a" style="left:2551px;top:640px" width="30" height="33" viewBox="0 0 30 33"><path d="M2 19 V12 Q2 6 8 6 H22 M17 1 L22.5 6 L17 11" fill="none" stroke="#b0b0b0" stroke-width="2.2" stroke-linejoin="round"/><rect x="11.5" y="17" width="16" height="14.5" rx="3" fill="none" stroke="#b0b0b0" stroke-width="2.4"/></svg>
<svg class="a" style="left:2549.5px;top:711.5px" width="34" height="23" viewBox="0 0 34 23"><rect x="1.2" y="1.2" width="31.6" height="20.6" fill="none" stroke="#b0b0b0" stroke-width="2.4"/><path d="M17 1 V22" stroke="#b0b0b0" stroke-width="2"/><path d="M5 11.5 L11 6 V17 Z M29 11.5 L23 6 V17 Z" fill="#b0b0b0"/><path d="M10 11.5 H24" stroke="#b0b0b0" stroke-width="3"/></svg>
<svg class="a" style="left:2549.5px;top:788.5px" width="34" height="34" viewBox="0 0 34 34"><path d="M1.2 26 V1.2 H25" fill="none" stroke="#b0b0b0" stroke-width="2.2"/><path d="M4.5 29.5 V4.5 H28.5" fill="none" stroke="#b0b0b0" stroke-width="2.2"/><rect x="8" y="8" width="24.5" height="24.5" fill="none" stroke="#b0b0b0" stroke-width="2.4"/><path d="M20.2 15 V25.5 M15 20.2 H25.5" stroke="#b0b0b0" stroke-width="1.8"/></svg>
<svg class="a" style="left:2553px;top:855.5px" width="28" height="35" viewBox="0 0 28 35"><path d="M1.5 1.5 H18 L26.5 10 V33.5 H1.5 Z M18 1.5 V10 H26.5" fill="none" stroke="#b0b0b0" stroke-width="2.4" stroke-linejoin="round"/><path d="M6 14.5 H22 M6 19.5 H22 M6 24.5 H22 M6 29 H22 M6 9.5 H13" stroke="#b0b0b0" stroke-width="2"/></svg>
<div class="a" style="left:2554px;top:942px;width:0;height:0;border-top:11.5px solid transparent;border-bottom:11.5px solid transparent;border-left:24.5px solid #b0b0b0"></div>
<div class="a" style="left:2554px;top:1009px;width:0;height:0;border-top:12px solid transparent;border-bottom:12px solid transparent;border-right:24.5px solid #b0b0b0"></div>

<!-- FILTER BAR -->
<div class="bar" style="left:323px;top:1039px;width:2194px;height:51px"></div>

<!-- STATUS BAR -->
<div class="a" style="left:323px;top:1432px;width:2290px;height:130px;background:#e2e2e2;border:2px solid #aaaaaa;border-right:none;border-top-left-radius:8px"></div>


<!-- toolbar icons -->
<div class="vd" style="left:399px;top:51px;height:64px"></div>
<div class="vd" style="left:475.5px;top:51px;height:64px"></div>
<div class="vd" style="left:552px;top:51px;height:64px"></div>
<svg class="a" style="left:342px;top:70px" width="38" height="25" viewBox="0 0 38 25"><rect x="1.5" y="1.5" width="34" height="21" rx="2" fill="none" stroke="#6b6b6b" stroke-width="2.4"/><path d="M2 2.5 L18.5 15 L35 2.5 M2 22 L13 12 M35 22 L24 12" fill="none" stroke="#6b6b6b" stroke-width="2.2"/></svg>
<svg class="a" style="left:418px;top:64px" width="38" height="38" viewBox="0 0 38 38"><rect x="8.5" y="1.5" width="26" height="18" rx="1.5" fill="#e3e3e3" stroke="#6b6b6b" stroke-width="2.2"/><rect x="2" y="10.5" width="27" height="18" rx="1.5" fill="#e3e3e3" stroke="#6b6b6b" stroke-width="2.2"/><path d="M11 36 L15.5 30 L20 30 L24 36 Z" fill="#6b6b6b"/></svg>
<svg class="a" style="left:500px;top:65px" width="28" height="37" viewBox="0 0 28 37"><path d="M2.5 11 H11 L24 1.8 V34.5 L11 24 H2.5 Z M11 11 V24" fill="none" stroke="#6b6b6b" stroke-width="2.4" stroke-linejoin="round"/></svg>
<svg class="a" style="left:571px;top:65px" width="38" height="37" viewBox="0 0 38 37"><rect x="2" y="2" width="33" height="32" fill="none" stroke="#a9a9a9" stroke-width="2" stroke-dasharray="3.5 2.5"/><circle cx="20" cy="13.5" r="2.8" fill="none" stroke="#a9a9a9" stroke-width="1.8"/><path d="M2.5 24 L11 15.5 L22 27 L27 22 L35 30" fill="none" stroke="#a9a9a9" stroke-width="1.8"/></svg>

<div class="vd" style="left:1800px;top:51px;height:64px"></div>
<div class="vd" style="left:2006px;top:51px;height:64px"></div>
<div class="vd" style="left:2193px;top:51px;height:64px"></div>
<div class="vd" style="left:2373px;top:51px;height:64px"></div>
<svg class="a" style="left:1642px;top:67px" width="42" height="31" viewBox="0 0 42 31"><rect x="1.3" y="1.3" width="38" height="27.5" fill="none" stroke="#6b6b6b" stroke-width="2.2"/><circle cx="21" cy="9.5" r="2.7" fill="none" stroke="#6b6b6b" stroke-width="1.8"/><path d="M1.5 22 L11.5 12 L24 25 L29.5 19.5 L39.5 28" fill="none" stroke="#6b6b6b" stroke-width="2"/></svg>
<div class="t" style="left:1711px;top:73.5px;font-size:19.6px;color:#333">Images</div>
<svg class="a" style="left:1832px;top:64px" width="42" height="38" viewBox="0 0 42 38"><path d="M2.5 3 H36 Q38.6 3.4 38.4 7 Q38 11 36.6 15.5 Q38.6 17.5 38.6 19 Q38.6 21 36.6 23.5 Q38.6 29 38.6 31.5 Q38.2 35 34.2 34.8 L24.5 33 Q21.5 36.2 18.2 34.2 Q15.2 32.4 12 33 L5.5 34.5 Q2.5 34.8 2.5 31 Z" fill="none" stroke="#636363" stroke-width="2" stroke-linejoin="round"/><rect x="7" y="7.5" width="13" height="21" rx="1.8" fill="none" stroke="#636363" stroke-width="1.9"/><rect x="23" y="7.5" width="10.5" height="9" rx="1.8" fill="none" stroke="#636363" stroke-width="1.9"/><rect x="23" y="20" width="10.5" height="8.5" rx="1.8" fill="none" stroke="#636363" stroke-width="1.9"/></svg>
<div class="t" style="left:1901px;top:73.5px;font-size:19.6px;color:#333">Products</div>
<svg class="a" style="left:2028px;top:64px" width="62" height="38" viewBox="0 0 62 38"><g fill="none" stroke="#636363" stroke-width="1.7" stroke-linejoin="round"><path d="M9.8 10.8 Q11.2 3.2 20.1 3.2 H42.4 Q50.8 3.2 52.2 10.8"/><path d="M24.2 3.2 V20.6 M37.9 3.2 V20.6"/><path d="M6.2 24.5 Q2 20.5 2.6 15.8 Q3.8 10.6 8.7 10.6 Q14.6 10.8 15.1 17 V20.6"/><path d="M55.8 24.5 Q60 20.5 59.4 15.8 Q58.2 10.6 53.3 10.6 Q47.4 10.8 46.9 17 V20.6"/><rect x="8.4" y="20.6" width="45.2" height="12" rx="3.6"/><path d="M6.2 24.5 V30.8 Q6.6 33.2 9.2 33.2 H52.8 Q55.4 33.2 55.8 30.8 V24.5"/></g><path d="M12 33 V35.6 M50 33 V35.6" stroke="#636363" stroke-width="2.2"/></svg>
<div class="t" style="left:2107px;top:73.5px;font-size:19.6px;color:#333">Rooms</div>
<svg class="a" style="left:2224px;top:66px" width="43" height="33" viewBox="0 0 43 33"><g fill="none" stroke="#2a85f8" stroke-width="1.9" stroke-linejoin="round"><path d="M6.4 4.4 Q14.5 2.6 20.6 9.4 V29.4 Q14.5 24.6 6.4 25.4 Z"/><path d="M36.8 4.4 Q28.7 2.6 22.6 9.4 V29.4 Q28.7 24.6 36.8 25.4 Z"/><path d="M2.9 8.4 V30.2 H20.6 M40.3 8.4 V30.2 H22.6"/></g></svg>
<div class="t" style="left:2294px;top:73.5px;font-size:19.6px;color:#0f5fcc">Books</div>
<svg class="a" style="left:2406px;top:66px" width="40" height="33" viewBox="0 0 40 33"><path d="M1.3 3 H38.9 M4.7 3 V24.7 H35 V3" fill="none" stroke="#636363" stroke-width="2.2"/><path d="M15.7 8.3 V19.4 L25.9 13.85 Z" fill="none" stroke="#636363" stroke-width="2" stroke-linejoin="round"/><path d="M20.3 24.7 V31 M14.8 31 H25.6" stroke="#636363" stroke-width="2.3"/></svg>
<div class="t" style="left:2474px;top:73.5px;font-size:19.6px;color:#333">Slideshows</div>

<!-- book bar contents -->
<div class="t" style="left:339px;top:153.5px;font-size:19.5px;color:#2a2a2a">Book 1 (13 sides, 14 Images)</div>
<div class="tri" style="left:606px;top:158px;border-top-color:#6b6b6b"></div>
<div class="vd" style="left:645px;top:144px;height:37px"></div>
<div class="t" style="left:664px;top:153.5px;font-size:19.8px;color:#2a2a2a">Default Book Design 10 X 10</div>
<div class="tri" style="left:930px;top:158px;border-top-color:#6b6b6b"></div>
<div class="t" style="left:2123px;top:153.5px;font-size:20.2px;color:#2a2a2a">Stretch Mat (Bleed Smart)</div>
<div class="vd" style="left:2378px;top:144px;height:38px"></div>
<div class="vd" style="left:2453px;top:144px;height:38px"></div>
<svg class="a" style="left:2402px;top:148px" width="28" height="27" viewBox="0 0 28 27"><rect x="2" y="2" width="24" height="22.5" fill="none" stroke="#6b6b6b" stroke-width="3.4"/><path d="M14 2 V24.5" stroke="#6b6b6b" stroke-width="3"/></svg>
<svg class="a" style="left:2477px;top:148px" width="27" height="26" viewBox="0 0 27 26"><rect x="0" y="0" width="27" height="26" fill="#2a86f4"/><path d="M2 4.5 H25 M2 21.5 H25" stroke="#e8f1fd" stroke-width="1.6" stroke-dasharray="3 2"/><rect x="4.5" y="9" width="7.5" height="8" fill="#e8f1fd"/><rect x="15" y="9" width="7.5" height="8" fill="#e8f1fd"/></svg>

<!-- filter bar contents -->
<div class="t" style="left:343.7px;top:1054.3px;font-size:19.9px;color:#2a2a2a">All Categories</div>
<div class="tri" style="left:480px;top:1060px;border-top-color:#9a9a9a"></div>
<div class="vd" style="left:514px;top:1046px;height:38px"></div>
<div class="t" style="left:529px;top:1054.3px;font-size:19.7px;color:#2a2a2a">All Folders (179)</div>
<div class="tri" style="left:686px;top:1060px;border-top-color:#9a9a9a"></div>
<div class="t" style="left:2179px;top:1054.6px;font-size:20.3px;color:#2a2a2a">Smart Filter: Off</div>
<div class="tri" style="left:2335px;top:1060px;border-top-color:#9a9a9a"></div>
<div class="vd" style="left:2370px;top:1046px;height:38px"></div>
<div class="vd" style="left:2423px;top:1046px;height:38px"></div>
<svg class="a" style="left:2383px;top:1052px" width="28" height="26" viewBox="0 0 28 26"><rect x="0" y="0" width="28" height="26" fill="#b4b4b4"/><path d="M6 8 Q16 4 19 14 L19 20 M15 17 L19 21 L23 17" fill="none" stroke="#d6d6d6" stroke-width="2.4"/></svg>
<svg class="a" style="left:2435px;top:1052px" width="28" height="26" viewBox="0 0 28 26"><rect x="0" y="0" width="28" height="26" fill="#b4b4b4"/><path d="M6 8 Q16 4 19 14 L19 20 M15 17 L19 21 L23 17" fill="none" stroke="#d6d6d6" stroke-width="2.2"/><path d="M3 24 L25 2" stroke="#fafafa" stroke-width="3"/></svg>
<div class="a" style="left:2487px;top:1048px;width:0;height:0;border-left:8px solid transparent;border-right:8px solid transparent;border-bottom:12px solid #6b6b6b"></div>
<div class="a" style="left:2487px;top:1069px;width:0;height:0;border-left:8px solid transparent;border-right:8px solid transparent;border-top:12px solid #a5a5a5"></div>

<!-- status text -->
<!--STATUS_PLACEHOLDER-->
<div class="t" style="left:2333px;top:1448px;font-size:21.2px;color:#2a2a2a">Design: 10.0" x 10.0" (C)</div>


<!-- MENU -->
<div class="a" style="left:528.5px;top:1091px;width:290px;height:291.5px;background:#e2e2e2;border:1px solid #a9a9a9;border-radius:8px;box-shadow:0 1px 3px rgba(0,0,0,0.15)"></div>
<div class="a" style="left:530.5px;top:1132px;width:284px;height:2px;background:#f6f6f6"></div>
<div class="a" style="left:530.5px;top:1173.3px;width:284px;height:2px;background:#f6f6f6"></div>
<div class="a" style="left:530.5px;top:1310.5px;width:284px;height:2px;background:#f6f6f6"></div>
<div class="t" style="left:559.4px;top:1100.1px;font-size:19.7px;color:#1e1e1e">Select Multiple Groups</div>
<div class="t" style="left:559.4px;top:1142.1px;font-size:19.7px;color:#1e1e1e">All Folders</div>
<div class="t" style="left:559.4px;top:1183.4px;font-size:19.7px;color:#1e1e1e">Square Stacked Spreads</div>
<div class="t" style="left:559.4px;top:1215.8px;font-size:19.7px;color:#1e1e1e">Square Stacked Pages</div>
<div class="t" style="left:559.4px;top:1247.5px;font-size:19.7px;color:#1e1e1e">Vertical Stacked Spreads</div>
<div class="t" style="left:559.4px;top:1279.7px;font-size:19.7px;color:#1e1e1e">Vertical Stacked Pages</div>
<div class="t" style="left:559.4px;top:1321.4px;font-size:19.7px;color:#1e1e1e">Square Album Pages</div>
<div class="t" style="left:559.4px;top:1353.0px;font-size:19.7px;color:#1e1e1e">Vertical Album Pages</div>
<svg class="a" style="left:535px;top:1140px" width="18" height="19" viewBox="0 0 18 19"><path d="M0.8 12.6 Q2.3 10.8 4 12.6 L5.9 15 Q10 6.5 16.2 1.2 Q17.8 0.6 17.2 2.3 Q11.8 8.5 7.6 17.3 Q6.2 19 4.6 17.4 Z" fill="#222"/></svg>

<!-- DIALOG -->
<div class="a" style="left:1073px;top:535px;width:830px;height:996px;background:#ececec;border:1.5px solid #a9a9a9"></div>
<div class="t" style="left:1116.3px;top:559.3px;font-size:21.4px;color:#1e1e1e">Categories &amp; Folders</div>
<div class="a" style="left:1098.8px;top:586.5px;width:780px;height:921px;background:#e4e4e4;border:1px solid #dedede;border-radius:9px"></div>
<div class="a" style="left:1130.5px;top:615px;width:537.5px;height:832.5px;background:#fff;border:1.5px solid #c2c2c2"></div>
<div class="a" style="left:1131.5px;top:615.50px;width:535px;height:38.73px;background:#f4f4f4"></div>
<div class="a" style="left:1131.5px;top:653.83px;width:535px;height:38.73px;background:#0b5ed7"></div>
<div class="a" style="left:1131.5px;top:692.16px;width:535px;height:38.73px;background:#f4f4f4"></div>
<div class="a" style="left:1131.5px;top:730.49px;width:535px;height:38.73px;background:#ffffff"></div>
<div class="a" style="left:1131.5px;top:768.82px;width:535px;height:38.73px;background:#f4f4f4"></div>
<div class="a" style="left:1131.5px;top:807.15px;width:535px;height:38.73px;background:#ffffff"></div>
<div class="a" style="left:1131.5px;top:845.48px;width:535px;height:38.73px;background:#f4f4f4"></div>
<div class="a" style="left:1131.5px;top:883.81px;width:535px;height:38.73px;background:#ffffff"></div>
<div class="a" style="left:1131.5px;top:922.14px;width:535px;height:38.73px;background:#f4f4f4"></div>
<div class="a" style="left:1131.5px;top:960.47px;width:535px;height:38.73px;background:#ffffff"></div>
<div class="a" style="left:1131.5px;top:998.80px;width:535px;height:38.73px;background:#f4f4f4"></div>
<div class="a" style="left:1131.5px;top:1037.13px;width:535px;height:38.73px;background:#ffffff"></div>
<div class="a" style="left:1131.5px;top:1075.46px;width:535px;height:38.73px;background:#f4f4f4"></div>
<div class="a" style="left:1131.5px;top:1113.79px;width:535px;height:38.73px;background:#ffffff"></div>
<div class="a" style="left:1131.5px;top:1152.12px;width:535px;height:38.73px;background:#f4f4f4"></div>
<div class="a" style="left:1131.5px;top:1190.45px;width:535px;height:38.73px;background:#ffffff"></div>
<div class="a" style="left:1131.5px;top:1228.78px;width:535px;height:38.73px;background:#f4f4f4"></div>
<div class="a" style="left:1131.5px;top:1267.11px;width:535px;height:38.73px;background:#ffffff"></div>
<div class="a" style="left:1131.5px;top:1305.44px;width:535px;height:38.73px;background:#f4f4f4"></div>
<div class="a" style="left:1131.5px;top:1343.77px;width:535px;height:38.73px;background:#ffffff"></div>
<div class="a" style="left:1131.5px;top:1382.10px;width:535px;height:38.73px;background:#f4f4f4"></div>
<div class="a" style="left:1131.5px;top:1420.43px;width:535px;height:26.67px;background:#ffffff"></div>
<svg class="a" style="left:1130px;top:600px" width="120" height="250" viewBox="1130 600 120 250">
<path d="M1141 632 L1147 638.5 L1153 632" fill="none" stroke="#a6a6a6" stroke-width="1.8"/>
<path d="M1144.5 819.8 L1151 826.3 L1144.5 832.8" fill="none" stroke="#a6a6a6" stroke-width="1.8"/>
<path d="M1222.2 653.8 V692.2 M1222.2 673.0 H1235" fill="none" stroke="#ffffff" stroke-width="1.4"/>
<path d="M1222.2 692.2 V788.0 H1235 M1222.2 711.3 H1235 M1222.2 749.7 H1235" fill="none" stroke="#4a4a4a" stroke-width="1.4"/>
</svg>
<div class="t" style="left:1241.2px;top:625.8px;font-size:21.3px;color:#1e1e1e">Stacked Album/Book Pages</div>
<svg class="a" style="left:1165.2px;top:626.3px" width="19.5" height="19.5" viewBox="0 0 20 20"><rect x="0" y="0" width="20" height="20" rx="4.5" fill="#1c7cf4"/><path d="M4.8 10.5 L8.5 14.5 L15.5 5" fill="none" stroke="#fff" stroke-width="2.6" stroke-linecap="round" stroke-linejoin="round"/></svg>
<svg class="a" style="left:1211px;top:626.6px" width="21" height="18" viewBox="0 0 21 18"><path d="M1.3 2.4 Q1.3 1.2 2.5 1.2 H7.8 L10.6 3.8 H17.6 Q18.8 3.8 18.8 5 V15.3 Q18.8 16.5 17.6 16.5 H2.5 Q1.3 16.5 1.3 15.3 Z" fill="none" stroke="#111" stroke-width="2" stroke-linejoin="round"/></svg>
<div class="t" style="left:1241.2px;top:664.1px;font-size:21.3px;color:#ffffff">Square Stacked Spreads</div>
<div class="t" style="left:1555.5px;width:100px;text-align:right;top:664.1px;font-size:21.3px;color:#ffffff">10</div>
<svg class="a" style="left:1184.2px;top:664.1px" width="19.5" height="19.5" viewBox="0 0 20 20"><rect x="0" y="0" width="20" height="20" rx="4.5" fill="#1c7cf4"/><path d="M4.8 10.5 L8.5 14.5 L15.5 5" fill="none" stroke="#fff" stroke-width="2.6" stroke-linecap="round" stroke-linejoin="round"/></svg>
<div class="t" style="left:1241.2px;top:702.4px;font-size:21.3px;color:#1e1e1e">Square Stacked Pages</div>
<div class="t" style="left:1555.5px;width:100px;text-align:right;top:702.4px;font-size:21.3px;color:#1e1e1e">10</div>
<svg class="a" style="left:1184.2px;top:702.5px" width="19.5" height="19.5" viewBox="0 0 20 20"><rect x="0" y="0" width="20" height="20" rx="4.5" fill="#1c7cf4"/><path d="M4.8 10.5 L8.5 14.5 L15.5 5" fill="none" stroke="#fff" stroke-width="2.6" stroke-linecap="round" stroke-linejoin="round"/></svg>
<div class="t" style="left:1241.2px;top:740.8px;font-size:21.3px;color:#1e1e1e">Vertical Stacked Spreads</div>
<div class="t" style="left:1555.5px;width:100px;text-align:right;top:740.8px;font-size:21.3px;color:#1e1e1e">10</div>
<svg class="a" style="left:1184.2px;top:740.8px" width="19.5" height="19.5" viewBox="0 0 20 20"><rect x="0" y="0" width="20" height="20" rx="4.5" fill="#1c7cf4"/><path d="M4.8 10.5 L8.5 14.5 L15.5 5" fill="none" stroke="#fff" stroke-width="2.6" stroke-linecap="round" stroke-linejoin="round"/></svg>
<div class="t" style="left:1241.2px;top:779.1px;font-size:21.3px;color:#1e1e1e">Vertical Stacked Pages</div>
<div class="t" style="left:1555.5px;width:100px;text-align:right;top:779.1px;font-size:21.3px;color:#1e1e1e">5</div>
<svg class="a" style="left:1184.2px;top:779.1px" width="19.5" height="19.5" viewBox="0 0 20 20"><rect x="0" y="0" width="20" height="20" rx="4.5" fill="#1c7cf4"/><path d="M4.8 10.5 L8.5 14.5 L15.5 5" fill="none" stroke="#fff" stroke-width="2.6" stroke-linecap="round" stroke-linejoin="round"/></svg>
<div class="t" style="left:1241.2px;top:817.4px;font-size:21.3px;color:#1e1e1e">Albums/Book Pages</div>
<svg class="a" style="left:1165.2px;top:817.9px" width="19.5" height="19.5" viewBox="0 0 20 20"><rect x="0" y="0" width="20" height="20" rx="4.5" fill="#1c7cf4"/><path d="M4.8 10.5 L8.5 14.5 L15.5 5" fill="none" stroke="#fff" stroke-width="2.6" stroke-linecap="round" stroke-linejoin="round"/></svg>
<svg class="a" style="left:1211px;top:818.2px" width="21" height="18" viewBox="0 0 21 18"><path d="M1.3 2.4 Q1.3 1.2 2.5 1.2 H7.8 L10.6 3.8 H17.6 Q18.8 3.8 18.8 5 V15.3 Q18.8 16.5 17.6 16.5 H2.5 Q1.3 16.5 1.3 15.3 Z" fill="none" stroke="#111" stroke-width="2" stroke-linejoin="round"/></svg>
<div class="a" style="left:1688px;top:617.5px;width:157.5px;height:31px;background:#fff;border-radius:7px;box-shadow:0 0.5px 1.5px rgba(0,0,0,0.35),0 0 0 0.5px rgba(0,0,0,0.12)"></div>
<div class="a" style="left:1688px;top:676.5px;width:157.5px;height:31px;background:#fff;border-radius:7px;box-shadow:0 0.5px 1.5px rgba(0,0,0,0.35),0 0 0 0.5px rgba(0,0,0,0.12)"></div>
<div class="a" style="left:1688px;top:735.5px;width:157.5px;height:31px;background:#fff;border-radius:7px;box-shadow:0 0.5px 1.5px rgba(0,0,0,0.35),0 0 0 0.5px rgba(0,0,0,0.12)"></div>
<div class="a" style="left:1687px;top:793.5px;width:160px;height:1.5px;background:#c9c9c9"></div>
<div class="a" style="left:1688px;top:820px;width:157.5px;height:31px;background:#f0f0f0;border-radius:7px;box-shadow:0 0.5px 1.5px rgba(0,0,0,0.2),0 0 0 0.5px rgba(0,0,0,0.08)"></div>
<div class="t" style="left:1688px;width:157.5px;text-align:center;top:622.0px;font-size:21px;color:#1e1e1e">Add</div>
<div class="t" style="left:1688px;width:157.5px;text-align:center;top:681.4px;font-size:21px;color:#1e1e1e">Rename</div>
<div class="t" style="left:1688px;width:157.5px;text-align:center;top:740.5px;font-size:21px;color:#1e1e1e">Delete</div>
<div class="t" style="left:1688px;width:157.5px;text-align:center;top:824.7px;font-size:21px;color:#b4b4b4">Sort By</div>
<div class="t" style="left:1120.4px;top:1456.8px;font-size:18.8px;color:#1e1e1e">Drag row to change order</div>
<div class="a" style="left:1884.5px;top:1028.3px;width:10px;height:10px;border-radius:50%;background:#a8a8a8"></div>

<!-- ARROW -->
<svg class="a" style="left:0;top:0" width="2600" height="1550" viewBox="0 0 2600 1550">
<defs><filter id="ash" x="-10%" y="-10%" width="120%" height="120%"><feGaussianBlur in="SourceAlpha" stdDeviation="2.5"/><feOffset dx="2.5" dy="3" result="o"/><feComponentTransfer><feFuncA type="linear" slope="0.45"/></feComponentTransfer><feMerge><feMergeNode/><feMergeNode in="SourceGraphic"/></feMerge></filter></defs>
<path d="M1159.0 737.1 L732.2 1137.8 L758.5 1145.3 Q718.1 1154.2 681.9 1167.5 Q697.7 1132.4 709.3 1093.0 L714.6 1119.1 L1141.0 717.9 A13.2 13.2 0 0 1 1159.0 737.1 Z" fill="#fa4449" filter="url(#ash)"/>
</svg>
</div>
</body></html>
